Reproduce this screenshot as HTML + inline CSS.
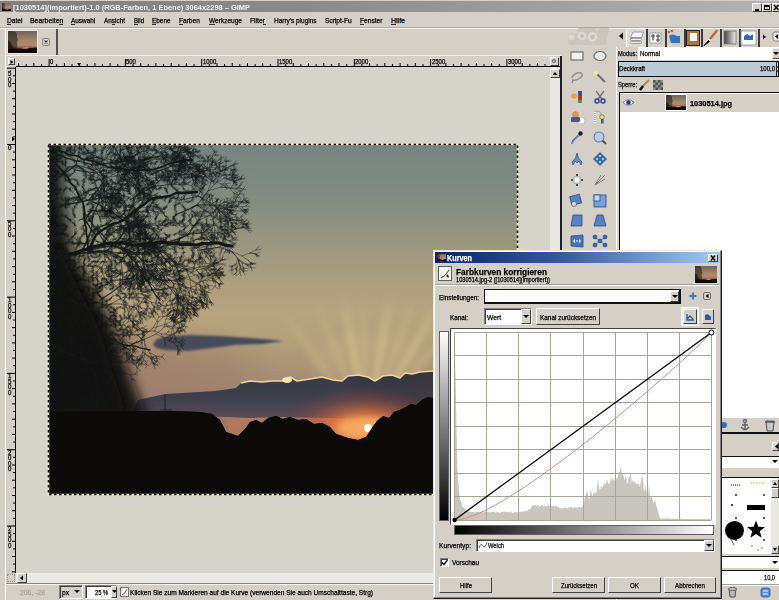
<!DOCTYPE html><html><head><meta charset="utf-8"><style>
html,body{margin:0;padding:0;width:779px;height:600px;overflow:hidden;background:#d4d0c8;}
body{position:relative;font-family:"Liberation Sans",sans-serif;}
div{position:absolute;}
.t{position:absolute;white-space:nowrap;line-height:normal;transform-origin:0 0;-webkit-text-stroke:0.25px currentColor;}
svg{position:absolute;overflow:hidden;}
</style></head><body>
<div style="left:0px;top:0px;width:779px;height:600px;background:#d4d0c8;"></div>
<svg width="0" height="0" style="position:absolute"><defs>
<linearGradient id="thsky" x1="0" y1="0" x2="0" y2="1"><stop offset="0" stop-color="#70645a"/><stop offset=".45" stop-color="#a4886a"/><stop offset=".65" stop-color="#b48a68"/><stop offset=".8" stop-color="#6a4838"/><stop offset="1" stop-color="#0c0806"/></linearGradient>
<radialGradient id="thsun" cx=".6" cy=".5" r=".5"><stop offset="0" stop-color="#ffd080"/><stop offset=".4" stop-color="#e89050"/><stop offset="1" stop-color="#a06040" stop-opacity="0"/></radialGradient>
<symbol id="th" viewBox="0 0 100 75" preserveAspectRatio="none">
<rect width="100" height="75" fill="url(#thsky)"/>
<ellipse cx="58" cy="60" rx="18" ry="8" fill="url(#thsun)"/>
<path d="M0 0 H22 Q34 8 30 20 Q38 30 30 40 Q36 50 28 62 H0Z" fill="#1c1812" opacity=".55"/><path d="M0 30 Q14 40 18 62 H0Z" fill="#140f0c" opacity=".7"/>
<path d="M0 62 Q20 58 40 60 Q60 62 80 58 L100 57 V75 H0Z" fill="#0c0906"/>
</symbol></defs></svg>
<div style="left:0px;top:1px;width:779px;height:11px;background:linear-gradient(90deg,#808080 0%,#8a8a8a 40%,#b4b4b4 100%);"></div>
<svg style="position:absolute;left:2px;top:3px" width="9" height="8"><use href="#th" width="9" height="8"/></svg>
<span class="t" style="left:12.5px;top:3px;font-size:8px;color:#f2f2f2;font-weight:bold;transform:scaleX(0.932);-webkit-text-stroke:0;">[1030514](importiert)-1.0 (RGB-Farben, 1 Ebene) 3064x2298 – GIMP</span>
<div style="left:752px;top:3px;width:10px;height:9px;background:#d4d0c8;border-top:1px solid #fff;border-left:1px solid #fff;border-right:1px solid #404040;border-bottom:1px solid #404040;box-sizing:border-box;"></div>
<div style="left:762px;top:3px;width:10px;height:9px;background:#d4d0c8;border-top:1px solid #fff;border-left:1px solid #fff;border-right:1px solid #404040;border-bottom:1px solid #404040;box-sizing:border-box;"></div>
<div style="left:772px;top:3px;width:10px;height:9px;background:#d4d0c8;border-top:1px solid #fff;border-left:1px solid #fff;border-right:1px solid #404040;border-bottom:1px solid #404040;box-sizing:border-box;"></div>
<div style="left:755px;top:9px;width:4px;height:2px;background:#000;"></div>
<div style="left:764px;top:5px;width:6px;height:5px;border:1px solid #000;border-top-width:2px;box-sizing:border-box;"></div>
<svg style="position:absolute;left:772px;top:3px" width="7" height="9"><path d="M2 2 L6.5 7 M6.5 2 L2 7" stroke="#000" stroke-width="1.4"/></svg>
<span class="t" style="left:6.5px;top:17px;font-size:7px;color:#000;transform:scaleX(0.949);">Datei</span>
<div style="left:6.5px;top:24px;width:4.794917381300983px;height:1px;background:#303030;"></div>
<span class="t" style="left:29.7px;top:17px;font-size:7px;color:#000;transform:scaleX(0.984);">Bearbeiten</span>
<div style="left:59.0px;top:24px;width:3.8288612961841304px;height:1px;background:#303030;"></div>
<span class="t" style="left:71px;top:17px;font-size:7px;color:#000;transform:scaleX(0.918);">Auswahl</span>
<div style="left:71.0px;top:24px;width:4.288050639452267px;height:1px;background:#303030;"></div>
<span class="t" style="left:104px;top:17px;font-size:7px;color:#000;transform:scaleX(0.915);">Ansicht</span>
<div style="left:112.0px;top:24px;width:3.2019058963668847px;height:1px;background:#303030;"></div>
<span class="t" style="left:133.6px;top:17px;font-size:7px;color:#000;transform:scaleX(0.857);">Bild</span>
<div style="left:133.5px;top:24px;width:4.0px;height:1px;background:#303030;"></div>
<span class="t" style="left:152px;top:17px;font-size:7px;color:#000;transform:scaleX(0.914);">Ebene</span>
<div style="left:152.0px;top:24px;width:4.267308341776427px;height:1px;background:#303030;"></div>
<span class="t" style="left:179px;top:17px;font-size:7px;color:#000;transform:scaleX(0.938);">Farben</span>
<div style="left:179.0px;top:24px;width:4.00998613037448px;height:1px;background:#303030;"></div>
<span class="t" style="left:208.6px;top:17px;font-size:7px;color:#000;transform:scaleX(0.935);">Werkzeuge</span>
<div style="left:208.5px;top:24px;width:6.1805057649452575px;height:1px;background:#303030;"></div>
<span class="t" style="left:250px;top:17px;font-size:7px;color:#000;transform:scaleX(0.964);">Filter</span>
<div style="left:263.0px;top:24px;width:2.5px;height:1px;background:#303030;"></div>
<span class="t" style="left:273.5px;top:17px;font-size:7px;color:#000;transform:scaleX(0.922);">Harry's plugins</span>
<span class="t" style="left:324.7px;top:17px;font-size:7px;color:#000;transform:scaleX(0.940);">Script-Fu</span>
<span class="t" style="left:359.8px;top:17px;font-size:7px;color:#000;transform:scaleX(0.948);">Fenster</span>
<div style="left:360.0px;top:24px;width:4.054083249315857px;height:1px;background:#303030;"></div>
<span class="t" style="left:391px;top:17px;font-size:7px;color:#000;">Hilfe</span>
<div style="left:391.0px;top:24px;width:5.053941908713693px;height:1px;background:#303030;"></div>
<div style="left:0px;top:27px;width:779px;height:1px;background:#aeaaa2;"></div>
<div style="left:0px;top:28px;width:779px;height:1px;background:#f4f3ee;"></div>
<div style="left:5px;top:28px;width:1px;height:572px;background:#fff;"></div>
<div style="left:6px;top:29px;width:50px;height:27px;background:#d4d0c8;"></div>
<div style="left:7px;top:30px;width:31px;height:24px;background:#ecebe6;"></div>
<svg style="position:absolute;left:8px;top:31px" width="29" height="22"><use href="#th" width="29" height="22"/></svg>
<div style="left:42px;top:38px;width:8px;height:8px;border:1px solid #808080;border-radius:2px;box-sizing:border-box;background:#dcd8d0;"></div>
<svg style="position:absolute;left:42px;top:38px" width="8" height="8"><path d="M2.5 2.5 L5.5 5.5 M5.5 2.5 L2.5 5.5" stroke="#303030" stroke-width="1.1"/></svg>
<div style="left:56px;top:29px;width:2px;height:27px;background:#505050;"></div>
<div style="left:6px;top:55px;width:555px;height:1px;background:#f0efea;"></div>
<div style="left:8px;top:58px;width:7px;height:7px;background:#d4d0c8;border-top:1px solid #fff;border-left:1px solid #fff;border-right:1px solid #404040;border-bottom:1px solid #404040;box-sizing:border-box;"></div>
<svg style="position:absolute;left:9px;top:59px" width="6" height="6"><path d="M1.5 1 L4.5 3 L1.5 5Z" fill="#000"/></svg>
<div style="left:16px;top:56px;width:545px;height:11px;background:#d4d0c8;"></div>
<div style="left:16px;top:66px;width:545px;height:1px;background:#000;"></div>
<svg style="position:absolute;left:0;top:56px" width="560" height="11"><g fill="#000"><rect x="18.1" y="7" width="1" height="4"/><rect x="25.7" y="8" width="1" height="3"/><rect x="33.3" y="7" width="1" height="4"/><rect x="41.0" y="8" width="1" height="3"/><rect x="48.6" y="3" width="1" height="8"/><rect x="56.2" y="8" width="1" height="3"/><rect x="63.9" y="7" width="1" height="4"/><rect x="71.5" y="8" width="1" height="3"/><rect x="79.1" y="7" width="1" height="4"/><rect x="86.8" y="8" width="1" height="3"/><rect x="94.4" y="7" width="1" height="4"/><rect x="102.0" y="8" width="1" height="3"/><rect x="109.6" y="7" width="1" height="4"/><rect x="117.3" y="8" width="1" height="3"/><rect x="124.9" y="3" width="1" height="8"/><rect x="132.5" y="8" width="1" height="3"/><rect x="140.2" y="7" width="1" height="4"/><rect x="147.8" y="8" width="1" height="3"/><rect x="155.4" y="7" width="1" height="4"/><rect x="163.0" y="8" width="1" height="3"/><rect x="170.7" y="7" width="1" height="4"/><rect x="178.3" y="8" width="1" height="3"/><rect x="185.9" y="7" width="1" height="4"/><rect x="193.6" y="8" width="1" height="3"/><rect x="201.2" y="3" width="1" height="8"/><rect x="208.8" y="8" width="1" height="3"/><rect x="216.5" y="7" width="1" height="4"/><rect x="224.1" y="8" width="1" height="3"/><rect x="231.7" y="7" width="1" height="4"/><rect x="239.3" y="8" width="1" height="3"/><rect x="247.0" y="7" width="1" height="4"/><rect x="254.6" y="8" width="1" height="3"/><rect x="262.2" y="7" width="1" height="4"/><rect x="269.9" y="8" width="1" height="3"/><rect x="277.5" y="3" width="1" height="8"/><rect x="285.1" y="8" width="1" height="3"/><rect x="292.8" y="7" width="1" height="4"/><rect x="300.4" y="8" width="1" height="3"/><rect x="308.0" y="7" width="1" height="4"/><rect x="315.6" y="8" width="1" height="3"/><rect x="323.3" y="7" width="1" height="4"/><rect x="330.9" y="8" width="1" height="3"/><rect x="338.5" y="7" width="1" height="4"/><rect x="346.2" y="8" width="1" height="3"/><rect x="353.8" y="3" width="1" height="8"/><rect x="361.4" y="8" width="1" height="3"/><rect x="369.1" y="7" width="1" height="4"/><rect x="376.7" y="8" width="1" height="3"/><rect x="384.3" y="7" width="1" height="4"/><rect x="391.9" y="8" width="1" height="3"/><rect x="399.6" y="7" width="1" height="4"/><rect x="407.2" y="8" width="1" height="3"/><rect x="414.8" y="7" width="1" height="4"/><rect x="422.5" y="8" width="1" height="3"/><rect x="430.1" y="3" width="1" height="8"/><rect x="437.7" y="8" width="1" height="3"/><rect x="445.4" y="7" width="1" height="4"/><rect x="453.0" y="8" width="1" height="3"/><rect x="460.6" y="7" width="1" height="4"/><rect x="468.2" y="8" width="1" height="3"/><rect x="475.9" y="7" width="1" height="4"/><rect x="483.5" y="8" width="1" height="3"/><rect x="491.1" y="7" width="1" height="4"/><rect x="498.8" y="8" width="1" height="3"/><rect x="506.4" y="3" width="1" height="8"/><rect x="514.0" y="8" width="1" height="3"/><rect x="521.7" y="7" width="1" height="4"/><rect x="529.3" y="8" width="1" height="3"/><rect x="536.9" y="7" width="1" height="4"/><rect x="544.5" y="8" width="1" height="3"/><path d="M77 7 L81 7 L79 10Z"/></g></svg>
<span class="t" style="left:50.1px;top:58px;font-size:6.5px;color:#000;transform:scaleX(0.913);">0</span>
<span class="t" style="left:126.4px;top:58px;font-size:6.5px;color:#000;transform:scaleX(0.913);">500</span>
<span class="t" style="left:202.7px;top:58px;font-size:6.5px;color:#000;transform:scaleX(0.913);">1000</span>
<span class="t" style="left:279.0px;top:58px;font-size:6.5px;color:#000;transform:scaleX(0.913);">1500</span>
<span class="t" style="left:355.3px;top:58px;font-size:6.5px;color:#000;transform:scaleX(0.913);">2000</span>
<span class="t" style="left:431.59999999999997px;top:58px;font-size:6.5px;color:#000;transform:scaleX(0.913);">2500</span>
<span class="t" style="left:507.9px;top:58px;font-size:6.5px;color:#000;transform:scaleX(0.913);">3000</span>
<div style="left:550px;top:57px;width:9px;height:9px;background:#d4d0c8;border-top:1px solid #fff;border-left:1px solid #fff;border-right:1px solid #404040;border-bottom:1px solid #404040;box-sizing:border-box;"></div>
<div style="left:552px;top:59px;width:4px;height:4px;border:1px solid #606060;border-radius:50%;box-sizing:border-box;"></div>
<div style="left:6px;top:67px;width:10px;height:506px;background:#d4d0c8;"></div>
<div style="left:15px;top:67px;width:1px;height:506px;background:#000;"></div>
<svg style="position:absolute;left:11px;top:136px" width="5" height="6"><path d="M1 0.5 L4 3 L1 5.5Z" fill="#000"/></svg>
<svg style="position:absolute;left:0;top:0" width="17" height="600"><g fill="#000"><rect x="7" y="67.7" width="9" height="1"/><rect x="13" y="75.3" width="2.5" height="1"/><rect x="12" y="83.0" width="3.5" height="1"/><rect x="13" y="90.6" width="2.5" height="1"/><rect x="12" y="98.2" width="3.5" height="1"/><rect x="13" y="105.8" width="2.5" height="1"/><rect x="12" y="113.5" width="3.5" height="1"/><rect x="13" y="121.1" width="2.5" height="1"/><rect x="12" y="128.7" width="3.5" height="1"/><rect x="13" y="136.4" width="2.5" height="1"/><rect x="7" y="144.0" width="9" height="1"/><rect x="13" y="151.6" width="2.5" height="1"/><rect x="12" y="159.3" width="3.5" height="1"/><rect x="13" y="166.9" width="2.5" height="1"/><rect x="12" y="174.5" width="3.5" height="1"/><rect x="13" y="182.2" width="2.5" height="1"/><rect x="12" y="189.8" width="3.5" height="1"/><rect x="13" y="197.4" width="2.5" height="1"/><rect x="12" y="205.0" width="3.5" height="1"/><rect x="13" y="212.7" width="2.5" height="1"/><rect x="7" y="220.3" width="9" height="1"/><rect x="13" y="227.9" width="2.5" height="1"/><rect x="12" y="235.6" width="3.5" height="1"/><rect x="13" y="243.2" width="2.5" height="1"/><rect x="12" y="250.8" width="3.5" height="1"/><rect x="13" y="258.4" width="2.5" height="1"/><rect x="12" y="266.1" width="3.5" height="1"/><rect x="13" y="273.7" width="2.5" height="1"/><rect x="12" y="281.3" width="3.5" height="1"/><rect x="13" y="289.0" width="2.5" height="1"/><rect x="7" y="296.6" width="9" height="1"/><rect x="13" y="304.2" width="2.5" height="1"/><rect x="12" y="311.9" width="3.5" height="1"/><rect x="13" y="319.5" width="2.5" height="1"/><rect x="12" y="327.1" width="3.5" height="1"/><rect x="13" y="334.8" width="2.5" height="1"/><rect x="12" y="342.4" width="3.5" height="1"/><rect x="13" y="350.0" width="2.5" height="1"/><rect x="12" y="357.6" width="3.5" height="1"/><rect x="13" y="365.3" width="2.5" height="1"/><rect x="7" y="372.9" width="9" height="1"/><rect x="13" y="380.5" width="2.5" height="1"/><rect x="12" y="388.2" width="3.5" height="1"/><rect x="13" y="395.8" width="2.5" height="1"/><rect x="12" y="403.4" width="3.5" height="1"/><rect x="13" y="411.0" width="2.5" height="1"/><rect x="12" y="418.7" width="3.5" height="1"/><rect x="13" y="426.3" width="2.5" height="1"/><rect x="12" y="433.9" width="3.5" height="1"/><rect x="13" y="441.6" width="2.5" height="1"/><rect x="7" y="449.2" width="9" height="1"/><rect x="13" y="456.8" width="2.5" height="1"/><rect x="12" y="464.5" width="3.5" height="1"/><rect x="13" y="472.1" width="2.5" height="1"/><rect x="12" y="479.7" width="3.5" height="1"/><rect x="13" y="487.3" width="2.5" height="1"/><rect x="12" y="495.0" width="3.5" height="1"/><rect x="13" y="502.6" width="2.5" height="1"/><rect x="12" y="510.2" width="3.5" height="1"/><rect x="13" y="517.9" width="2.5" height="1"/><rect x="7" y="525.5" width="9" height="1"/><rect x="13" y="533.1" width="2.5" height="1"/><rect x="12" y="540.8" width="3.5" height="1"/><rect x="13" y="548.4" width="2.5" height="1"/><rect x="12" y="556.0" width="3.5" height="1"/><rect x="13" y="563.6" width="2.5" height="1"/><rect x="12" y="571.3" width="3.5" height="1"/></g></svg>
<div style="left:9.5px;top:69.7px;width:1.5px;height:1.5px;background:#000;"></div>
<span class="t" style="left:8px;top:70.2px;font-size:6.5px;color:#000;transform:scaleX(0.941);opacity:.99;">5</span>
<span class="t" style="left:8px;top:75.7px;font-size:6.5px;color:#000;transform:scaleX(0.941);opacity:.99;">0</span>
<span class="t" style="left:8px;top:81.2px;font-size:6.5px;color:#000;transform:scaleX(0.941);opacity:.99;">0</span>
<span class="t" style="left:8px;top:143.5px;font-size:6.5px;color:#000;transform:scaleX(0.941);opacity:.99;">0</span>
<span class="t" style="left:8px;top:219.8px;font-size:6.5px;color:#000;transform:scaleX(0.941);opacity:.99;">5</span>
<span class="t" style="left:8px;top:225.3px;font-size:6.5px;color:#000;transform:scaleX(0.941);opacity:.99;">0</span>
<span class="t" style="left:8px;top:230.8px;font-size:6.5px;color:#000;transform:scaleX(0.941);opacity:.99;">0</span>
<span class="t" style="left:8px;top:296.1px;font-size:6.5px;color:#000;transform:scaleX(0.941);opacity:.99;">1</span>
<span class="t" style="left:8px;top:301.6px;font-size:6.5px;color:#000;transform:scaleX(0.941);opacity:.99;">0</span>
<span class="t" style="left:8px;top:307.1px;font-size:6.5px;color:#000;transform:scaleX(0.941);opacity:.99;">0</span>
<span class="t" style="left:8px;top:312.6px;font-size:6.5px;color:#000;transform:scaleX(0.941);opacity:.99;">0</span>
<span class="t" style="left:8px;top:372.4px;font-size:6.5px;color:#000;transform:scaleX(0.941);opacity:.99;">1</span>
<span class="t" style="left:8px;top:377.9px;font-size:6.5px;color:#000;transform:scaleX(0.941);opacity:.99;">5</span>
<span class="t" style="left:8px;top:383.4px;font-size:6.5px;color:#000;transform:scaleX(0.941);opacity:.99;">0</span>
<span class="t" style="left:8px;top:388.9px;font-size:6.5px;color:#000;transform:scaleX(0.941);opacity:.99;">0</span>
<span class="t" style="left:8px;top:448.7px;font-size:6.5px;color:#000;transform:scaleX(0.941);opacity:.99;">2</span>
<span class="t" style="left:8px;top:454.2px;font-size:6.5px;color:#000;transform:scaleX(0.941);opacity:.99;">0</span>
<span class="t" style="left:8px;top:459.7px;font-size:6.5px;color:#000;transform:scaleX(0.941);opacity:.99;">0</span>
<span class="t" style="left:8px;top:465.2px;font-size:6.5px;color:#000;transform:scaleX(0.941);opacity:.99;">0</span>
<span class="t" style="left:8px;top:525.0px;font-size:6.5px;color:#000;transform:scaleX(0.941);opacity:.99;">2</span>
<span class="t" style="left:8px;top:530.5px;font-size:6.5px;color:#000;transform:scaleX(0.941);opacity:.99;">5</span>
<span class="t" style="left:8px;top:536.0px;font-size:6.5px;color:#000;transform:scaleX(0.941);opacity:.99;">0</span>
<span class="t" style="left:8px;top:541.5px;font-size:6.5px;color:#000;transform:scaleX(0.941);opacity:.99;">0</span>
<div style="left:16px;top:67px;width:534px;height:506px;background:#d6d3ca;"></div>
<div style="left:550px;top:67px;width:10px;height:506px;background:#e9e8e2;"></div>
<div style="left:550px;top:69px;width:10px;height:9px;background:#d4d0c8;border-top:1px solid #fff;border-left:1px solid #fff;border-right:1px solid #404040;border-bottom:1px solid #404040;box-sizing:border-box;"></div>
<svg style="position:absolute;left:551px;top:70px" width="8" height="7"><path d="M1.5 5 L4 2 L6.5 5Z" fill="#000"/></svg>
<div style="left:560px;top:56px;width:2px;height:517px;background:#202020;"></div>
<div style="left:16px;top:573px;width:544px;height:10px;background:#e9e8e2;"></div>
<div style="left:17px;top:573px;width:10px;height:10px;background:#d4d0c8;border-top:1px solid #fff;border-left:1px solid #fff;border-right:1px solid #404040;border-bottom:1px solid #404040;box-sizing:border-box;"></div>
<svg style="position:absolute;left:18px;top:574px" width="8" height="8"><path d="M5 1.5 L2 4 L5 6.5Z" fill="#000"/></svg>
<div style="left:7px;top:574px;width:8px;height:8px;border:1px dotted #909090;box-sizing:border-box;"></div>
<div style="left:6px;top:583px;width:427px;height:17px;background:#d4d0c8;"></div>
<div style="left:6px;top:583px;width:427px;height:1px;background:#8a8882;"></div>
<div style="left:6px;top:584px;width:427px;height:1px;background:#f4f3ee;"></div>
<span class="t" style="left:20px;top:589px;font-size:7px;color:#a8a49c;transform:scaleX(0.973);">200, -28</span>
<div style="left:59px;top:585px;width:24px;height:14px;background:#d4d0c8;border-top:1px solid #808080;border-left:1px solid #808080;border-right:1px solid #fff;border-bottom:1px solid #fff;box-sizing:border-box;box-shadow:inset 1px 1px 0 #404040;"></div>
<span class="t" style="left:62px;top:588.5px;font-size:7px;color:#000;transform:scaleX(0.947);">px</span>
<svg style="position:absolute;left:74px;top:590px" width="7" height="4"><path d="M0 0 L6 0 L3 3Z" fill="#000"/></svg>
<div style="left:85px;top:585px;width:32px;height:14px;background:#fff;border-top:1px solid #808080;border-left:1px solid #808080;border-right:1px solid #fff;border-bottom:1px solid #fff;box-sizing:border-box;box-shadow:inset 1px 1px 0 #404040;"></div>
<span class="t" style="left:95px;top:588.5px;font-size:7px;color:#000;transform:scaleX(0.815);">25 %</span>
<div style="left:111px;top:586px;width:6px;height:12px;background:#d4d0c8;border-top:1px solid #fff;border-left:1px solid #fff;border-right:1px solid #404040;border-bottom:1px solid #404040;box-sizing:border-box;"></div>
<svg style="position:absolute;left:112px;top:590px" width="5" height="4"><path d="M0 0 L5 0 L2.5 3Z" fill="#000"/></svg>
<div style="left:120px;top:587px;width:9px;height:10px;border:1px solid #707070;background:#f4f4f0;box-sizing:border-box;"></div>
<svg style="position:absolute;left:120px;top:587px" width="9" height="10"><path d="M2 8 Q5 7 7 2" stroke="#404040" stroke-width=".8" fill="none"/></svg>
<span class="t" style="left:130px;top:589px;font-size:7px;color:#000;transform:scaleX(0.938);">Klicken Sie zum Markieren auf die Kurve (verwenden Sie auch Umschalttaste, Strg)</span>
<svg style="position:absolute;left:48px;top:144px" width="470" height="351" viewBox="0 0 470 351">
<defs>
<linearGradient id="sky" x1="0" y1="0" x2="0" y2="1">
<stop offset="0" stop-color="#768480"/>
<stop offset="0.1" stop-color="#7d8882"/>
<stop offset="0.2" stop-color="#8b8f81"/>
<stop offset="0.3" stop-color="#9d9880"/>
<stop offset="0.4" stop-color="#ad9f7e"/>
<stop offset="0.48" stop-color="#b5a47e"/>
<stop offset="0.56" stop-color="#b3a07b"/>
<stop offset="0.64" stop-color="#a89276"/>
<stop offset="0.72" stop-color="#9c8672"/>
<stop offset="0.80" stop-color="#8a7068"/>
<stop offset="1" stop-color="#6a5a58"/>
</linearGradient>
<radialGradient id="glow" cx="319" cy="284" r="95" gradientUnits="userSpaceOnUse">
<stop offset="0" stop-color="#fff4d0" stop-opacity="1"/>
<stop offset="0.07" stop-color="#f8b868" stop-opacity="1"/>
<stop offset="0.35" stop-color="#d88048" stop-opacity="0.85"/>
<stop offset="0.7" stop-color="#b06848" stop-opacity="0.4"/>
<stop offset="1" stop-color="#a06050" stop-opacity="0"/>
</radialGradient>
<linearGradient id="cl" x1="0" y1="0" x2="0" y2="1">
<stop offset="0" stop-color="#363844"/>
<stop offset="0.6" stop-color="#40404c"/>
<stop offset="1" stop-color="#5a4c54"/>
</linearGradient>
<linearGradient id="rayg" x1="0" y1="150" x2="0" y2="240" gradientUnits="userSpaceOnUse"><stop offset="0" stop-color="#dccb98" stop-opacity="0"/><stop offset="1" stop-color="#e4d4a0" stop-opacity="1"/></linearGradient>
<filter id="b3" x="-20%" y="-20%" width="140%" height="140%"><feGaussianBlur stdDeviation="3"/></filter>
<filter id="b6" x="-30%" y="-30%" width="160%" height="160%"><feGaussianBlur stdDeviation="6"/></filter>
<filter id="b10" x="-30%" y="-30%" width="160%" height="160%"><feGaussianBlur stdDeviation="10"/></filter>
<filter id="b1"><feGaussianBlur stdDeviation="0.8"/></filter>
</defs>
<rect width="470" height="351" fill="url(#sky)"/>
<defs><radialGradient id="pink"><stop offset="0" stop-color="#9a7466" stop-opacity=".55"/><stop offset=".6" stop-color="#9a7466" stop-opacity=".35"/><stop offset="1" stop-color="#9a7466" stop-opacity="0"/></radialGradient></defs><ellipse cx="102" cy="224" rx="130" ry="50" fill="url(#pink)"/>
<g fill="url(#rayg)" filter="url(#b3)"><path d="M318.2 284.6 L319.8 283.4 L242.1 173.0 L237.2 176.5Z" opacity="0.45"/><path d="M318.1 284.4 L319.9 283.6 L271.2 157.7 L265.6 160.0Z" opacity="0.5"/><path d="M318.0 284.2 L320.0 283.8 L300.0 150.3 L291.1 151.8Z" opacity="0.95"/><path d="M318.0 284.0 L320.0 284.0 L317.3 149.0 L311.3 149.2Z" opacity="0.6"/><path d="M318.0 283.8 L320.0 284.2 L346.9 151.8 L338.0 150.3Z" opacity="0.95"/><path d="M318.1 283.7 L319.9 284.3 L368.0 158.2 L362.4 156.1Z" opacity="0.65"/><path d="M318.1 283.5 L319.9 284.5 L390.4 169.3 L382.6 164.8Z" opacity="0.8"/><path d="M318.2 283.4 L319.8 284.6 L408.1 182.5 L403.5 178.7Z" opacity="0.45"/></g>
<g filter="url(#b6)"><ellipse cx="322" cy="216" rx="60" ry="25" fill="#c8b488" opacity=".35"/></g>
<g filter="url(#b1)"><polygon points="105.0,200.0 109.0,195.0 120.0,192.0 142.0,191.0 172.0,192.0 202.0,194.0 236.0,197.0 214.0,200.0 187.0,201.0 164.0,204.0 140.0,207.0 117.0,206.0 108.0,204.0" fill="#464c58"/></g>
<g filter="url(#b1)"><polygon points="104.0,253.0 104.0,253.0" fill="none"/></g>
<rect x="0" y="236" width="470" height="80" fill="url(#glow)"/>
<g filter="url(#b3)"><polygon points="177.0,272.0 385.0,272.0 385.0,298.0 177.0,298.0" fill="#c88058" opacity=".6"/></g>
<polygon points="193.0,239.0 202.0,237.0 214.0,238.0 224.0,237.0 235.0,237.0 242.0,233.0 249.0,237.0 262.0,235.0 274.0,233.0 285.0,236.0 294.0,237.0 300.0,232.0 310.0,231.0 320.0,233.0 327.0,237.0 335.0,232.0 344.0,231.0 352.0,234.0 357.0,229.0 364.0,230.0 372.0,228.0 385.0,227.0 412.0,226.0 470.0,228.0 470.0,276.0 422.0,274.0 372.0,274.0 332.0,276.0 282.0,274.0 232.0,273.0 202.0,274.0 152.0,272.0 112.0,270.0 85.0,269.0 90.0,256.0 117.0,250.0 167.0,247.0 188.0,244.0" fill="url(#cl)"/>
<defs><linearGradient id="clw" x1="0" y1="0" x2="1" y2="0"><stop offset="0" stop-color="#000" stop-opacity="0"/><stop offset=".55" stop-color="#000" stop-opacity="0"/><stop offset="1" stop-color="#8a5048" stop-opacity=".45"/></linearGradient></defs><polygon points="193.0,239.0 202.0,237.0 214.0,238.0 224.0,237.0 235.0,237.0 242.0,233.0 249.0,237.0 262.0,235.0 274.0,233.0 285.0,236.0 294.0,237.0 300.0,232.0 310.0,231.0 320.0,233.0 327.0,237.0 335.0,232.0 344.0,231.0 352.0,234.0 357.0,229.0 364.0,230.0 372.0,228.0 385.0,227.0 412.0,226.0 470.0,228.0 470.0,276.0 422.0,274.0 372.0,274.0 332.0,276.0 282.0,274.0 232.0,273.0 202.0,274.0 152.0,272.0 112.0,270.0 85.0,269.0 90.0,256.0 117.0,250.0 167.0,247.0 188.0,244.0" fill="url(#clw)"/>
<path d="M193.0 239.0 L202.0 237.0 L214.0 238.0 L224.0 237.0 L235.0 237.0 L242.0 233.0 L249.0 237.0 L262.0 235.0 L274.0 233.0 L285.0 236.0 L294.0 237.0 L300.0 232.0 L310.0 231.0 L320.0 233.0 L327.0 237.0 L335.0 232.0 L344.0 231.0 L352.0 234.0 L357.0 229.0 L364.0 230.0 L372.0 228.0 L385.0 227.0 L412.0 226.0 L470.0 228.0" fill="none" stroke="#f0d49a" stroke-width="1.5" stroke-linejoin="round"/>
<ellipse cx="239" cy="236" rx="5" ry="3" fill="#f8e4b0"/>
<defs><radialGradient id="sg"><stop offset="0" stop-color="#ffe0a0" stop-opacity="1"/><stop offset=".12" stop-color="#f8a050" stop-opacity="1"/><stop offset=".4" stop-color="#d87040" stop-opacity=".75"/><stop offset=".7" stop-color="#a05040" stop-opacity=".35"/><stop offset="1" stop-color="#804040" stop-opacity="0"/></radialGradient></defs><ellipse cx="317" cy="284" rx="85" ry="42" fill="url(#sg)"/>
<g filter="url(#b3)"><ellipse cx="319" cy="284" rx="30" ry="10" fill="#f4a860" opacity=".95"/></g>
<circle cx="320" cy="284" r="4" fill="#fffbe8"/>
<polygon points="0.0,268.0 72.0,267.0 122.0,267.0 152.0,268.0 164.0,270.0 172.0,276.0 178.0,288.0 190.0,292.0 198.0,284.0 202.0,278.0 208.0,276.0 214.0,279.0 220.0,274.0 228.0,272.0 235.0,275.0 242.0,273.0 250.0,276.0 258.0,275.0 266.0,280.0 274.0,279.0 282.0,283.0 288.0,290.0 300.0,294.0 310.0,296.0 318.0,293.0 324.0,284.0 329.0,277.0 335.0,272.0 341.0,274.0 346.0,268.0 352.0,266.0 358.0,263.0 363.0,260.0 368.0,261.0 374.0,256.0 380.0,253.0 385.0,254.0 470.0,252.0 470.0,351.0 0.0,351.0" fill="#0b0a08"/>
<rect x="0" y="301" width="470" height="60" fill="#0b0a08"/>
<path d="M117 251 V268 M112 266 H124" stroke="#202020" stroke-width="1"/>
<defs><filter id="tx" x="0" y="0" width="470" height="351" filterUnits="userSpaceOnUse" color-interpolation-filters="sRGB">
<feTurbulence type="turbulence" baseFrequency="0.11" numOctaves="3" seed="9" result="n"/>
<feColorMatrix in="n" type="matrix" values="0 0 0 0 0  0 0 0 0 0  0 0 0 0 0  -3 0 0 0 1.08" result="na"/>
<feFlood flood-color="#151a19" result="col"/>
<feComposite in="col" in2="na" operator="in"/>
</filter>
<mask id="envm" maskUnits="userSpaceOnUse" x="0" y="0" width="470" height="351">
<polygon points="-28.0,-24.0 128.0,-24.0 140.0,6.0 147.0,31.0 152.0,56.0 164.0,76.0 174.0,96.0 170.0,116.0 150.0,128.0 120.0,136.0 92.0,154.0 80.0,186.0 70.0,216.0 64.0,246.0 -28.0,276.0" fill="#fff" filter="url(#b10)"/>
</mask></defs>
<rect width="470" height="351" filter="url(#tx)" mask="url(#envm)"/>
<g filter="url(#b6)"><polygon points="-28.0,-14.0 12.0,-14.0 16.0,56.0 24.0,106.0 47.0,146.0 64.0,176.0 77.0,216.0 90.0,251.0 102.0,276.0 -28.0,276.0" fill="#0f0e0c" opacity=".93"/></g>
<g filter="url(#b3)"><polygon points="-28.0,96.0 12.0,106.0 32.0,146.0 52.0,186.0 64.0,226.0 74.0,256.0 77.0,276.0 -28.0,276.0" fill="#0e0d0b" opacity=".7"/></g>
<polygon points="0.0,268.0 72.0,267.0 122.0,267.0 152.0,268.0 164.0,270.0 172.0,276.0 178.0,288.0 190.0,292.0 198.0,284.0 202.0,278.0 208.0,276.0 214.0,279.0 220.0,274.0 228.0,272.0 235.0,275.0 242.0,273.0 250.0,276.0 258.0,275.0 266.0,280.0 274.0,279.0 282.0,283.0 288.0,290.0 300.0,294.0 310.0,296.0 318.0,293.0 324.0,284.0 329.0,277.0 335.0,272.0 341.0,274.0 346.0,268.0 352.0,266.0 358.0,263.0 363.0,260.0 368.0,261.0 374.0,256.0 380.0,253.0 385.0,254.0 470.0,252.0 470.0,351.0 0.0,351.0" fill="#0b0a08"/>
<path d="M0 115Q17 113 33 109" stroke-width="2.8" fill="none" stroke="#151a19" stroke-linecap="round" opacity=".85"/>
<path d="M33 109Q46 108 59 107M33 109Q39 98 43 87M40 107Q53 102 67 102M77 100Q93 102 109 104" stroke-width="2.0" fill="none" stroke="#151a19" stroke-linecap="round" opacity=".85"/>
<path d="M59 107Q68 110 77 109M59 107Q64 100 72 94M59 107Q67 111 75 114M43 87Q51 83 60 80M43 87Q44 79 45 71M83 110Q87 116 90 121M83 110Q88 111 94 110M83 110Q83 116 85 122M80 84Q87 82 93 79M80 84Q79 76 81 68M86 109Q91 113 95 118M86 109Q95 108 103 108M109 104Q115 114 124 122M109 104Q119 102 128 98M109 104Q118 110 126 118M141 90Q149 90 157 88M141 90Q145 82 151 76M28 17Q37 18 45 21M28 17Q39 15 50 13M77 17Q89 18 101 15M77 17Q86 12 95 7M82 56Q94 48 106 42M41 56Q52 61 63 67M41 56Q50 47 56 37M41 56Q52 54 64 52M46 166Q53 170 59 174M46 166Q54 162 63 160M46 166Q53 173 58 183M52 156Q64 149 75 140M102 31Q113 26 124 22M127 71Q138 67 149 61M72 206Q82 201 92 197M92 126Q104 131 115 137M12 206Q23 211 34 215M7 36Q18 29 28 21M62 -4Q68 5 73 15M152 106Q162 105 172 103M42 76Q50 86 56 98M92 16Q102 14 112 12M62 136Q73 137 84 134M27 26Q38 28 49 29" stroke-width="1.1" fill="none" stroke="#151a19" stroke-linecap="round" opacity=".85"/>
<path d="M77 109Q83 113 90 117M77 109Q82 108 88 108M72 94Q79 94 84 97M72 94Q75 89 78 84M75 114Q79 119 82 124M75 114Q81 111 86 106M60 80Q66 82 72 83M60 80Q64 75 70 72M45 71Q47 65 50 60M45 71Q45 66 45 61M124 122Q126 131 130 139M124 122Q132 123 139 126M128 98Q135 97 142 98M128 98Q133 94 138 90M126 118Q130 125 132 133M126 118Q132 121 138 125M106 42Q115 42 123 40M106 42Q113 36 118 28M75 140Q85 137 94 132M75 140Q75 129 73 118M124 22Q132 23 141 24M124 22Q130 14 133 5M149 61Q158 60 167 62M149 61Q155 54 160 47M149 61Q155 66 162 69M115 137Q122 143 127 151M115 137Q126 137 136 134M34 215Q39 223 46 228M34 215Q43 218 52 217M28 21Q37 25 45 32M28 21Q31 12 32 2M28 21Q37 23 46 26M56 98Q56 107 57 116M56 98Q65 101 74 106M132 56Q141 55 150 52M112 126Q118 133 125 139M82 176Q89 181 95 188" stroke-width="0.85" fill="none" stroke="#151a19" stroke-linecap="round" opacity=".85"/>
<path d="M90 117Q93 120 94 125M90 117Q94 117 99 117M88 108Q90 112 93 115M88 108Q92 106 95 103M84 97Q88 100 91 103M84 97Q89 98 93 101M84 97Q87 101 90 105M78 84Q82 81 87 80M78 84Q78 79 78 75M82 124Q84 128 86 132M82 124Q86 125 91 126M82 124Q85 128 86 132M86 106Q90 106 94 105M86 106Q86 101 84 95M72 83Q76 86 80 89M72 83Q76 82 80 80M72 83Q77 85 82 86M70 72Q75 73 79 74M70 72Q72 69 75 67M70 72Q74 73 78 74M50 60Q55 56 59 54M50 60Q51 56 53 52M50 60Q54 56 59 54M45 61Q49 59 51 56M45 61Q42 58 39 56M90 121Q91 125 93 129M90 121Q94 124 97 127M90 121Q90 126 89 131M94 110Q98 110 102 112M94 110Q97 108 100 106M85 122Q84 126 82 130M85 122Q88 126 89 130M85 122Q86 126 88 130M93 79Q98 80 102 81M93 79Q96 74 99 71M81 68Q84 63 87 59M81 68Q82 63 85 59M95 118Q97 123 97 127M95 118Q99 121 103 125M103 108Q108 113 113 116M103 108Q107 105 112 104M103 108Q108 111 113 114M130 139Q132 146 135 152M130 139Q136 142 143 145M130 139Q130 146 130 154M139 126Q144 130 150 132M139 126Q145 125 151 123M142 98Q146 102 150 106M142 98Q147 96 152 94M142 98Q146 101 151 104M138 90Q143 89 148 88M138 90Q141 87 144 84M132 133Q132 139 132 145M132 133Q134 139 138 143M132 133Q128 138 125 143M138 125Q140 130 142 135M138 125Q142 124 146 123M157 88Q163 88 169 89M157 88Q160 84 165 81M151 76Q157 74 162 71M151 76Q154 71 156 67M45 21Q50 26 54 30M45 21Q52 18 58 15M50 13Q58 16 66 20M50 13Q55 8 58 2M101 15Q108 16 116 15M101 15Q106 9 113 4M95 7Q101 7 108 6M95 7Q98 1 101 -5M95 7Q103 9 110 14M123 40Q129 41 136 40M123 40Q125 35 129 32M118 28Q125 26 131 27M118 28Q117 20 115 14M63 67Q68 73 72 78M63 67Q72 70 82 72M56 37Q63 31 71 27M56 37Q56 28 55 20M64 52Q70 56 75 61M64 52Q66 45 70 38M59 174Q63 178 67 181M59 174Q65 176 70 177M63 160Q71 159 78 161M63 160Q69 156 76 153M58 183Q54 190 52 198M58 183Q63 188 70 191M94 132Q101 134 109 136M94 132Q96 125 97 117M73 118Q76 110 80 103M73 118Q66 112 58 108M73 118Q76 111 77 104M92 197Q100 194 108 190M92 197Q97 189 105 184M46 228Q48 235 50 241M46 228Q52 229 58 228M52 217Q59 220 67 221M52 217Q57 213 60 208M45 32Q47 39 50 46M45 32Q52 35 57 39M32 2Q33 -5 34 -11M32 2Q34 -6 35 -14M32 2Q35 -4 37 -11M46 26Q51 31 56 36M46 26Q53 24 60 23M73 15Q72 24 69 32M73 15Q77 22 83 28M172 103Q178 106 184 108M172 103Q174 96 179 90M57 116Q54 122 53 127M57 116Q60 122 65 127M74 106Q80 113 86 117M74 106Q81 106 87 104M74 106Q78 112 82 118M112 12Q117 14 123 15M112 12Q117 7 124 2M150 52Q156 55 161 58M150 52Q153 47 156 42M150 52Q156 56 161 60M84 134Q89 139 93 145M84 134Q90 130 95 124M125 139Q128 145 130 151M125 139Q131 141 138 144M125 139Q125 145 128 151M49 29Q52 36 56 42M49 29Q56 26 63 23M95 188Q96 194 97 201M95 188Q101 187 107 187M95 188Q94 193 94 199" stroke-width="0.65" fill="none" stroke="#151a19" stroke-linecap="round" opacity=".85"/>
<path d="M94 125Q94 128 93 131M93 131Q92 133 90 134M90 134Q88 134 87 134M90 134Q89 136 88 137M93 131Q94 134 94 136M94 136Q94 137 93 139M94 136Q94 137 95 139M94 136Q94 137 93 138M94 125Q96 127 96 130M96 130Q96 132 95 134M95 134Q95 136 94 137M95 134Q96 136 96 137M96 130Q97 132 99 134M99 134Q100 135 101 136M99 134Q100 134 102 134M94 125Q94 128 93 130M93 130Q92 131 90 132M90 132Q89 132 88 132M90 132Q89 132 88 133M90 132Q88 131 87 131M93 130Q94 132 95 134M95 134Q95 135 95 137M95 134Q96 135 97 135M93 130Q92 132 92 134M92 134Q90 134 90 135M92 134Q92 135 92 137M99 117Q102 118 105 120M105 120Q106 122 107 123M107 123Q107 125 108 126M107 123Q109 125 110 126M107 123Q107 125 105 126M105 120Q108 121 110 121M110 121Q112 122 113 123M110 121Q112 120 113 119M99 117Q102 115 105 114M105 114Q108 113 110 113M110 113Q112 113 114 114M110 113Q111 111 111 110M105 114Q107 112 110 111M110 111Q111 110 113 109M110 111Q110 109 111 107M105 114Q108 114 110 114M110 114Q111 116 112 117M110 114Q112 114 113 113M110 114Q111 115 113 116M93 115Q95 118 98 120M98 120Q99 123 100 125M100 125Q99 127 99 128M100 125Q100 127 101 128M100 125Q99 127 98 128M98 120Q100 121 103 121M103 121Q104 123 105 124M103 121Q104 121 105 120M93 115Q97 116 99 118M99 118Q99 120 100 122M100 122Q100 124 100 126M100 122Q101 124 102 125M99 118Q101 118 104 117M104 117Q105 117 107 116M104 117Q104 116 106 114M104 117Q105 118 106 119M99 118Q101 120 103 121M103 121Q103 122 103 124M103 121Q105 121 107 121M103 121Q104 122 105 124M93 115Q94 118 95 121M95 121Q96 123 97 125M97 125Q97 127 97 128M97 125Q98 126 99 127M97 125Q97 126 98 128M95 121Q98 121 100 121M100 121Q101 122 103 122M100 121Q101 120 103 120M100 121Q101 122 102 123M95 121Q96 123 97 125M97 125Q97 126 97 128M97 125Q98 126 100 127M95 103Q98 102 100 100M100 100Q102 100 104 100M104 100Q105 101 106 101M104 100Q106 99 107 99M100 100Q101 98 103 97M103 97Q104 96 106 96M103 97Q102 95 102 94M100 100Q103 100 105 100M105 100Q107 100 109 100M105 100Q106 99 108 99M105 100Q107 100 109 100M95 103Q96 101 95 99M95 99Q96 97 95 96M95 96Q96 95 96 94M95 96Q95 95 94 94M95 96Q96 95 96 94M95 99Q94 97 93 96M93 96Q92 94 92 93M93 96Q92 96 90 95M95 99Q96 97 96 95M96 95Q97 93 97 92M96 95Q95 94 94 93M91 103Q90 106 89 109M89 109Q87 109 84 110M84 110Q83 110 81 110M84 110Q84 111 83 112M89 109Q89 111 88 114M88 114Q87 115 87 117M88 114Q89 115 90 117M88 114Q88 115 87 117M91 103Q94 103 97 101M97 101Q100 102 102 102M102 102Q104 104 104 106M102 102Q104 101 106 100M97 101Q99 99 101 97M101 97Q102 97 104 97M101 97Q102 96 103 95M91 103Q93 106 95 109M95 109Q95 111 94 114M94 114Q93 115 92 116M94 114Q94 115 95 117M95 109Q98 109 100 110M100 110Q102 111 104 111M100 110Q102 110 103 110M93 101Q95 103 97 105M97 105Q97 107 96 109M96 109Q95 110 94 111M96 109Q97 111 97 112M97 105Q99 107 101 108M101 108Q102 110 103 111M101 108Q102 109 103 110M97 105Q97 107 98 109M98 109Q97 110 96 111M98 109Q99 110 100 111M98 109Q98 110 98 112M93 101Q97 100 101 98M101 98Q104 99 106 100M106 100Q107 102 108 103M106 100Q108 101 110 101M106 100Q106 102 107 104M101 98Q104 97 106 96M106 96Q109 96 111 95M106 96Q107 94 108 92M101 98Q104 100 106 102M106 102Q108 103 110 105M106 102Q109 102 111 103M106 102Q107 104 107 106M90 105Q89 109 87 113M87 113Q85 115 84 118M84 118Q82 118 80 119M84 118Q84 120 85 121M87 113Q88 116 88 119M88 119Q87 121 86 123M88 119Q89 122 90 123M87 113Q86 115 84 117M84 117Q83 118 82 118M84 117Q85 119 86 121M84 117Q83 119 82 120M90 105Q92 107 94 110M94 110Q96 112 97 113M97 113Q98 115 98 117M97 113Q99 114 100 115M94 110Q96 111 97 112M97 112Q97 113 97 114M97 112Q99 112 100 113M94 110Q94 112 95 114M95 114Q94 115 94 117M95 114Q96 115 98 116M87 80Q90 81 93 83M93 83Q95 84 97 85M97 85Q98 87 99 89M97 85Q98 86 100 86M97 85Q98 87 98 88M93 83Q95 82 97 82M97 82Q99 83 100 84M97 82Q98 81 100 80M97 82Q99 83 100 83M93 83Q95 83 98 84M98 84Q100 84 102 84M98 84Q100 83 101 83M87 80Q89 78 92 76M92 76Q95 77 97 78M97 78Q98 79 99 81M97 78Q98 78 100 78M97 78Q97 80 98 82M92 76Q93 75 94 73M94 73Q95 72 97 72M94 73Q94 71 94 69M94 73Q95 72 96 70M92 76Q95 77 97 77M97 77Q98 78 99 78M97 77Q98 76 99 75M78 75Q80 73 83 72M83 72Q85 73 87 74M87 74Q88 75 88 77M87 74Q89 74 91 74M83 72Q85 70 86 68M86 68Q88 67 90 66M86 68Q86 66 87 64M86 68Q88 67 90 67M78 75Q76 73 74 72M74 72Q73 70 71 69M71 69Q72 68 72 67M71 69Q70 69 69 70M74 72Q72 71 70 70M70 70Q70 68 70 67M70 70Q69 70 68 69M86 132Q85 134 84 137M84 137Q82 139 80 140M80 140Q78 140 77 141M80 140Q80 142 79 143M84 137Q84 139 84 142M84 142Q83 143 82 144M84 142Q84 143 85 145M84 142Q83 143 82 145M84 137Q83 139 83 141M83 141Q82 142 81 144M83 141Q83 142 83 143M83 141Q82 142 81 143M86 132Q88 133 91 136M91 136Q91 138 92 140M92 140Q91 142 91 143M92 140Q93 141 95 141M92 140Q92 142 92 143M91 136Q93 136 94 138M94 138Q96 139 96 140M94 138Q96 137 97 137M94 138Q95 139 96 140M91 126Q93 128 96 129M96 129Q98 131 100 133M100 133Q100 135 100 137M100 133Q101 134 102 136M100 133Q101 135 102 136M96 129Q99 129 101 129M101 129Q102 131 103 133M101 129Q103 130 105 131M101 129Q102 131 103 133M96 129Q97 131 96 133M96 133Q95 134 94 135M96 133Q98 134 98 135M91 126Q93 123 95 120M95 120Q96 119 98 117M98 117Q99 117 100 117M98 117Q98 116 98 115M95 120Q95 118 95 116M95 116Q96 114 96 113M95 116Q95 114 96 112M95 120Q97 119 98 117M98 117Q99 116 100 115M98 117Q99 116 100 115M91 126Q93 128 95 130M95 130Q96 132 96 134M96 134Q95 136 95 138M96 134Q97 136 98 137M96 134Q95 136 94 137M95 130Q97 131 99 132M99 132Q99 133 100 133M99 132Q100 132 101 133M86 132Q84 135 82 137M82 137Q80 137 78 138M78 138Q76 137 75 137M78 138Q77 139 76 140M82 137Q82 139 82 141M82 141Q81 142 80 143M82 141Q82 142 83 144M82 137Q81 138 79 139M79 139Q78 139 77 140M79 139Q78 139 77 141M86 132Q87 136 88 139M88 139Q87 142 86 144M86 144Q84 146 84 148M86 144Q85 146 85 148M86 144Q84 145 82 146M88 139Q90 141 92 143M92 143Q93 145 93 147M92 143Q94 144 96 145M86 132Q85 136 83 139M83 139Q81 140 78 141M78 141Q76 140 73 139M78 141Q76 142 75 144M78 141Q76 140 73 139M83 139Q83 141 82 144M82 144Q80 145 79 146M82 144Q82 145 82 147M82 144Q80 145 79 146M94 105Q97 105 100 105M100 105Q101 106 103 107M103 107Q103 109 103 110M103 107Q104 107 105 107M100 105Q101 103 102 101M102 101Q103 100 104 99M102 101Q101 100 101 98M94 105Q97 104 100 102M100 102Q103 102 106 103M106 103Q107 104 108 105M106 103Q107 103 109 104M100 102Q101 100 102 97M102 97Q103 96 104 95M102 97Q102 96 103 94M100 102Q103 102 105 103M105 103Q106 104 107 105M105 103Q106 103 107 102M84 95Q82 92 81 88M81 88Q81 85 81 82M81 82Q82 80 83 79M81 82Q81 80 80 78M81 82Q83 80 85 79M81 88Q79 85 77 84M77 84Q75 82 74 81M77 84Q75 83 73 82M84 95Q81 93 78 90M78 90Q75 88 73 86M73 86Q72 84 71 82M73 86Q70 86 68 86M78 90Q75 89 73 88M73 88Q72 87 71 85M73 88Q71 89 69 89M73 88Q71 87 70 86M80 89Q81 91 82 94M82 94Q83 96 83 98M83 98Q82 99 81 99M83 98Q83 99 84 100M82 94Q84 95 86 95M86 95Q88 96 89 96M86 95Q88 94 89 94M86 95Q88 95 89 96M82 94Q83 96 83 97M83 97Q82 99 81 99M83 97Q83 99 83 100M80 89Q83 90 87 91M87 91Q88 93 91 95M91 95Q92 97 93 98M91 95Q93 95 95 96M91 95Q91 97 93 98M87 91Q89 90 92 89M92 89Q94 89 97 89M92 89Q94 88 95 87M80 89Q81 92 83 94M83 94Q82 97 83 99M83 99Q82 100 80 102M83 99Q84 101 85 102M83 94Q84 96 86 97M86 97Q87 99 88 100M86 97Q88 98 89 98M83 94Q82 97 83 99M83 99Q83 101 83 103M83 99Q84 101 84 103M80 80Q83 80 86 79M86 79Q88 80 90 81M90 81Q91 82 91 84M90 81Q91 81 93 81M86 79Q88 78 90 77M90 77Q92 77 93 77M90 77Q91 76 92 75M90 77Q91 77 93 77M80 80Q83 79 85 78M85 78Q87 78 89 79M89 79Q89 80 90 81M89 79Q90 79 91 79M85 78Q87 76 88 75M88 75Q90 75 91 76M88 75Q89 73 89 72M80 80Q84 80 87 81M87 81Q88 83 90 84M90 84Q91 86 91 88M90 84Q92 85 93 86M90 84Q91 86 92 88M87 81Q89 80 91 78M91 78Q93 77 94 76M91 78Q92 77 93 75M82 86Q86 88 89 90M89 90Q88 92 88 95M88 95Q87 96 86 97M88 95Q88 96 89 98M89 90Q91 90 93 91M93 91Q95 91 96 92M93 91Q95 89 96 88M93 91Q94 92 95 93M82 86Q85 85 88 83M88 83Q91 84 94 83M94 83Q95 83 97 83M94 83Q95 82 97 81M88 83Q90 82 92 81M92 81Q93 82 95 83M92 81Q92 79 93 78M92 81Q93 81 95 80M88 83Q91 83 93 84M93 84Q95 84 96 86M93 84Q94 82 96 81M79 74Q82 76 85 77M85 77Q85 79 87 81M87 81Q87 82 88 83M87 81Q88 81 89 80M85 77Q87 77 89 76M89 76Q90 77 91 77M89 76Q90 75 91 73M89 76Q90 76 92 77M85 77Q86 79 88 81M88 81Q88 82 89 84M88 81Q89 81 91 81M79 74Q83 73 87 72M87 72Q88 75 91 77M91 77Q91 78 93 80M91 77Q92 77 94 78M87 72Q89 70 91 68M91 68Q93 68 96 68M91 68Q91 66 90 64M75 67Q78 67 81 66M81 66Q83 68 84 70M84 70Q85 71 86 72M84 70Q86 70 87 71M81 66Q83 65 84 63M84 63Q85 62 87 61M84 63Q84 61 84 59M81 66Q83 67 85 67M85 67Q86 68 87 69M85 67Q86 67 88 67M75 67Q77 65 78 63M78 63Q80 62 81 61M81 61Q82 61 84 62M81 61Q82 60 84 60M78 63Q78 61 78 60M78 60Q78 59 78 58M78 60Q77 59 76 58M78 63Q80 62 81 61M81 61Q82 61 83 61M81 61Q81 60 81 59M75 67Q78 66 81 66M81 66Q83 67 85 68M85 68Q87 69 88 69M85 68Q86 68 88 68M81 66Q83 65 84 65M84 65Q86 65 87 66M84 65Q85 63 87 63M84 65Q86 65 87 65M78 74Q80 76 82 79M82 79Q82 81 83 83M83 83Q82 84 81 85M83 83Q83 84 84 86M82 79Q84 78 86 78M86 78Q88 78 89 77M86 78Q87 76 88 75M78 74Q80 73 83 72M83 72Q85 71 87 71M87 71Q88 72 88 74M87 71Q88 70 88 69M83 72Q84 70 86 69M86 69Q88 69 89 69M86 69Q87 69 88 68M78 74Q80 76 82 78M82 78Q83 80 84 81M84 81Q84 82 85 83M84 81Q85 82 86 82M84 81Q84 82 85 84M82 78Q84 78 86 78M86 78Q87 78 88 79M86 78Q87 77 88 77M59 54Q63 54 67 54M67 54Q70 55 73 56M73 56Q74 58 75 59M73 56Q75 57 77 57M67 54Q70 54 73 55M73 55Q74 57 75 58M73 55Q74 55 76 54M59 54Q60 50 61 46M61 46Q63 43 64 40M64 40Q65 39 67 38M64 40Q64 38 64 36M61 46Q59 43 58 41M58 41Q58 39 60 37M58 41Q56 40 54 39M61 46Q62 43 64 41M64 41Q65 41 67 40M64 41Q64 39 65 37M59 54Q63 54 67 54M67 54Q68 56 70 58M70 58Q71 59 72 60M70 58Q72 58 73 59M67 54Q70 54 73 53M73 53Q74 53 76 54M73 53Q74 51 76 50M67 54Q70 56 72 58M72 58Q73 60 73 62M72 58Q74 59 76 59M72 58Q74 60 76 62M53 52Q55 49 56 46M56 46Q57 44 58 42M58 42Q59 40 60 39M58 42Q56 41 55 40M56 46Q56 44 55 42M55 42Q54 41 54 39M55 42Q53 42 52 41M55 42Q54 41 53 40M53 52Q52 49 53 46M53 46Q54 44 55 43M55 43Q57 42 58 42M55 43Q56 42 57 40M53 46Q53 44 53 42M53 42Q53 41 54 39M53 42Q52 41 52 40M59 54Q63 55 67 55M67 55Q69 57 71 57M71 57Q72 59 73 60M71 57Q73 57 75 56M67 55Q69 54 70 52M70 52Q72 50 73 49M70 52Q71 50 72 48M67 55Q68 57 70 59M70 59Q70 61 69 63M70 59Q71 61 71 63M70 59Q71 61 72 63M59 54Q59 50 59 46M59 46Q60 44 61 41M61 41Q63 40 64 40M61 41Q62 39 62 37M59 46Q58 44 57 41M57 41Q56 39 56 37M57 41Q56 40 55 38M57 41Q57 40 57 38M59 54Q62 52 66 51M66 51Q68 52 71 53M71 53Q72 54 73 56M71 53Q73 53 75 53M66 51Q67 49 68 46M68 46Q69 45 71 44M68 46Q68 44 68 43M68 46Q70 46 72 46M66 51Q68 50 70 49M70 49Q71 50 73 50M70 49Q71 48 73 47M51 56Q54 54 57 53M57 53Q59 53 62 54M62 54Q63 55 64 57M62 54Q63 54 65 54M57 53Q59 51 60 50M60 50Q62 50 63 50M60 50Q61 49 62 47M60 50Q62 50 64 50M51 56Q52 53 52 49M52 49Q53 47 53 45M53 45Q54 44 56 42M53 45Q54 43 54 42M52 49Q51 47 50 45M50 45Q49 44 48 42M50 45Q48 44 47 43M39 56Q37 54 36 51M36 51Q36 49 36 48M36 48Q36 47 36 45M36 48Q35 47 34 46M36 51Q34 50 33 49M33 49Q32 48 31 47M33 49Q32 49 31 50M33 49Q33 47 32 46M39 56Q35 55 32 56M32 56Q30 56 28 56M28 56Q26 57 24 57M28 56Q27 57 25 58M32 56Q30 56 28 55M28 55Q27 55 26 54M28 55Q27 56 25 57M39 56Q36 54 34 53M34 53Q33 51 31 49M31 49Q31 48 30 47M31 49Q30 49 29 50M34 53Q31 52 29 53M29 53Q27 52 26 50M29 53Q27 53 25 53M93 129Q94 132 93 135M93 135Q92 136 91 138M91 138Q90 139 89 140M91 138Q90 139 89 141M93 135Q94 136 94 138M94 138Q94 139 94 141M94 138Q95 139 96 140M94 138Q94 139 94 141M93 129Q96 130 99 131M99 131Q101 132 103 133M103 133Q103 135 104 136M103 133Q104 133 106 132M99 131Q101 131 103 131M103 131Q105 132 106 133M103 131Q104 130 106 130M103 131Q104 132 106 133M99 131Q101 131 103 132M103 132Q104 132 106 132M103 132Q104 131 106 131M93 129Q94 132 95 134M95 134Q94 136 94 138M94 138Q93 139 93 141M94 138Q95 139 96 140M95 134Q96 136 98 137M98 137Q99 138 100 140M98 137Q100 137 101 136M97 127Q98 131 98 134M98 134Q97 136 96 138M96 138Q95 139 93 140M96 138Q95 140 95 141M98 134Q100 136 102 138M102 138Q103 139 103 141M102 138Q103 138 105 139M97 127Q100 129 103 130M103 130Q105 132 106 134M106 134Q107 135 107 137M106 134Q107 134 109 135M106 134Q106 136 105 137M103 130Q105 128 107 127M107 127Q109 127 111 127M107 127Q108 126 108 124M107 127Q110 127 112 127M89 131Q88 134 88 137M88 137Q87 138 85 140M85 140Q83 140 82 140M85 140Q85 142 84 143M88 137Q90 138 91 139M91 139Q92 141 92 142M91 139Q93 140 95 140M91 139Q93 140 93 141M89 131Q90 134 92 137M92 137Q91 139 91 141M91 141Q90 142 89 144M91 141Q92 142 93 143M92 137Q94 138 96 138M96 138Q97 139 97 140M96 138Q97 138 98 137M96 138Q96 139 97 140M102 112Q103 115 104 117M104 117Q104 119 104 121M104 121Q104 122 104 123M104 121Q105 122 105 123M104 117Q106 118 107 119M107 119Q107 121 107 122M107 119Q108 120 109 120M102 112Q106 112 109 112M109 112Q111 113 113 114M113 114Q114 115 114 117M113 114Q114 115 115 116M109 112Q111 111 113 109M113 109Q114 109 115 108M113 109Q113 108 112 107M109 112Q111 113 114 113M114 113Q115 114 116 115M114 113Q115 112 117 112M114 113Q115 114 117 115M100 106Q103 107 106 107M106 107Q107 109 109 110M109 110Q110 111 110 113M109 110Q110 111 112 111M109 110Q109 111 109 113M106 107Q108 107 109 108M109 108Q110 108 111 109M109 108Q111 107 112 106M100 106Q102 104 102 102M102 102Q104 101 105 101M105 101Q106 100 107 101M105 101Q106 100 106 99M105 101Q106 101 107 101M102 102Q102 101 102 99M102 99Q103 99 103 98M102 99Q102 99 102 98M100 106Q103 107 106 108M106 108Q108 109 109 110M109 110Q110 111 111 112M109 110Q111 110 113 109M106 108Q108 106 110 106M110 106Q111 106 112 107M110 106Q111 105 112 104M110 106Q111 106 112 106M82 130Q80 133 79 135M79 135Q78 137 77 138M77 138Q76 140 75 140M77 138Q76 139 75 140M77 138Q76 139 74 139M79 135Q79 137 80 139M80 139Q79 141 79 142M80 139Q81 140 81 141M82 130Q81 133 80 135M80 135Q78 137 77 138M77 138Q75 138 74 138M77 138Q76 139 75 140M77 138Q75 137 74 137M80 135Q81 138 81 139M81 139Q82 141 82 143M81 139Q83 140 84 141M89 130Q89 134 89 137M89 137Q88 140 86 142M86 142Q85 143 84 145M86 142Q86 144 85 145M89 137Q89 140 90 143M90 143Q88 145 86 146M90 143Q91 145 93 146M90 143Q88 145 87 146M89 130Q92 132 94 135M94 135Q95 137 95 140M95 140Q94 142 93 144M95 140Q96 142 98 144M94 135Q96 135 99 136M99 136Q100 137 101 139M99 136Q100 135 102 134M99 136Q100 137 101 138M88 130Q88 134 89 137M89 137Q89 140 90 142M90 142Q90 143 90 145M90 142Q92 142 94 143M89 137Q90 139 92 140M92 140Q93 142 93 144M92 140Q94 140 96 140M88 130Q91 132 93 133M93 133Q93 135 93 137M93 137Q92 138 91 139M93 137Q93 139 92 140M93 133Q95 134 97 135M97 135Q98 136 99 137M97 135Q98 135 99 136M93 133Q94 135 95 137M95 137Q96 138 96 140M95 137Q96 137 97 138M102 81Q104 83 106 84M106 84Q107 86 109 87M109 87Q109 88 110 89M109 87Q110 87 112 88M106 84Q108 85 110 85M110 85Q111 86 112 87M110 85Q111 84 112 83M110 85Q111 86 113 86M102 81Q105 80 107 79M107 79Q109 79 111 79M111 79Q112 79 113 80M111 79Q112 78 112 77M107 79Q109 78 111 77M111 77Q112 77 113 78M111 77Q112 76 113 75M111 77Q112 77 114 77M99 71Q102 69 105 67M105 67Q107 68 109 68M109 68Q111 69 112 69M109 68Q110 67 111 66M105 67Q105 65 105 63M105 63Q105 62 106 60M105 63Q104 62 102 62M105 67Q107 66 109 65M109 65Q110 66 111 66M109 65Q110 64 111 63M109 65Q110 65 111 65M99 71Q100 67 102 63M102 63Q103 61 105 59M105 59Q107 58 109 58M105 59Q105 57 106 55M102 63Q103 61 104 59M104 59Q105 58 107 58M104 59Q105 57 105 55M87 59Q90 57 94 56M94 56Q96 56 99 57M99 57Q101 59 102 60M99 57Q101 57 103 57M94 56Q95 54 96 52M96 52Q97 50 98 49M96 52Q96 50 96 48M94 56Q96 55 98 55M98 55Q99 55 101 55M98 55Q99 55 101 55M98 55Q99 56 101 56M87 59Q89 56 92 54M92 54Q95 53 97 52M97 52Q99 52 101 51M97 52Q98 51 99 49M97 52Q99 52 101 52M92 54Q93 51 93 49M93 49Q94 48 96 47M93 49Q92 47 91 45M93 49Q94 48 96 47M87 59Q90 55 92 51M92 51Q93 49 94 46M94 46Q97 46 99 46M94 46Q94 45 94 43M94 46Q96 46 98 45M92 51Q91 48 89 45M89 45Q91 43 92 41M89 45Q87 44 85 42M92 51Q94 49 95 46M95 46Q96 44 97 41M95 46Q95 44 95 41M95 46Q97 44 99 43M85 59Q87 55 89 52M89 52Q92 52 94 51M94 51Q96 52 98 52M94 51Q95 49 97 48M89 52Q89 49 88 47M88 47Q88 45 87 43M88 47Q87 45 86 43M85 59Q86 55 85 52M85 52Q87 51 90 50M90 50Q91 51 92 52M90 50Q90 48 91 47M85 52Q83 51 82 50M82 50Q81 48 81 47M82 50Q80 49 79 49M85 52Q87 50 88 48M88 48Q89 46 90 45M88 48Q87 46 87 44M88 48Q89 47 90 46M97 127Q98 131 97 134M97 134Q96 136 94 138M94 138Q93 140 91 141M94 138Q93 140 93 141M97 134Q99 137 101 139M101 139Q101 140 101 142M101 139Q102 140 104 141M97 127Q99 131 101 134M101 134Q101 136 102 139M102 139Q101 140 100 142M102 139Q103 140 104 141M102 139Q101 140 101 142M101 134Q103 134 106 134M106 134Q107 135 109 135M106 134Q107 133 109 132M106 134Q108 135 110 135M103 125Q104 128 107 131M107 131Q107 134 109 136M109 136Q110 138 112 140M109 136Q111 137 112 138M107 131Q110 132 113 134M113 134Q113 136 112 137M113 134Q114 133 116 132M113 134Q114 135 117 136M103 125Q106 126 108 128M108 128Q110 130 112 132M112 132Q112 134 112 135M112 132Q114 131 116 132M112 132Q112 134 112 135M108 128Q110 130 111 131M111 131Q113 132 114 133M111 131Q113 130 114 130M113 116Q115 120 116 124M116 124Q115 127 115 130M115 130Q114 131 112 132M115 130Q116 132 116 134M116 124Q118 126 119 129M119 129Q120 130 121 132M119 129Q120 130 122 132M116 124Q115 126 114 128M114 128Q112 129 110 129M114 128Q115 130 115 132M113 116Q117 117 121 118M121 118Q123 119 125 121M125 121Q126 122 127 124M125 121Q127 121 129 122M121 118Q124 117 127 117M127 117Q129 119 130 121M127 117Q128 115 130 113M113 116Q114 120 114 125M114 125Q113 128 112 131M112 131Q111 133 110 135M112 131Q113 133 114 136M114 125Q117 127 120 128M120 128Q121 130 122 132M120 128Q122 127 125 126M112 104Q116 103 119 103M119 103Q122 104 124 105M124 105Q125 106 127 107M124 105Q126 105 128 106M119 103Q122 102 123 100M123 100Q125 99 127 98M123 100Q123 98 123 96M112 104Q115 102 118 99M118 99Q121 99 123 100M123 100Q125 101 127 101M123 100Q125 99 127 98M118 99Q118 96 119 94M119 94Q121 92 122 90M119 94Q120 92 120 90M113 114Q115 117 117 121M117 121Q117 123 118 125M118 125Q117 127 117 128M118 125Q118 127 119 129M117 121Q119 122 121 124M121 124Q122 125 123 126M121 124Q122 125 123 126M121 124Q122 125 123 127M113 114Q117 115 121 115M121 115Q124 117 126 120M126 120Q127 122 129 124M126 120Q129 120 131 120M121 115Q124 115 127 114M127 114Q129 114 131 113M127 114Q128 112 129 110M121 115Q124 116 126 118M126 118Q128 119 129 121M126 118Q127 118 129 118M135 152Q135 156 136 160M136 160Q136 163 136 166M136 166Q134 168 132 170M136 166Q136 169 136 171M136 166Q134 168 133 170M136 160Q137 162 139 164M139 164Q139 166 141 168M139 164Q140 165 142 166M139 164Q138 166 138 168M136 160Q135 162 134 165M134 165Q134 166 133 168M134 165Q134 167 134 169M134 165Q132 166 130 167M135 152Q137 156 140 160M140 160Q140 164 140 168M140 168Q139 171 138 174M140 168Q141 170 142 172M140 160Q143 163 146 164M146 164Q147 167 148 169M146 164Q149 164 152 164M146 164Q147 167 148 169M135 152Q138 156 140 161M140 161Q139 165 139 169M139 169Q139 172 139 174M139 169Q141 171 143 174M140 161Q142 164 146 166M146 166Q146 168 147 170M146 166Q149 165 152 164M146 166Q146 169 147 172M143 145Q144 149 145 153M145 153Q144 156 143 159M143 159Q141 161 139 162M143 159Q145 161 147 163M145 153Q147 156 148 159M148 159Q148 161 148 163M148 159Q150 160 152 162M143 145Q147 146 151 146M151 146Q154 148 156 149M156 149Q157 151 159 153M156 149Q158 150 159 151M151 146Q154 145 157 143M157 143Q159 143 161 142M157 143Q158 141 159 140M130 154Q130 160 130 165M130 165Q127 168 125 171M125 171Q123 171 121 172M125 171Q126 173 127 175M125 171Q124 172 123 174M130 165Q133 168 135 170M135 170Q135 173 135 175M135 170Q137 172 139 173M135 170Q137 172 139 174M130 154Q133 158 135 162M135 162Q134 165 134 168M134 168Q132 169 130 171M134 168Q134 170 133 173M134 168Q133 170 132 172M135 162Q138 163 142 165M142 165Q144 167 146 169M142 165Q145 165 147 166M135 162Q136 165 135 169M135 169Q135 171 134 173M135 169Q137 170 138 172M150 132Q151 136 152 141M152 141Q152 144 154 148M154 148Q154 150 154 153M154 148Q155 150 156 152M152 141Q154 144 156 146M156 146Q156 149 157 151M156 146Q159 148 161 149M152 141Q153 144 153 147M153 147Q153 149 153 151M153 147Q155 148 155 150M150 132Q154 132 159 132M159 132Q162 134 165 135M165 135Q165 137 166 139M165 135Q167 134 168 133M159 132Q161 131 164 130M164 130Q167 129 169 127M164 130Q166 128 167 126M164 130Q166 130 168 130M150 132Q152 135 155 138M155 138Q156 141 157 143M157 143Q157 145 157 147M157 143Q159 144 161 144M155 138Q158 139 160 141M160 141Q160 143 160 144M160 141Q162 141 165 142M160 141Q161 143 161 145M151 123Q155 125 158 126M158 126Q159 128 161 130M161 130Q162 132 162 133M161 130Q162 131 163 132M158 126Q161 126 163 126M163 126Q165 126 167 126M163 126Q165 125 166 125M158 126Q159 129 160 131M160 131Q160 133 160 135M160 131Q162 132 164 132M151 123Q155 123 159 122M159 122Q162 122 165 122M165 122Q168 122 170 121M165 122Q167 120 168 119M159 122Q162 122 165 120M165 120Q167 119 170 118M165 120Q166 118 167 116M159 122Q162 124 164 125M164 125Q165 127 166 129M164 125Q166 125 168 125M150 106Q150 109 151 113M151 113Q151 115 151 118M151 118Q151 119 150 121M151 118Q152 119 153 120M151 113Q151 115 152 118M152 118Q151 119 151 121M152 118Q154 119 155 121M152 118Q152 120 152 122M150 106Q154 107 158 108M158 108Q160 110 162 112M162 112Q162 114 163 116M162 112Q163 113 165 113M162 112Q162 113 163 115M158 108Q160 107 162 105M162 105Q164 106 166 106M162 105Q163 104 163 102M152 94Q155 94 159 94M159 94Q161 96 163 98M163 98Q163 100 162 102M163 98Q164 99 166 98M163 98Q162 100 163 103M159 94Q161 92 163 91M163 91Q164 90 166 89M163 91Q163 89 164 88M163 91Q165 91 166 90M159 94Q161 96 163 98M163 98Q164 99 165 100M163 98Q165 98 166 99M152 94Q154 91 156 88M156 88Q158 86 160 85M160 85Q161 85 163 86M160 85Q162 84 163 83M156 88Q155 85 154 83M154 83Q155 81 155 80M154 83Q153 82 153 81M156 88Q158 86 161 86M161 86Q163 87 165 87M161 86Q163 85 165 84M151 104Q152 108 153 113M153 113Q151 115 149 118M149 118Q147 117 145 117M149 118Q149 120 150 121M149 118Q147 118 144 118M153 113Q155 115 157 117M157 117Q157 120 157 122M157 117Q158 119 159 120M153 113Q151 115 148 116M148 116Q147 117 145 119M148 116Q148 118 146 120M151 104Q154 103 159 102M159 102Q162 102 165 101M165 101Q167 103 168 104M165 101Q166 100 168 98M159 102Q161 101 163 100M163 100Q165 99 166 99M163 100Q164 98 165 97M148 88Q151 89 154 91M154 91Q155 93 156 94M156 94Q157 96 157 97M156 94Q158 95 159 97M156 94Q157 96 156 97M154 91Q156 91 158 92M158 92Q159 93 160 94M158 92Q160 91 161 90M148 88Q151 87 154 84M154 84Q157 84 159 82M159 82Q161 83 163 84M159 82Q160 81 162 80M154 84Q156 82 158 80M158 80Q160 81 162 80M158 80Q159 79 159 77M158 80Q160 81 162 81M154 84Q156 83 159 82M159 82Q160 82 162 83M159 82Q160 81 161 80M144 84Q146 82 148 80M148 80Q150 80 152 80M152 80Q153 80 155 81M152 80Q153 79 155 78M148 80Q148 78 149 76M149 76Q150 75 151 75M149 76Q148 75 148 74M144 84Q144 80 143 77M143 77Q144 74 144 71M144 71Q145 70 147 69M144 71Q143 70 143 68M143 77Q142 74 141 72M141 72Q142 70 143 69M141 72Q140 70 138 69M144 84Q146 82 148 80M148 80Q150 79 152 78M152 78Q153 79 154 79M152 78Q152 77 152 75M148 80Q149 78 150 77M150 77Q151 76 152 75M150 77Q151 75 151 74M132 145Q131 149 130 152M130 152Q127 154 125 156M125 156Q123 157 121 158M125 156Q124 158 123 160M130 152Q129 155 130 157M130 157Q129 159 128 160M130 157Q131 158 133 159M130 157Q130 159 129 161M130 152Q127 154 125 156M125 156Q123 156 121 157M125 156Q124 157 123 159M132 145Q135 148 136 151M136 151Q136 153 135 155M135 155Q134 156 132 157M135 155Q136 157 136 158M135 155Q134 157 134 158M136 151Q139 151 141 152M141 152Q142 153 144 154M141 152Q143 153 145 153M132 145Q131 149 130 153M130 153Q129 156 127 159M127 159Q125 160 123 161M127 159Q126 161 126 163M130 153Q130 156 131 160M131 160Q130 162 129 164M131 160Q133 161 135 162M138 143Q138 147 137 151M137 151Q136 153 135 155M135 155Q134 157 134 158M135 155Q135 157 135 159M137 151Q138 153 139 156M139 156Q140 157 141 159M139 156Q140 158 142 159M137 151Q135 153 132 154M132 154Q130 153 129 152M132 154Q131 155 129 157M132 154Q130 154 128 154M138 143Q141 147 142 151M142 151Q141 154 140 157M140 157Q140 160 140 163M140 157Q142 159 143 161M140 157Q138 159 136 161M142 151Q145 153 148 154M148 154Q149 156 151 158M148 154Q150 153 152 153M148 154Q150 156 152 158M125 143Q121 144 117 145M117 145Q114 145 112 146M112 146Q110 146 108 146M112 146Q111 148 110 150M112 146Q109 146 107 146M117 145Q115 147 114 149M114 149Q112 149 110 149M114 149Q113 150 114 152M125 143Q123 147 123 150M123 150Q120 151 118 153M118 153Q117 153 115 152M118 153Q118 154 117 156M123 150Q122 153 122 156M122 156Q120 157 119 159M122 156Q123 158 124 161M125 143Q120 143 116 145M116 145Q113 144 111 142M111 142Q111 140 111 137M111 142Q109 142 107 141M116 145Q115 147 115 150M115 150Q114 152 113 154M115 150Q116 152 116 154M115 150Q114 152 112 153M116 145Q112 145 109 146M109 146Q107 143 105 142M109 146Q106 146 103 146M109 146Q106 144 105 141M142 135Q142 139 143 143M143 143Q143 146 141 148M141 148Q139 149 137 150M141 148Q141 150 141 152M141 148Q140 150 139 151M143 143Q145 145 147 148M147 148Q147 150 147 151M147 148Q149 148 151 149M142 135Q145 137 148 140M148 140Q148 142 148 145M148 145Q148 147 147 150M148 145Q149 147 150 149M148 145Q147 147 145 148M148 140Q151 140 154 142M154 142Q155 144 157 145M154 142Q156 142 158 142M146 123Q148 125 150 128M150 128Q152 129 153 131M153 131Q154 132 154 133M153 131Q154 132 155 133M153 131Q153 132 152 133M150 128Q152 129 153 131M153 131Q154 133 154 134M153 131Q154 132 155 134M150 128Q152 130 154 131M154 131Q154 133 154 134M154 131Q156 131 157 132M154 131Q155 132 156 133M146 123Q147 120 148 117M148 117Q150 116 152 115M152 115Q154 115 155 116M152 115Q154 114 156 113M148 117Q147 116 145 114M145 114Q146 112 146 111M145 114Q144 112 143 111M148 117Q150 115 152 114M152 114Q153 112 154 111M152 114Q152 112 152 110M152 114Q154 113 155 114M169 89Q172 93 175 95M175 95Q176 98 177 102M177 102Q176 104 174 105M174 105Q172 105 171 105M174 105Q174 107 173 109M177 102Q178 104 178 106M178 106Q177 108 176 109M178 106Q180 107 181 108M178 106Q177 108 176 110M175 95Q178 96 181 97M181 97Q183 99 185 100M185 100Q186 101 186 103M185 100Q186 100 188 99M181 97Q183 96 185 95M185 95Q186 95 188 94M185 95Q185 94 185 93M185 95Q186 94 187 93M169 89Q174 88 177 85M177 85Q180 86 182 88M182 88Q183 90 184 92M184 92Q184 94 184 95M184 92Q185 93 186 95M182 88Q184 88 186 88M186 88Q187 90 188 91M186 88Q188 88 189 88M182 88Q182 90 181 92M181 92Q180 92 179 92M181 92Q181 93 181 94M181 92Q180 93 179 94M177 85Q178 82 179 79M179 79Q180 77 182 76M182 76Q183 75 184 74M182 76Q182 75 182 73M182 76Q183 77 185 77M179 79Q178 77 176 75M176 75Q175 74 174 72M176 75Q174 75 172 74M176 75Q175 74 173 73M179 79Q180 77 182 76M182 76Q184 76 185 76M182 76Q182 74 182 72M169 89Q173 92 177 95M177 95Q178 98 179 102M179 102Q180 104 182 106M182 106Q182 108 181 110M182 106Q183 107 185 108M182 106Q181 107 181 109M179 102Q181 102 183 104M183 104Q184 105 185 106M183 104Q184 103 186 103M179 102Q180 104 180 106M180 106Q179 108 178 109M180 106Q181 107 182 109M180 106Q180 108 179 109M177 95Q180 96 182 97M182 97Q184 98 186 99M186 99Q186 101 188 102M186 99Q187 100 188 100M182 97Q185 97 187 96M187 96Q188 96 190 96M187 96Q188 94 189 93M165 81Q169 82 173 83M173 83Q174 86 174 89M174 89Q174 91 173 93M173 93Q172 93 170 94M173 93Q173 94 173 95M174 89Q175 91 177 92M177 92Q177 94 178 95M177 92Q178 93 179 93M177 92Q177 94 177 95M173 83Q176 83 179 83M179 83Q181 84 183 86M183 86Q183 87 185 88M183 86Q184 85 186 85M183 86Q184 87 185 87M179 83Q181 82 183 82M183 82Q185 83 186 84M183 82Q184 81 185 80M173 83Q175 86 177 89M177 89Q177 91 176 93M176 93Q176 95 175 96M176 93Q176 95 176 97M177 89Q178 90 180 91M180 91Q181 92 182 93M180 91Q181 91 183 91M165 81Q166 77 166 73M166 73Q168 71 170 68M170 68Q171 67 172 65M172 65Q173 64 174 64M172 65Q172 64 172 62M172 65Q173 64 174 64M170 68Q170 66 170 64M170 64Q170 63 171 62M170 64Q170 63 170 62M170 64Q171 63 172 63M166 73Q166 71 165 69M165 69Q167 67 168 66M168 66Q169 65 170 64M168 66Q168 65 168 63M165 69Q164 67 164 65M164 65Q164 64 165 63M164 65Q163 64 162 63M165 69Q166 68 167 66M167 66Q168 65 169 64M167 66Q166 65 166 65M162 71Q165 72 168 74M168 74Q170 76 173 78M173 78Q173 80 173 82M173 82Q172 83 172 84M173 82Q174 83 174 84M173 82Q173 83 173 84M173 78Q175 77 177 77M177 77Q178 77 180 77M177 77Q178 75 178 73M177 77Q178 76 180 76M173 78Q174 79 176 80M176 80Q177 81 178 83M176 80Q177 80 179 80M168 74Q170 75 173 76M173 76Q175 76 176 77M176 77Q177 78 177 79M176 77Q178 76 179 76M173 76Q175 75 176 74M176 74Q178 74 179 74M176 74Q176 72 176 71M162 71Q165 68 168 65M168 65Q171 65 174 65M174 65Q176 66 178 66M178 66Q179 67 180 68M178 66Q179 66 180 66M174 65Q175 63 176 61M176 61Q178 61 179 60M176 61Q176 60 176 58M168 65Q168 63 168 60M168 60Q169 59 169 57M169 57Q170 56 171 55M169 57Q169 55 168 54M168 60Q168 59 169 57M169 57Q169 56 170 55M169 57Q168 55 167 54M169 57Q169 55 169 54M168 65Q170 64 172 61M172 61Q174 60 176 58M176 58Q178 58 179 58M176 58Q176 57 177 55M172 61Q172 59 173 57M173 57Q174 56 175 55M173 57Q171 55 170 54M156 67Q159 64 162 62M162 62Q164 60 165 59M165 59Q167 58 168 57M168 57Q169 56 170 55M168 57Q169 56 170 55M165 59Q165 57 164 55M164 55Q165 54 165 53M164 55Q164 54 163 53M165 59Q167 58 169 57M169 57Q170 58 170 59M169 57Q169 56 170 55M162 62Q162 59 162 56M162 56Q163 54 164 52M164 52Q165 52 166 51M164 52Q163 51 163 50M164 52Q165 52 166 51M162 56Q162 54 161 53M161 53Q162 51 161 50M161 53Q161 51 161 50M161 53Q162 51 163 50M156 67Q156 63 156 60M156 60Q158 57 159 55M159 55Q160 54 161 53M161 53Q162 52 163 51M161 53Q162 51 162 50M159 55Q159 53 159 51M159 51Q160 50 160 49M159 51Q159 50 158 49M156 60Q155 58 155 55M155 55Q155 54 156 52M156 52Q156 51 157 50M156 52Q155 51 155 50M155 55Q154 54 153 53M153 53Q154 52 154 51M153 53Q152 53 151 52M54 30Q55 35 55 39M55 39Q54 42 53 45M53 45Q52 46 51 48M51 48Q51 50 51 51M51 51Q51 52 51 53M51 51Q51 52 51 53M51 51Q50 52 49 52M51 48Q51 50 52 51M52 51Q51 52 51 52M52 51Q52 52 53 53M51 48Q50 49 49 50M49 50Q48 50 47 50M49 50Q48 52 48 53M53 45Q54 47 54 49M54 49Q52 50 51 52M51 52Q50 52 49 52M51 52Q51 53 50 54M54 49Q54 50 55 52M55 52Q55 53 55 53M55 52Q56 52 57 52M55 39Q55 42 56 46M56 46Q56 49 57 51M57 51Q56 52 55 53M55 53Q53 54 52 54M55 53Q54 54 54 55M57 51Q58 52 60 53M60 53Q61 53 61 54M60 53Q61 52 63 52M56 46Q56 48 56 50M56 50Q55 51 54 51M54 51Q53 52 52 52M54 51Q53 52 52 52M56 50Q57 52 57 53M57 53Q57 54 57 55M57 53Q57 54 58 55M57 53Q56 54 56 55M56 50Q56 51 55 53M55 53Q55 54 54 54M55 53Q55 54 55 55M54 30Q59 29 63 29M63 29Q66 31 69 32M69 32Q70 34 71 35M71 35Q71 37 71 38M71 38Q71 39 70 40M71 38Q72 39 73 40M71 38Q71 40 71 41M71 35Q72 36 73 37M73 37Q73 38 73 39M73 37Q74 37 75 37M69 32Q71 32 73 32M73 32Q75 32 76 33M76 33Q77 33 78 34M76 33Q77 32 78 32M73 32Q75 31 76 30M76 30Q78 30 79 29M76 30Q77 29 77 28M76 30Q78 31 79 32M63 29Q66 28 69 26M69 26Q72 26 74 26M74 26Q75 28 76 30M76 30Q76 31 77 32M76 30Q78 30 79 31M74 26Q75 26 77 26M77 26Q78 26 79 27M77 26Q77 25 78 24M77 26Q78 26 79 27M74 26Q76 27 77 27M77 27Q78 28 79 29M77 27Q79 27 80 26M69 26Q70 23 69 20M69 20Q69 19 70 17M70 17Q71 16 71 15M70 17Q70 15 71 14M69 20Q68 20 66 19M66 19Q65 18 64 17M66 19Q65 19 64 19M66 19Q65 18 64 17M69 26Q71 25 73 24M73 24Q75 25 76 26M76 26Q76 27 77 28M76 26Q77 26 78 27M73 24Q74 24 76 23M76 23Q77 23 78 23M76 23Q76 22 76 21M54 30Q56 35 56 40M56 40Q56 44 56 48M56 48Q54 50 53 53M53 53Q51 54 49 55M49 55Q47 55 45 56M49 55Q47 56 46 56M53 53Q54 55 54 57M54 57Q54 58 53 60M54 57Q54 58 55 59M54 57Q54 59 53 60M56 48Q58 49 59 51M59 51Q60 52 60 54M60 54Q60 55 60 56M60 54Q62 54 63 54M59 51Q60 52 62 53M62 53Q63 53 64 54M62 53Q63 53 64 52M56 40Q59 42 62 45M62 45Q63 47 64 50M64 50Q63 52 62 54M62 54Q61 55 60 56M62 54Q62 55 62 56M64 50Q65 51 66 53M66 53Q66 54 66 55M66 53Q67 53 69 53M62 45Q64 45 66 46M66 46Q68 47 69 48M69 48Q70 49 70 51M69 48Q70 49 71 50M66 46Q68 46 70 46M70 46Q71 46 72 46M70 46Q70 45 71 44M70 46Q71 46 72 46M56 40Q56 44 56 47M56 47Q54 49 52 51M52 51Q50 51 49 52M49 52Q47 52 46 52M49 52Q48 53 47 53M52 51Q52 52 52 54M52 54Q51 55 51 56M52 54Q53 55 54 56M56 47Q57 50 58 52M58 52Q58 54 58 56M58 56Q57 57 56 58M58 56Q58 57 58 58M58 52Q60 53 62 54M62 54Q62 55 63 56M62 54Q63 54 65 54M62 54Q63 55 64 55M58 15Q63 16 67 17M67 17Q70 18 73 19M73 19Q75 20 76 21M76 21Q77 22 79 23M79 23Q79 24 80 24M79 23Q80 23 81 23M76 21Q78 21 79 21M79 21Q80 21 81 21M79 21Q80 20 80 20M73 19Q75 18 77 17M77 17Q79 17 80 18M80 18Q81 18 82 19M80 18Q82 18 82 17M77 17Q77 15 77 14M77 14Q78 13 78 12M77 14Q76 13 75 13M67 17Q71 16 74 16M74 16Q76 17 78 18M78 18Q79 19 80 20M80 20Q80 21 80 23M80 20Q81 21 82 21M78 18Q80 17 81 17M81 17Q82 17 83 17M81 17Q81 16 82 15M74 16Q75 15 76 13M76 13Q78 13 80 13M80 13Q81 13 82 13M80 13Q81 12 82 12M80 13Q81 13 81 14M76 13Q77 12 78 10M78 10Q80 10 81 10M78 10Q79 9 79 8M76 13Q78 13 79 13M79 13Q80 13 81 14M79 13Q80 12 81 12M58 15Q61 10 63 5M63 5Q66 2 69 0M69 0Q72 -1 75 -2M75 -2Q77 -3 80 -3M80 -3Q82 -2 84 -2M80 -3Q81 -4 83 -5M75 -2Q77 -3 79 -4M79 -4Q80 -5 82 -6M79 -4Q79 -6 79 -7M79 -4Q80 -5 82 -5M75 -2Q77 -2 79 -2M79 -2Q80 -2 82 -2M79 -2Q80 -4 81 -5M69 0Q70 -2 71 -5M71 -5Q73 -6 74 -7M74 -7Q75 -8 76 -7M74 -7Q74 -9 74 -10M71 -5Q71 -7 71 -9M71 -9Q70 -10 70 -12M71 -9Q70 -10 69 -10M63 5Q60 2 58 -0M58 -0Q56 -2 55 -4M55 -4Q55 -6 54 -8M54 -8Q54 -9 55 -10M54 -8Q52 -8 51 -9M55 -4Q53 -5 52 -6M52 -6Q51 -6 50 -7M52 -6Q51 -6 50 -7M58 -0Q55 -1 53 -2M53 -2Q51 -3 50 -5M50 -5Q51 -7 51 -8M50 -5Q49 -6 49 -7M53 -2Q51 -1 49 -1M49 -1Q48 -1 47 -2M49 -1Q48 -0 47 1M49 -1Q48 -2 47 -2M66 20Q70 24 74 27M74 27Q77 30 79 33M79 33Q80 35 82 37M82 37Q82 38 83 40M83 40Q83 40 84 41M83 40Q84 41 85 41M83 40Q83 41 83 42M82 37Q83 38 84 39M84 39Q85 40 86 41M84 39Q85 39 86 39M79 33Q82 34 84 34M84 34Q86 35 87 35M87 35Q89 35 90 35M87 35Q88 34 90 33M87 35Q89 35 90 36M84 34Q86 34 87 34M87 34Q88 34 89 35M87 34Q88 33 88 32M87 34Q89 34 90 33M74 27Q78 28 81 28M81 28Q84 29 86 31M86 31Q86 33 86 35M86 35Q87 36 87 37M86 35Q87 36 88 37M86 31Q88 32 90 32M90 32Q91 33 92 34M90 32Q91 32 92 31M81 28Q83 27 85 26M85 26Q87 26 88 27M88 27Q89 27 90 28M88 27Q89 27 90 26M85 26Q86 24 86 23M86 23Q87 22 88 21M86 23Q86 21 86 20M85 26Q87 25 88 24M88 24Q89 24 91 23M88 24Q88 23 88 22M88 24Q90 24 91 24M74 27Q76 31 77 34M77 34Q76 37 75 39M75 39Q74 41 73 43M73 43Q71 43 70 43M73 43Q72 44 71 45M75 39Q75 41 74 42M74 42Q73 43 72 44M74 42Q74 44 75 45M77 34Q78 36 80 38M80 38Q80 40 80 42M80 42Q80 44 79 46M80 42Q80 44 80 45M80 38Q82 38 84 37M84 37Q85 37 86 38M84 37Q84 36 85 35M84 37Q85 38 86 38M66 20Q71 21 77 20M77 20Q81 22 84 24M84 24Q84 27 85 31M85 31Q84 33 84 36M84 36Q84 37 83 38M84 36Q86 37 88 37M85 31Q86 33 87 34M87 34Q87 36 87 37M87 34Q88 35 89 36M85 31Q84 33 84 36M84 36Q83 38 82 40M84 36Q86 37 87 39M84 24Q86 25 89 26M89 26Q91 27 92 28M92 28Q92 29 92 30M92 28Q93 29 94 29M89 26Q90 25 92 23M92 23Q93 23 94 23M92 23Q92 22 93 21M92 23Q93 23 94 23M89 26Q90 27 91 29M91 29Q91 30 91 31M91 29Q92 29 93 30M84 24Q85 26 86 29M86 29Q87 31 88 32M88 32Q88 34 88 35M88 32Q89 33 90 34M86 29Q88 29 89 29M89 29Q90 30 91 30M89 29Q91 29 92 30M77 20Q82 19 86 19M86 19Q89 20 92 20M92 20Q93 21 95 22M95 22Q95 23 96 24M95 22Q96 22 97 22M95 22Q95 23 97 24M92 20Q94 20 95 19M95 19Q97 19 98 19M95 19Q96 18 97 18M92 20Q94 21 95 22M95 22Q96 23 96 24M95 22Q97 22 98 22M95 22Q96 23 97 24M86 19Q90 18 93 18M93 18Q95 19 97 21M97 21Q98 22 99 23M97 21Q99 21 100 21M93 18Q95 17 97 15M97 15Q98 15 100 14M97 15Q97 14 98 13M58 2Q63 0 67 -3M67 -3Q70 -4 72 -6M72 -6Q75 -7 78 -6M78 -6Q79 -5 81 -5M81 -5Q82 -4 83 -3M81 -5Q82 -4 83 -3M78 -6Q80 -8 81 -9M81 -9Q82 -9 84 -10M81 -9Q82 -10 82 -12M72 -6Q72 -9 71 -11M71 -11Q72 -13 72 -14M72 -14Q73 -14 74 -15M72 -14Q72 -15 71 -16M72 -14Q73 -15 73 -16M71 -11Q70 -12 69 -13M69 -13Q69 -15 69 -16M69 -13Q68 -14 67 -14M72 -6Q75 -6 78 -5M78 -5Q79 -4 80 -2M80 -2Q80 -1 80 1M80 -2Q81 -1 82 0M78 -5Q79 -5 81 -6M81 -6Q82 -6 84 -5M81 -6Q82 -7 84 -7M81 -6Q83 -7 84 -7M78 -5Q79 -4 81 -2M81 -2Q81 -1 81 0M81 -2Q82 -1 82 -0M81 -2Q81 -1 81 0M67 -3Q68 -5 70 -8M70 -8Q72 -8 74 -10M74 -10Q75 -10 76 -11M76 -11Q77 -11 78 -11M76 -11Q76 -11 76 -12M74 -10Q74 -11 73 -12M73 -12Q73 -13 73 -15M73 -12Q72 -13 71 -13M70 -8Q70 -10 70 -12M70 -12Q71 -13 71 -14M71 -14Q72 -15 72 -16M71 -14Q71 -15 71 -16M71 -14Q71 -15 72 -16M70 -12Q70 -13 69 -14M69 -14Q69 -15 70 -16M69 -14Q69 -15 68 -16M67 -3Q70 -3 74 -2M74 -2Q76 -0 78 1M78 1Q80 3 80 5M80 5Q81 6 80 8M80 5Q81 5 83 6M78 1Q80 2 82 1M82 1Q84 2 85 3M82 1Q83 0 85 -0M78 1Q79 3 79 4M79 4Q79 6 79 7M79 4Q80 5 81 6M74 -2Q77 -3 80 -4M80 -4Q82 -3 83 -2M83 -2Q84 -1 85 1M83 -2Q85 -2 86 -2M80 -4Q82 -5 83 -7M83 -7Q84 -6 85 -6M83 -7Q83 -8 83 -9M83 -7Q84 -7 85 -8M80 -4Q82 -4 85 -4M85 -4Q86 -3 87 -2M85 -4Q85 -6 86 -7M58 2Q56 -3 54 -8M54 -8Q54 -12 54 -16M54 -16Q55 -18 57 -20M57 -20Q59 -21 61 -21M61 -21Q62 -20 63 -19M61 -21Q62 -22 64 -22M57 -20Q58 -22 59 -25M59 -25Q60 -26 61 -27M59 -25Q58 -26 57 -27M57 -20Q59 -21 61 -21M61 -21Q62 -21 63 -20M61 -21Q62 -22 63 -23M54 -16Q53 -18 51 -20M51 -20Q51 -21 51 -23M51 -23Q51 -24 51 -25M51 -23Q51 -23 51 -24M51 -23Q52 -23 52 -24M51 -20Q49 -20 48 -20M48 -20Q47 -21 46 -22M48 -20Q46 -20 45 -19M48 -20Q47 -21 46 -22M51 -20Q51 -21 50 -22M50 -22Q50 -23 51 -24M50 -22Q49 -23 48 -23M50 -22Q50 -23 50 -25M54 -16Q55 -18 57 -21M57 -21Q59 -21 61 -22M61 -22Q62 -22 64 -22M61 -22Q62 -23 63 -24M57 -21Q58 -23 58 -25M58 -25Q58 -26 59 -27M58 -25Q57 -27 57 -28M57 -21Q58 -22 60 -24M60 -24Q61 -25 63 -25M60 -24Q60 -26 60 -28M54 -8Q52 -11 49 -14M49 -14Q49 -17 48 -20M48 -20Q50 -21 51 -22M51 -22Q53 -23 54 -24M51 -22Q52 -23 54 -24M48 -20Q48 -22 47 -23M47 -23Q47 -24 47 -26M47 -23Q45 -23 44 -23M49 -14Q47 -16 45 -17M45 -17Q43 -19 43 -21M43 -21Q43 -23 44 -24M43 -21Q41 -21 39 -22M43 -21Q42 -22 42 -24M45 -17Q43 -17 41 -17M41 -17Q41 -18 40 -19M41 -17Q40 -17 39 -17M45 -17Q44 -19 43 -21M43 -21Q44 -22 44 -23M43 -21Q43 -21 42 -22M43 -21Q44 -22 44 -23M116 15Q121 17 125 20M125 20Q125 24 125 28M125 28Q124 30 122 33M122 33Q120 33 118 33M118 33Q116 33 114 33M118 33Q116 34 115 35M122 33Q121 35 120 37M120 37Q118 38 117 39M120 37Q120 38 119 40M125 28Q126 31 128 33M128 33Q128 36 127 38M127 38Q127 39 126 40M127 38Q128 39 128 41M127 38Q127 39 126 40M128 33Q129 35 131 36M131 36Q131 38 131 39M131 36Q132 36 133 35M125 28Q124 30 122 33M122 33Q120 33 118 34M118 34Q116 34 115 34M118 34Q116 35 114 36M118 34Q116 34 115 34M122 33Q121 35 120 37M120 37Q119 38 119 39M120 37Q121 39 123 40M125 20Q128 22 130 25M130 25Q131 28 131 31M131 31Q130 32 129 34M129 34Q128 34 128 35M129 34Q129 35 128 35M129 34Q128 34 127 34M131 31Q132 32 133 33M133 33Q134 34 134 36M133 33Q134 33 135 34M131 31Q130 33 129 35M129 35Q127 35 125 36M129 35Q129 36 129 37M129 35Q127 35 126 36M130 25Q133 26 135 25M135 25Q137 26 139 26M139 26Q140 27 141 27M139 26Q140 25 140 25M135 25Q137 24 138 22M138 22Q139 22 140 21M138 22Q138 21 138 20M138 22Q139 22 140 21M116 15Q120 12 124 10M124 10Q128 10 132 9M132 9Q135 9 137 8M137 8Q139 8 141 8M141 8Q142 8 143 9M141 8Q142 8 144 7M141 8Q142 8 143 8M137 8Q138 7 139 6M139 6Q140 6 141 5M139 6Q140 5 141 4M139 6Q140 6 141 7M137 8Q139 8 141 9M141 9Q142 9 143 10M141 9Q142 8 143 8M132 9Q134 7 136 5M136 5Q137 4 139 4M139 4Q140 4 142 4M139 4Q139 2 140 1M139 4Q140 4 141 4M136 5Q136 3 137 1M137 1Q138 0 139 -1M137 1Q137 0 137 -1M124 10Q127 9 130 7M130 7Q132 6 135 6M135 6Q136 7 138 7M138 7Q139 7 140 8M138 7Q139 6 139 6M138 7Q139 7 140 8M135 6Q136 6 137 5M137 5Q138 5 139 5M137 5Q138 4 138 3M130 7Q133 6 134 4M134 4Q136 3 138 3M138 3Q139 3 140 2M138 3Q139 2 140 2M138 3Q139 3 140 3M134 4Q135 2 136 0M136 0Q136 -1 137 -2M136 0Q136 -1 136 -3M113 4Q118 5 124 6M124 6Q127 8 130 10M130 10Q131 12 132 14M132 14Q131 16 131 17M131 17Q130 17 129 18M131 17Q131 18 131 19M132 14Q133 15 134 17M134 17Q135 18 135 19M134 17Q135 17 136 18M134 17Q134 18 133 19M132 14Q132 16 131 17M131 17Q131 19 130 19M131 17Q131 19 131 20M130 10Q133 9 134 7M134 7Q136 6 137 6M137 6Q138 6 140 6M137 6Q138 5 138 4M134 7Q135 5 135 4M135 4Q136 2 136 1M135 4Q134 2 133 2M134 7Q136 6 138 6M138 6Q139 6 140 6M138 6Q138 5 139 5M138 6Q139 6 140 6M130 10Q132 12 134 14M134 14Q135 15 136 17M136 17Q136 18 135 19M136 17Q137 18 138 19M134 14Q135 15 136 17M136 17Q135 18 135 19M136 17Q137 17 137 18M136 17Q136 18 136 19M134 14Q134 16 133 17M133 17Q133 19 133 20M133 17Q134 19 134 20M124 6Q128 5 131 3M131 3Q134 2 137 0M137 0Q139 -1 142 -2M142 -2Q143 -1 145 -1M142 -2Q143 -2 145 -2M137 0Q138 -2 139 -4M139 -4Q141 -5 143 -5M139 -4Q139 -6 139 -7M131 3Q132 -0 132 -3M132 -3Q134 -5 135 -7M135 -7Q137 -7 139 -7M135 -7Q136 -8 136 -10M132 -3Q132 -5 131 -7M131 -7Q132 -8 132 -10M131 -7Q130 -8 129 -9M124 6Q127 9 131 11M131 11Q131 14 132 17M132 17Q132 19 132 21M132 21Q132 23 132 25M132 21Q132 23 132 24M132 21Q132 23 131 24M132 17Q133 19 134 21M134 21Q134 23 133 25M134 21Q136 22 137 23M134 21Q134 23 134 24M131 11Q134 12 136 12M136 12Q138 13 138 15M138 15Q138 17 137 18M138 15Q139 16 141 17M136 12Q138 11 139 10M139 10Q141 10 142 10M139 10Q140 9 141 8M139 10Q140 9 142 9M131 11Q133 13 134 16M134 16Q135 18 135 21M135 21Q135 23 135 24M135 21Q136 22 136 24M134 16Q137 17 139 18M139 18Q139 19 139 21M139 18Q140 17 142 17M113 4Q117 -1 120 -5M120 -5Q124 -6 128 -7M128 -7Q130 -5 132 -4M132 -4Q133 -2 134 -1M134 -1Q135 -0 135 1M134 -1Q135 -1 136 -1M134 -1Q135 -1 136 0M132 -4Q134 -3 136 -3M136 -3Q137 -2 138 -1M136 -3Q137 -4 139 -4M132 -4Q133 -3 134 -1M134 -1Q135 -0 135 1M134 -1Q135 -0 136 1M134 -1Q134 -0 134 1M128 -7Q130 -8 132 -9M132 -9Q134 -8 136 -7M136 -7Q136 -6 136 -5M136 -7Q137 -7 138 -7M132 -9Q132 -10 133 -12M133 -12Q133 -13 133 -14M133 -12Q132 -13 132 -14M120 -5Q121 -9 122 -12M122 -12Q124 -14 126 -16M126 -16Q128 -17 130 -16M130 -16Q131 -15 132 -14M130 -16Q131 -17 133 -17M130 -16Q131 -16 132 -15M126 -16Q127 -18 128 -19M128 -19Q129 -19 130 -19M128 -19Q129 -20 129 -21M128 -19Q129 -19 130 -20M126 -16Q128 -16 130 -16M130 -16Q132 -15 133 -15M130 -16Q131 -16 133 -16M122 -12Q122 -14 122 -17M122 -17Q124 -18 124 -20M124 -20Q125 -21 125 -22M124 -20Q124 -21 124 -22M122 -17Q122 -18 121 -20M121 -20Q122 -21 122 -22M121 -20Q120 -21 119 -22M122 -17Q123 -18 124 -19M124 -19Q125 -19 126 -20M124 -19Q125 -20 125 -21M120 -5Q123 -8 126 -9M126 -9Q128 -9 131 -9M131 -9Q132 -8 133 -7M133 -7Q133 -6 133 -5M133 -7Q134 -7 135 -6M131 -9Q131 -10 132 -12M132 -12Q133 -12 133 -13M132 -12Q131 -13 131 -14M132 -12Q133 -13 133 -14M126 -9Q128 -10 130 -11M130 -11Q132 -11 134 -11M134 -11Q135 -10 136 -9M134 -11Q134 -12 135 -12M134 -11Q134 -10 135 -9M130 -11Q131 -12 131 -13M131 -13Q132 -14 133 -14M131 -13Q131 -14 131 -15M131 -13Q132 -14 133 -14M108 6Q111 8 115 10M115 10Q117 12 118 14M118 14Q118 16 118 18M118 18Q116 18 116 19M116 19Q115 19 114 19M116 19Q115 19 114 20M118 18Q118 19 118 20M118 20Q117 21 116 21M118 20Q118 21 118 22M118 14Q120 14 122 13M122 13Q123 14 125 14M125 14Q125 15 125 16M125 14Q126 14 127 14M122 13Q123 13 124 12M124 12Q125 11 125 10M124 12Q124 11 124 10M122 13Q123 14 124 15M124 15Q125 15 125 16M124 15Q125 15 126 16M115 10Q118 10 121 11M121 11Q122 13 124 14M124 14Q124 15 124 16M124 16Q123 17 123 18M124 16Q125 17 126 17M124 14Q125 14 127 14M127 14Q127 16 128 16M127 14Q128 14 129 14M121 11Q123 11 125 10M125 10Q126 11 128 12M128 12Q128 13 129 13M128 12Q129 11 130 11M125 10Q126 9 127 8M127 8Q128 8 129 7M127 8Q128 7 128 6M125 10Q126 11 128 12M128 12Q128 13 129 14M128 12Q129 13 129 14M121 11Q123 11 124 12M124 12Q125 13 126 14M126 14Q126 15 127 15M126 14Q127 14 128 14M124 12Q126 11 127 10M127 10Q128 10 128 10M127 10Q127 9 127 8M108 6Q111 4 114 1M114 1Q116 -1 118 -3M118 -3Q119 -4 122 -5M122 -5Q123 -4 125 -3M125 -3Q125 -2 126 -1M125 -3Q126 -3 127 -3M125 -3Q126 -2 126 -1M122 -5Q123 -6 124 -7M124 -7Q125 -7 126 -8M124 -7Q124 -8 125 -10M118 -3Q118 -5 118 -7M118 -7Q120 -7 121 -8M121 -8Q122 -7 122 -7M121 -8Q122 -8 122 -8M118 -7Q118 -8 117 -9M117 -9Q117 -10 117 -11M117 -9Q116 -10 116 -10M117 -9Q117 -10 118 -11M114 1Q114 -1 115 -4M115 -4Q116 -5 117 -6M117 -6Q118 -7 119 -7M119 -7Q120 -7 121 -7M119 -7Q120 -8 120 -9M117 -6Q117 -7 117 -9M117 -9Q117 -10 117 -10M117 -9Q116 -9 116 -10M115 -4Q115 -5 116 -7M116 -7Q117 -8 117 -9M117 -9Q118 -8 119 -8M117 -9Q117 -9 118 -10M116 -7Q116 -8 116 -9M116 -9Q115 -10 115 -11M116 -9Q116 -10 116 -11M116 -7Q117 -8 118 -8M118 -8Q119 -8 120 -8M118 -8Q118 -9 119 -10M118 -8Q119 -8 120 -8M114 1Q116 1 119 1M119 1Q120 2 122 3M122 3Q122 4 123 5M123 5Q124 5 124 6M123 5Q124 5 125 5M123 5Q123 5 124 6M122 3Q123 4 124 5M124 5Q124 6 125 7M124 5Q125 4 126 4M124 5Q124 6 124 7M119 1Q120 -0 121 -1M121 -1Q122 -0 124 0M124 0Q124 1 124 2M124 0Q124 0 125 0M121 -1Q122 -2 122 -3M122 -3Q122 -4 123 -5M122 -3Q122 -4 122 -5M108 6Q111 9 115 12M115 12Q114 15 113 18M113 18Q112 21 110 23M110 23Q109 24 107 26M107 26Q106 27 105 27M107 26Q107 27 105 29M110 23Q111 25 110 27M110 27Q109 28 108 30M110 27Q111 29 111 30M110 27Q109 28 109 30M113 18Q114 21 114 23M114 23Q114 25 114 27M114 27Q114 29 114 30M114 27Q115 28 116 29M114 27Q114 28 113 30M114 23Q116 24 118 25M118 25Q118 26 119 27M118 25Q119 25 120 25M114 23Q114 25 112 26M112 26Q111 27 110 27M112 26Q112 28 111 29M115 12Q118 13 120 13M120 13Q123 14 125 15M125 15Q126 16 127 16M127 16Q128 17 129 18M127 16Q128 17 130 16M127 16Q128 17 129 18M125 15Q127 14 129 14M129 14Q130 14 132 14M129 14Q130 13 130 12M120 13Q123 12 125 12M125 12Q127 12 128 12M128 12Q129 12 130 13M128 12Q129 12 131 12M125 12Q126 10 127 8M127 8Q128 8 130 7M127 8Q127 7 127 5M125 12Q127 12 128 12M128 12Q130 12 131 13M128 12Q129 11 131 11M120 13Q122 14 123 16M123 16Q123 17 124 18M124 18Q124 19 124 20M124 18Q124 19 124 20M123 16Q124 16 126 17M126 17Q126 18 126 18M126 17Q127 17 127 17M123 16Q124 17 124 19M124 19Q124 20 124 21M124 19Q125 19 126 20M124 19Q124 20 124 21M101 -5Q104 -8 107 -11M107 -11Q110 -12 113 -15M113 -15Q115 -16 116 -19M116 -19Q118 -19 120 -19M120 -19Q121 -18 122 -18M120 -19Q121 -20 122 -20M116 -19Q116 -20 116 -22M116 -22Q117 -23 117 -24M116 -22Q115 -22 114 -23M113 -15Q115 -16 116 -18M116 -18Q117 -19 119 -20M119 -20Q120 -20 122 -20M119 -20Q120 -21 120 -22M116 -18Q116 -20 116 -21M116 -21Q117 -22 117 -22M116 -21Q116 -22 116 -23M116 -21Q117 -22 117 -23M107 -11Q109 -14 111 -16M111 -16Q113 -17 115 -18M115 -18Q117 -18 118 -19M118 -19Q119 -19 120 -19M118 -19Q119 -20 119 -21M115 -18Q116 -19 117 -20M117 -20Q118 -20 119 -19M117 -20Q117 -21 118 -22M111 -16Q112 -19 112 -21M112 -21Q114 -22 115 -24M115 -24Q116 -24 117 -24M115 -24Q115 -25 115 -26M115 -24Q116 -24 117 -25M112 -21Q112 -23 112 -25M112 -25Q112 -26 113 -27M112 -25Q112 -26 111 -27M112 -25Q113 -26 113 -27M112 -21Q113 -23 115 -24M115 -24Q115 -24 116 -25M115 -24Q115 -25 115 -26M111 -16Q114 -16 116 -17M116 -17Q117 -16 118 -16M118 -16Q119 -16 120 -15M118 -16Q119 -17 120 -17M118 -16Q119 -16 120 -15M116 -17Q117 -18 119 -19M119 -19Q120 -18 121 -17M119 -19Q120 -19 121 -20M101 -5Q101 -10 101 -14M101 -14Q102 -16 104 -19M104 -19Q105 -20 107 -21M107 -21Q108 -21 109 -21M107 -21Q107 -22 108 -23M108 -23Q109 -23 110 -24M108 -23Q108 -24 107 -25M104 -19Q105 -21 106 -22M106 -22Q107 -23 108 -24M108 -24Q109 -24 110 -24M108 -24Q109 -25 109 -26M106 -22Q106 -24 106 -25M106 -25Q106 -26 107 -27M106 -25Q105 -25 104 -25M101 -14Q98 -16 95 -17M95 -17Q93 -18 92 -20M92 -20Q91 -21 91 -23M91 -23Q92 -24 93 -25M91 -23Q90 -24 89 -25M92 -20Q90 -20 89 -21M89 -21Q88 -22 88 -22M89 -21Q88 -21 87 -21M89 -21Q88 -21 87 -21M95 -17Q92 -17 89 -17M89 -17Q87 -17 85 -18M85 -18Q85 -19 84 -20M85 -18Q84 -17 82 -17M89 -17Q88 -16 86 -15M86 -15Q85 -16 84 -16M86 -15Q85 -14 85 -14M95 -17Q93 -18 90 -19M90 -19Q89 -20 88 -22M88 -22Q87 -23 86 -25M88 -22Q86 -22 85 -23M88 -22Q87 -23 88 -25M90 -19Q88 -19 86 -20M86 -20Q86 -21 85 -22M86 -20Q85 -20 84 -20M90 -19Q89 -21 88 -22M88 -22Q88 -24 88 -26M88 -22Q87 -23 86 -25M110 14Q113 18 117 22M117 22Q116 26 115 31M115 31Q113 33 110 35M110 35Q108 36 106 37M106 37Q104 37 103 38M106 37Q104 37 103 38M106 37Q104 36 103 36M110 35Q109 37 106 39M106 39Q105 40 103 40M106 39Q106 41 106 42M115 31Q117 33 119 36M119 36Q120 38 120 41M120 41Q119 42 119 44M120 41Q120 42 120 44M119 36Q121 37 123 38M123 38Q124 39 125 40M123 38Q124 37 126 37M117 22Q120 25 122 28M122 28Q122 31 120 34M120 34Q119 35 117 36M117 36Q116 37 115 37M117 36Q117 38 116 39M117 36Q116 37 115 38M120 34Q121 36 122 38M122 38Q122 39 121 40M122 38Q123 39 124 41M122 38Q121 39 121 40M122 28Q125 29 128 30M128 30Q129 31 131 32M131 32Q133 33 133 34M131 32Q133 31 134 31M128 30Q130 30 132 30M132 30Q134 30 136 31M132 30Q133 29 135 28M132 30Q133 31 135 31M110 14Q115 15 120 16M120 16Q123 19 126 21M126 21Q127 24 129 27M129 27Q128 29 128 32M128 32Q127 33 126 35M128 32Q128 34 127 35M129 27Q130 29 131 31M131 31Q131 33 131 35M131 31Q133 32 134 33M126 21Q129 22 131 24M131 24Q132 26 134 28M134 28Q134 29 135 30M134 28Q135 28 136 29M134 28Q133 29 133 30M131 24Q133 24 134 23M134 23Q136 23 137 24M134 23Q135 22 136 21M120 16Q123 13 125 11M125 11Q127 10 129 8M129 8Q131 9 132 9M132 9Q133 10 134 11M132 9Q133 9 134 8M129 8Q130 7 130 5M130 5Q131 4 132 3M130 5Q130 3 130 2M125 11Q125 8 124 6M124 6Q125 4 126 3M126 3Q127 2 128 2M126 3Q126 2 126 0M126 3Q127 2 127 1M124 6Q123 5 123 3M123 3Q124 2 124 1M123 3Q122 3 121 2M120 16Q123 18 126 20M126 20Q127 22 128 24M128 24Q127 26 127 28M127 28Q127 29 127 31M127 28Q128 29 128 31M128 24Q129 25 130 27M130 27Q130 28 130 29M130 27Q131 27 132 27M126 20Q128 20 130 21M130 21Q131 22 132 23M132 23Q131 24 131 25M132 23Q133 24 134 24M130 21Q131 20 132 20M132 20Q133 20 134 20M132 20Q133 19 134 19M130 21Q131 21 132 22M132 22Q133 22 134 23M132 22Q133 21 134 21M132 22Q133 23 133 23M110 14Q113 18 117 20M117 20Q120 24 122 27M122 27Q123 29 123 32M123 32Q122 34 121 35M121 35Q119 36 118 37M121 35Q120 36 120 38M123 32Q124 33 126 34M126 34Q127 35 128 36M126 34Q127 33 128 32M126 34Q128 35 129 35M122 27Q125 27 128 27M128 27Q130 29 131 30M131 30Q130 32 130 33M131 30Q132 31 133 32M128 27Q130 26 131 25M131 25Q133 25 134 24M131 25Q131 24 132 22M128 27Q129 28 130 30M130 30Q130 31 130 32M130 30Q132 31 133 31M122 27Q122 30 123 33M123 33Q124 35 125 38M125 38Q124 39 122 41M125 38Q125 39 127 41M123 33Q125 34 127 35M127 35Q128 36 128 37M127 35Q128 35 130 35M127 35Q128 36 129 36M117 20Q121 22 126 22M126 22Q128 23 131 25M131 25Q131 27 132 29M132 29Q131 31 130 32M132 29Q133 30 134 31M132 29Q132 31 132 32M131 25Q133 26 136 27M136 27Q136 29 136 31M136 27Q137 27 139 26M126 22Q128 21 131 20M131 20Q133 20 135 21M135 21Q136 22 137 24M135 21Q136 20 137 20M131 20Q132 18 132 17M132 17Q133 15 134 14M132 17Q133 16 133 14M136 40Q140 40 144 42M144 42Q145 44 147 46M147 46Q147 48 147 49M147 49Q147 51 146 51M146 51Q146 52 146 53M146 51Q145 52 145 52M147 49Q148 51 148 52M148 52Q149 53 148 54M148 52Q149 52 150 52M148 52Q149 53 149 54M147 46Q149 46 151 46M151 46Q152 47 153 48M153 48Q154 50 154 51M153 48Q154 49 155 49M153 48Q154 49 155 50M151 46Q152 45 154 45M154 45Q155 45 155 45M154 45Q154 44 155 43M144 42Q146 42 149 42M149 42Q150 44 152 44M152 44Q152 46 152 47M152 47Q151 48 151 49M152 47Q153 48 154 49M152 44Q153 44 154 44M154 44Q155 44 156 45M154 44Q155 43 156 43M154 44Q155 44 156 44M152 44Q153 46 154 47M154 47Q154 47 155 48M154 47Q154 47 155 47M149 42Q151 42 153 42M153 42Q154 43 155 43M155 43Q155 43 156 44M155 43Q156 43 156 42M153 42Q153 41 154 40M154 40Q155 39 156 39M154 40Q154 39 153 38M154 40Q154 39 155 38M136 40Q138 37 142 34M142 34Q145 32 149 32M149 32Q151 33 154 34M154 34Q155 35 157 36M157 36Q157 38 157 39M157 36Q158 37 159 37M157 36Q157 38 157 39M154 34Q155 33 157 32M157 32Q158 33 159 33M157 32Q158 32 160 31M157 32Q159 33 160 33M154 34Q155 36 155 38M155 38Q155 39 154 41M155 38Q156 39 157 40M149 32Q150 30 152 29M152 29Q153 27 154 26M154 26Q155 26 156 25M154 26Q155 25 155 23M154 26Q156 26 157 27M152 29Q151 27 151 25M151 25Q151 23 151 22M151 25Q151 24 150 23M152 29Q153 28 155 28M155 28Q155 28 156 29M155 28Q155 27 156 27M155 28Q155 28 156 28M142 34Q144 31 145 28M145 28Q146 26 148 24M148 24Q149 23 151 23M151 23Q151 23 152 23M151 23Q151 22 151 21M151 23Q151 23 152 23M148 24Q148 23 149 22M149 22Q149 21 150 20M149 22Q148 21 148 20M149 22Q150 21 150 20M145 28Q143 25 142 23M142 23Q142 21 143 19M143 19Q144 18 146 17M143 19Q143 17 144 16M142 23Q140 22 138 21M138 21Q137 20 137 19M138 21Q137 21 136 22M142 34Q145 33 149 32M149 32Q151 32 153 32M153 32Q154 32 155 33M155 33Q156 34 156 35M155 33Q156 33 157 32M155 33Q155 34 155 35M153 32Q154 31 155 30M155 30Q156 30 157 31M155 30Q156 29 156 28M155 30Q156 30 157 31M153 32Q154 32 155 33M155 33Q156 33 156 34M155 33Q156 32 157 32M149 32Q150 31 152 29M152 29Q154 29 155 30M155 30Q156 31 157 31M155 30Q156 29 157 28M155 30Q157 30 158 31M152 29Q153 28 154 27M154 27Q155 26 156 25M154 27Q154 26 154 24M129 32Q133 31 137 30M137 30Q140 31 143 30M143 30Q145 31 147 32M147 32Q148 33 149 33M149 33Q149 34 149 35M149 33Q150 34 151 34M147 32Q148 31 150 31M150 31Q151 31 152 31M150 31Q151 31 151 30M147 32Q147 33 148 34M148 34Q148 35 148 36M148 34Q149 35 149 36M143 30Q145 29 147 28M147 28Q148 27 150 27M150 27Q151 27 152 27M150 27Q150 26 150 25M147 28Q147 26 148 25M148 25Q149 25 150 25M148 25Q148 24 148 23M147 28Q148 27 149 27M149 27Q150 27 151 27M149 27Q150 26 151 26M143 30Q145 31 147 32M147 32Q148 33 149 34M149 34Q149 34 149 35M149 34Q150 34 151 34M147 32Q149 31 150 32M150 32Q151 32 152 32M150 32Q151 31 152 31M147 32Q147 33 148 34M148 34Q148 35 148 36M148 34Q148 35 148 36M148 34Q148 35 148 36M137 30Q140 28 142 26M142 26Q144 25 147 24M147 24Q148 25 150 26M150 26Q151 27 152 28M150 26Q151 26 153 25M147 24Q148 24 150 24M150 24Q151 24 152 24M150 24Q151 23 152 23M142 26Q142 23 141 21M141 21Q142 19 143 18M143 18Q144 17 144 16M143 18Q143 16 143 16M143 18Q143 17 145 16M141 21Q139 20 137 19M137 19Q136 18 135 17M137 19Q136 20 135 21M137 19Q137 18 136 17M142 26Q144 24 145 23M145 23Q146 22 148 22M148 22Q149 22 150 23M148 22Q149 22 150 21M145 23Q145 21 146 20M146 20Q147 19 148 18M146 20Q146 19 146 18M137 30Q141 30 144 32M144 32Q146 33 148 35M148 35Q147 37 147 40M147 40Q145 40 144 41M147 40Q146 41 146 42M148 35Q149 35 151 36M151 36Q152 36 153 37M151 36Q152 35 153 34M144 32Q146 31 148 30M148 30Q150 30 152 29M152 29Q153 29 154 29M152 29Q152 28 153 27M152 29Q153 29 154 29M148 30Q149 28 151 27M151 27Q152 27 153 28M151 27Q151 26 152 26M151 27Q152 27 153 27M144 32Q144 34 145 36M145 36Q146 38 147 39M147 39Q147 40 147 42M147 39Q148 40 149 41M145 36Q147 37 148 38M148 38Q149 39 150 40M148 38Q150 38 151 38M145 36Q146 38 147 39M147 39Q147 40 147 41M147 39Q148 40 149 40M129 32Q130 28 131 25M131 25Q132 22 132 20M132 20Q134 18 135 17M135 17Q136 16 137 16M137 16Q138 16 139 15M137 16Q137 15 138 14M137 16Q138 16 139 15M135 17Q135 16 135 14M135 14Q136 14 137 14M135 14Q135 13 135 13M132 20Q132 18 130 16M130 16Q130 14 130 13M130 13Q131 12 132 11M130 13Q130 12 129 11M130 16Q129 16 127 15M127 15Q127 15 126 14M127 15Q126 15 125 15M131 25Q131 22 132 20M132 20Q133 19 135 18M135 18Q136 18 137 18M137 18Q138 18 139 19M137 18Q138 18 139 17M135 18Q135 17 136 16M136 16Q136 16 137 16M136 16Q136 15 135 14M132 20Q131 18 130 16M130 16Q130 15 130 13M130 13Q130 13 130 12M130 13Q130 13 129 12M130 13Q131 12 132 12M130 16Q130 15 129 14M129 14Q130 13 130 12M129 14Q129 13 128 12M132 20Q133 18 134 17M134 17Q135 17 136 17M136 17Q137 18 137 18M136 17Q137 17 138 17M134 17Q134 16 134 15M134 15Q135 15 136 14M134 15Q134 14 134 13M134 15Q135 14 136 14M131 25Q133 23 133 20M133 20Q134 19 135 18M135 18Q136 18 137 17M137 17Q138 17 139 18M137 17Q137 16 138 16M135 18Q135 17 135 16M135 16Q135 15 136 14M135 16Q134 16 133 15M135 18Q137 18 138 18M138 18Q138 18 139 18M133 20Q133 19 133 17M133 17Q133 16 134 15M134 15Q135 14 136 13M134 15Q134 14 134 13M134 15Q135 14 135 13M133 17Q132 16 131 15M131 15Q130 14 130 14M131 15Q130 15 129 14M133 20Q134 19 135 18M135 18Q136 17 138 17M138 17Q139 17 140 16M138 17Q138 16 139 16M135 18Q135 16 135 15M135 15Q135 14 135 13M135 15Q134 14 134 13M135 18Q136 17 136 15M136 15Q137 15 138 15M136 15Q136 15 136 14M131 27Q135 29 139 30M139 30Q141 32 144 33M144 33Q145 35 146 36M146 36Q146 38 145 39M145 39Q145 40 144 41M145 39Q146 40 147 41M146 36Q147 37 148 38M148 38Q148 39 149 40M148 38Q149 39 149 40M144 33Q146 33 148 33M148 33Q149 34 150 36M150 36Q150 37 150 38M150 36Q151 37 151 37M148 33Q150 33 151 33M151 33Q151 34 152 34M151 33Q152 32 153 32M139 30Q142 30 144 30M144 30Q146 30 148 30M148 30Q149 31 150 32M150 32Q150 33 151 33M150 32Q151 32 151 33M148 30Q149 30 150 29M150 29Q151 29 152 29M150 29Q151 29 151 28M148 30Q149 31 150 31M144 30Q146 29 148 28M148 28Q150 28 152 29M152 29Q152 30 152 32M152 29Q153 29 154 29M148 28Q149 26 149 25M149 25Q149 24 149 23M149 25Q148 24 148 23M144 30Q146 31 147 32M147 32Q148 33 148 35M148 35Q148 36 148 37M148 35Q148 36 148 37M147 32Q149 33 150 33M150 33Q151 34 151 34M150 33Q151 32 152 32M131 27Q136 24 139 21M139 21Q143 21 147 20M147 20Q150 20 153 21M153 21Q155 21 156 21M156 21Q158 22 159 24M156 21Q157 20 158 19M156 21Q157 23 158 24M153 21Q154 19 156 18M156 18Q157 18 158 17M156 18Q157 17 158 17M147 20Q149 18 151 17M151 17Q153 17 155 17M155 17Q156 17 157 17M155 17Q156 16 158 16M155 17Q156 17 157 17M151 17Q153 16 154 14M154 14Q155 14 157 14M154 14Q153 13 152 11M154 14Q155 13 155 12M139 21Q140 17 142 13M142 13Q144 12 147 11M147 11Q148 12 150 13M150 13Q150 14 150 15M150 13Q151 12 153 12M147 11Q148 9 150 8M150 8Q151 8 153 7M150 8Q151 6 152 6M147 11Q148 12 150 12M150 12Q151 13 152 15M150 12Q152 12 153 11M142 13Q142 11 143 9M143 9Q144 7 145 6M145 6Q146 5 148 5M145 6Q146 4 146 3M145 6Q146 5 147 5M143 9Q142 7 141 6M141 6Q141 5 141 4M141 6Q141 5 140 4M141 6Q141 5 141 4M142 13Q143 12 145 10M145 10Q147 9 148 8M148 8Q149 7 150 7M148 8Q148 7 148 5M148 8Q149 8 151 8M145 10Q145 8 145 7M145 7Q146 6 146 5M145 7Q145 6 145 5M145 10Q147 9 148 7M148 7Q149 7 151 8M148 7Q148 6 148 5M148 7Q149 7 151 7M115 14Q114 9 114 4M114 4Q116 1 118 -2M118 -2Q121 -3 123 -5M123 -5Q125 -5 127 -5M127 -5Q128 -5 129 -5M127 -5Q128 -6 129 -6M127 -5Q128 -5 130 -5M123 -5Q123 -7 123 -9M123 -9Q123 -10 124 -11M123 -9Q122 -9 121 -10M123 -5Q125 -5 126 -4M126 -4Q127 -3 128 -2M126 -4Q128 -5 129 -6M118 -2Q118 -5 117 -7M117 -7Q118 -9 117 -11M117 -11Q117 -12 117 -14M117 -11Q117 -12 116 -13M117 -11Q118 -12 118 -13M117 -7Q116 -8 115 -10M115 -10Q114 -11 113 -12M115 -10Q113 -10 112 -11M117 -7Q117 -9 116 -11M116 -11Q117 -12 117 -13M116 -11Q115 -11 114 -12M114 4Q111 1 108 -2M108 -2Q106 -5 106 -8M106 -8Q105 -11 105 -13M105 -13Q105 -15 106 -17M105 -13Q103 -14 102 -15M106 -8Q104 -9 103 -11M103 -11Q103 -13 103 -14M103 -11Q101 -11 100 -12M108 -2Q105 -1 102 1M102 1Q100 2 98 2M98 2Q96 3 95 3M98 2Q97 3 96 4M98 2Q96 2 95 1M102 1Q101 3 100 5M100 5Q98 6 97 7M100 5Q99 6 98 8M115 14Q112 11 109 7M109 7Q107 4 106 0M106 0Q107 -2 108 -5M108 -5Q110 -6 111 -7M111 -7Q112 -8 113 -8M111 -7Q111 -8 112 -10M108 -5Q108 -7 109 -8M109 -8Q110 -9 111 -10M109 -8Q108 -10 108 -11M106 0Q104 -1 102 -3M102 -3Q101 -4 100 -6M100 -6Q100 -7 100 -8M100 -6Q99 -6 98 -7M102 -3Q100 -2 99 -2M99 -2Q97 -2 96 -2M99 -2Q98 -0 97 1M102 -3Q101 -4 99 -6M99 -6Q99 -7 98 -8M99 -6Q98 -6 96 -6M99 -6Q100 -7 99 -9M109 7Q105 6 102 5M102 5Q100 3 99 1M99 1Q99 -1 98 -3M98 -3Q98 -4 99 -5M98 -3Q97 -3 96 -4M98 -3Q98 -4 99 -5M99 1Q97 1 95 0M95 0Q95 -1 94 -2M95 0Q94 1 92 1M95 0Q94 -1 93 -1M102 5Q99 5 97 6M97 6Q96 5 94 5M94 5Q94 4 93 3M94 5Q94 6 93 6M97 6Q97 7 96 9M96 9Q95 9 94 10M96 9Q97 10 98 11M72 78Q74 83 76 87M76 87Q76 91 76 95M76 95Q74 97 73 100M73 100Q71 101 69 101M69 101Q67 101 66 100M69 101Q68 103 67 104M69 101Q67 101 65 101M73 100Q73 102 74 105M74 105Q73 106 72 108M74 105Q75 106 75 108M76 95Q78 97 79 99M79 99Q78 101 78 103M78 103Q77 104 77 106M78 103Q79 104 79 106M78 103Q77 104 76 105M79 99Q81 100 83 101M83 101Q83 103 84 104M83 101Q84 102 85 103M79 99Q80 101 80 102M80 102Q79 103 78 104M80 102Q81 103 82 104M76 87Q80 88 84 88M84 88Q85 90 87 91M87 91Q88 93 88 94M88 94Q88 95 87 97M88 94Q89 95 90 97M87 91Q89 92 90 93M90 93Q91 94 91 95M90 93Q91 93 93 93M90 93Q90 94 90 95M87 91Q88 92 90 93M90 93Q90 94 89 96M90 93Q91 93 92 93M84 88Q86 88 88 87M88 87Q90 86 91 87M91 87Q92 87 93 88M91 87Q92 86 93 86M88 87Q89 85 90 84M90 84Q91 83 92 83M90 84Q90 82 91 81M88 87Q90 87 91 87M91 87Q92 88 93 89M91 87Q93 87 94 87M91 87Q92 88 93 89M84 88Q86 89 89 89M89 89Q90 90 92 90M92 90Q92 91 93 92M92 90Q93 90 94 90M89 89Q90 87 92 86M92 86Q93 86 94 86M92 86Q92 86 93 85M92 86Q93 86 94 86M89 89Q90 90 90 92M90 92Q90 93 89 94M90 92Q91 93 91 94M72 78Q75 82 78 86M78 86Q78 89 77 92M77 92Q76 94 75 95M75 95Q74 96 72 97M72 97Q71 96 70 96M72 97Q71 97 70 98M75 95Q74 97 73 98M73 98Q72 99 71 99M73 98Q73 99 73 101M73 98Q72 99 71 100M77 92Q77 94 77 95M77 95Q76 96 74 96M74 96Q74 96 73 95M74 96Q74 97 74 98M77 95Q78 97 78 98M78 98Q78 99 77 100M78 98Q79 99 80 99M78 98Q78 99 78 100M78 86Q81 86 85 85M85 85Q86 86 88 86M88 86Q90 86 91 86M91 86Q91 86 92 86M91 86Q91 86 92 87M88 86Q90 85 91 84M91 84Q92 84 93 84M91 84Q92 84 93 83M91 84Q92 85 93 85M85 85Q86 84 88 83M88 83Q89 82 90 82M90 82Q91 82 92 82M90 82Q91 82 92 81M90 82Q91 83 91 83M88 83Q88 81 89 80M89 80Q90 79 91 79M89 80Q89 78 89 77M85 85Q86 87 88 88M88 88Q89 89 90 91M90 91Q89 92 89 92M90 91Q90 91 91 91M88 88Q90 88 91 88M91 88Q93 88 94 88M91 88Q92 87 92 86M88 88Q89 89 91 90M91 90Q91 90 92 91M91 90Q92 90 93 89M78 86Q79 89 79 92M79 92Q79 94 78 96M78 96Q78 97 77 98M77 98Q76 99 75 99M77 98Q77 99 77 100M77 98Q76 99 76 100M78 96Q78 98 78 99M78 99Q76 100 75 101M78 99Q78 101 78 102M78 99Q77 100 75 100M78 96Q77 97 76 98M76 98Q75 98 74 99M76 98Q75 99 75 100M76 98Q75 98 74 98M79 92Q80 94 81 95M81 95Q81 97 81 98M81 98Q80 99 79 100M81 98Q81 100 81 101M81 95Q81 97 82 98M82 98Q82 99 82 99M82 98Q83 98 84 98M82 72Q87 77 92 83M92 83Q94 88 98 92M98 92Q98 96 98 100M98 100Q96 102 96 104M96 104Q94 105 93 107M96 104Q96 105 97 107M96 104Q95 105 94 107M98 100Q99 103 100 105M100 105Q100 108 100 110M100 105Q101 107 102 109M100 105Q100 108 100 110M98 92Q101 95 104 97M104 97Q106 99 107 102M107 102Q107 105 107 107M107 102Q108 104 109 105M104 97Q107 98 111 98M111 98Q112 100 113 101M111 98Q113 97 115 96M111 98Q111 100 112 102M92 83Q98 84 104 85M104 85Q107 89 110 92M110 92Q111 96 112 99M112 99Q112 102 113 105M112 99Q114 100 117 100M112 99Q111 101 110 103M110 92Q112 94 114 96M114 96Q115 97 115 99M114 96Q116 97 117 97M104 85Q108 84 111 81M111 81Q114 81 117 81M117 81Q119 82 120 83M117 81Q118 80 120 79M117 81Q118 82 119 83M111 81Q113 80 115 78M115 78Q117 77 118 77M115 78Q116 77 118 76M92 83Q92 89 92 94M92 94Q91 99 90 103M90 103Q88 105 86 106M86 106Q84 106 83 105M86 106Q86 108 85 110M86 106Q84 105 82 104M90 103Q90 106 91 109M91 109Q90 111 89 113M91 109Q91 111 92 113M91 109Q89 110 88 112M92 94Q94 98 95 102M95 102Q96 105 97 107M97 107Q96 108 95 110M97 107Q97 109 97 110M95 102Q97 104 98 107M98 107Q98 109 99 111M98 107Q100 108 101 110M82 72Q87 67 92 63M92 63Q96 64 100 63M100 63Q102 64 105 65M105 65Q106 67 106 69M106 69Q106 70 106 71M106 69Q108 70 109 71M105 65Q107 64 109 63M109 63Q110 63 112 64M109 63Q109 61 111 60M109 63Q110 63 112 63M105 65Q106 66 107 68M107 68Q108 69 108 71M107 68Q109 68 111 68M100 63Q102 61 104 59M104 59Q106 60 108 60M108 60Q109 61 110 61M108 60Q109 61 110 61M104 59Q105 58 106 56M106 56Q108 56 109 55M106 56Q107 55 107 54M106 56Q108 56 109 57M104 59Q106 60 108 61M108 61Q109 62 109 64M108 61Q110 61 111 60M108 61Q109 62 110 63M92 63Q93 59 96 55M96 55Q98 53 101 51M101 51Q103 51 106 51M106 51Q107 52 108 53M106 51Q108 50 110 49M101 51Q102 49 104 47M104 47Q105 46 107 44M104 47Q104 45 105 43M104 47Q105 45 106 44M96 55Q96 52 96 49M96 49Q96 47 96 45M96 45Q98 44 99 43M96 45Q96 44 96 43M96 45Q97 44 97 43M96 49Q94 49 92 48M92 48Q91 46 91 45M92 48Q91 47 89 46M96 55Q99 54 102 53M102 53Q104 52 107 51M107 51Q109 52 110 52M107 51Q108 50 110 49M107 51Q108 52 110 53M102 53Q103 51 103 49M103 49Q105 48 106 47M103 49Q103 48 102 47M71 27Q78 28 84 29M84 29Q87 32 91 35M91 35Q93 36 96 37M96 37Q98 38 99 39M99 39Q101 40 102 41M99 39Q101 39 102 40M96 37Q97 37 99 36M99 36Q100 36 101 36M99 36Q99 35 100 34M91 35Q94 34 96 32M96 32Q98 30 100 29M100 29Q102 28 104 28M100 29Q102 28 103 27M96 32Q97 30 98 28M98 28Q100 27 102 27M98 28Q99 26 99 24M84 29Q89 27 92 24M92 24Q94 22 96 20M96 20Q98 19 100 18M100 18Q101 17 103 16M100 18Q101 17 102 16M96 20Q96 18 96 16M96 16Q97 15 98 13M96 16Q95 15 94 14M96 16Q97 14 97 13M92 24Q93 20 95 17M95 17Q97 16 99 15M99 15Q101 16 103 17M99 15Q101 15 102 14M95 17Q96 15 96 12M96 12Q98 11 99 10M96 12Q96 10 97 9M71 27Q76 22 83 18M83 18Q87 20 92 21M92 21Q94 22 96 24M96 24Q98 25 99 26M99 26Q100 28 100 29M99 26Q101 26 102 26M96 24Q98 25 100 26M100 26Q101 27 101 29M100 26Q102 26 103 26M100 26Q101 27 102 29M92 21Q95 20 98 21M98 21Q100 23 101 24M101 24Q102 26 103 28M101 24Q103 25 105 26M101 24Q102 26 104 27M98 21Q101 20 103 19M103 19Q105 20 106 21M103 19Q104 17 105 16M103 19Q105 19 107 19M98 21Q100 22 101 24M101 24Q101 25 101 27M101 24Q103 24 104 25M83 18Q86 14 89 9M89 9Q92 7 95 4M95 4Q97 4 99 4M99 4Q101 5 103 6M99 4Q101 4 102 3M99 4Q101 4 103 4M95 4Q95 1 94 -1M94 -1Q95 -3 96 -4M94 -1Q93 -3 91 -4M89 9Q86 5 84 1M84 1Q85 -2 87 -4M87 -4Q89 -5 91 -5M87 -4Q86 -6 86 -8M84 1Q82 -1 79 -4M79 -4Q78 -6 78 -8M79 -4Q77 -4 75 -5M71 27Q78 26 84 24M84 24Q88 24 93 24M93 24Q95 26 97 28M97 28Q97 30 98 32M98 32Q99 34 99 35M98 32Q99 33 100 35M97 28Q99 29 101 30M101 30Q102 31 102 33M101 30Q103 30 104 30M97 28Q97 30 98 32M98 32Q99 34 99 35M98 32Q99 33 100 34M98 32Q99 33 99 35M93 24Q95 22 96 20M96 20Q98 19 100 19M100 19Q101 20 103 20M100 19Q101 18 103 17M96 20Q97 18 97 16M97 16Q98 15 100 14M97 16Q97 15 96 14M84 24Q86 19 86 14M86 14Q88 11 90 8M90 8Q91 6 92 4M92 4Q93 3 94 2M92 4Q91 2 91 0M92 4Q93 3 95 2M90 8Q90 6 89 4M89 4Q89 2 89 1M89 4Q88 3 87 2M89 4Q89 2 89 1M86 14Q84 11 83 8M83 8Q84 6 84 3M84 3Q85 2 87 1M84 3Q83 2 82 1M83 8Q81 6 79 5M79 5Q79 3 79 1M79 5Q77 3 76 2M84 24Q89 25 93 26M93 26Q95 30 95 33M95 33Q95 35 94 37M94 37Q93 39 92 40M94 37Q94 39 94 41M95 33Q96 35 98 37M98 37Q99 39 99 40M98 37Q100 38 102 38M93 26Q97 26 100 25M100 25Q103 26 105 27M105 27Q106 29 108 30M105 27Q107 28 109 27M100 25Q102 23 103 21M103 21Q104 19 105 18M103 21Q103 18 103 16M55 20Q57 14 59 7M59 7Q61 4 65 0M65 0Q68 -1 71 -2M71 -2Q73 -3 75 -5M75 -5Q77 -5 78 -6M75 -5Q76 -6 76 -8M71 -2Q73 -3 75 -4M75 -4Q76 -3 78 -3M75 -4Q76 -5 77 -6M65 0Q66 -3 66 -6M66 -6Q68 -8 69 -10M69 -10Q70 -11 71 -12M69 -10Q69 -12 69 -13M69 -10Q71 -10 73 -10M66 -6Q65 -8 64 -10M64 -10Q65 -11 65 -13M64 -10Q63 -10 62 -11M64 -10Q65 -11 66 -13M66 -6Q67 -7 68 -9M68 -9Q70 -10 71 -10M68 -9Q68 -10 68 -11M68 -9Q70 -10 71 -11M65 0Q68 -1 70 -3M70 -3Q72 -4 74 -5M74 -5Q76 -5 77 -5M74 -5Q75 -6 75 -8M70 -3Q71 -6 72 -8M72 -8Q73 -9 75 -9M72 -8Q72 -9 72 -11M59 7Q56 4 53 -0M53 -0Q54 -3 54 -6M54 -6Q56 -8 58 -10M58 -10Q60 -9 62 -9M58 -10Q58 -11 59 -12M54 -6Q53 -8 52 -9M52 -9Q51 -10 51 -12M52 -9Q51 -10 50 -11M52 -9Q51 -10 52 -12M53 -0Q51 -3 48 -5M48 -5Q47 -7 46 -10M46 -10Q46 -12 46 -15M46 -10Q44 -11 42 -12M46 -10Q47 -12 47 -14M48 -5Q45 -5 43 -5M43 -5Q41 -5 39 -6M43 -5Q41 -5 39 -5M48 -5Q46 -6 44 -8M44 -8Q44 -9 43 -11M44 -8Q42 -7 41 -7M44 -8Q44 -9 43 -11M53 -0Q52 -3 52 -6M52 -6Q54 -8 55 -9M55 -9Q56 -10 58 -11M55 -9Q55 -11 56 -12M52 -6Q51 -7 49 -8M49 -8Q48 -9 48 -11M49 -8Q48 -8 46 -8M52 -6Q54 -8 55 -10M55 -10Q56 -11 58 -12M55 -10Q55 -12 55 -13M59 7Q62 4 65 0M65 0Q67 -1 70 -3M70 -3Q71 -3 73 -2M73 -2Q74 -1 75 0M73 -2Q75 -2 76 -3M70 -3Q70 -6 69 -8M69 -8Q70 -9 71 -11M69 -8Q68 -9 67 -10M65 0Q63 -3 61 -6M61 -6Q59 -8 58 -10M58 -10Q58 -12 59 -14M58 -10Q56 -12 54 -13M58 -10Q58 -13 58 -15M61 -6Q59 -7 56 -7M56 -7Q56 -8 55 -10M56 -7Q55 -6 53 -6M61 -6Q60 -8 59 -10M59 -10Q59 -11 60 -12M59 -10Q57 -10 56 -11M55 20Q52 16 48 12M48 12Q47 9 47 5M47 5Q49 3 50 0M50 0Q52 -0 54 -1M54 -1Q55 -1 56 -2M54 -1Q54 -2 55 -4M50 0Q49 -2 49 -3M49 -3Q50 -4 51 -5M49 -3Q49 -5 48 -6M47 5Q45 3 43 0M43 0Q44 -2 44 -4M44 -4Q45 -5 46 -7M44 -4Q44 -5 45 -7M44 -4Q46 -5 47 -6M43 0Q42 -1 42 -3M42 -3Q42 -4 41 -5M42 -3Q41 -4 40 -4M48 12Q44 11 41 9M41 9Q40 7 38 5M38 5Q38 3 37 2M37 2Q37 0 36 -1M37 2Q36 1 35 -0M37 2Q37 0 37 -1M38 5Q37 4 36 3M36 3Q35 1 34 0M36 3Q34 3 33 3M41 9Q38 10 36 10M36 10Q34 10 32 9M32 9Q31 8 30 7M32 9Q31 9 29 9M36 10Q34 11 32 12M32 12Q31 12 30 13M32 12Q31 13 30 13M32 12Q31 12 30 12M36 10Q34 10 32 10M32 10Q31 9 30 8M32 10Q31 10 30 11M75 61Q76 66 77 71M77 71Q78 74 78 78M78 78Q77 80 76 82M76 82Q74 84 73 85M73 85Q71 85 70 84M73 85Q73 87 73 88M76 82Q76 84 76 86M76 86Q76 88 75 89M76 86Q76 88 77 89M78 78Q80 80 81 82M81 82Q81 83 81 85M81 85Q81 86 81 87M81 85Q82 86 83 87M81 85Q82 86 81 87M81 82Q82 83 84 84M84 84Q84 85 85 86M84 84Q85 84 86 84M84 84Q84 85 85 85M77 71Q79 74 81 77M81 77Q80 80 80 82M80 82Q79 84 77 85M77 85Q76 84 75 84M77 85Q76 86 76 87M80 82Q81 84 81 86M81 86Q81 87 80 88M81 86Q82 87 82 89M81 77Q82 79 85 80M85 80Q85 82 85 84M85 84Q84 85 82 85M85 84Q85 86 85 87M85 80Q86 80 88 80M88 80Q89 81 90 81M88 80Q89 80 90 79M88 80Q88 81 89 82M81 77Q82 80 83 82M83 82Q82 84 81 86M81 86Q80 85 79 85M81 86Q82 87 82 88M83 82Q85 83 86 84M86 84Q87 85 88 85M86 84Q88 84 89 83M83 82Q83 84 83 86M83 86Q82 87 81 88M83 86Q84 87 85 88M77 71Q78 74 79 77M79 77Q78 79 78 81M78 81Q76 82 75 82M75 82Q74 82 73 82M75 82Q74 83 74 85M78 81Q78 83 78 84M78 84Q78 86 78 87M78 84Q79 85 80 87M78 84Q78 85 78 87M79 77Q80 79 81 81M81 81Q81 83 81 85M81 85Q81 86 80 87M81 85Q81 86 81 87M81 81Q83 82 85 83M85 83Q86 84 87 84M85 83Q86 83 87 84M85 83Q85 84 85 85M79 77Q78 79 78 81M78 81Q77 82 76 83M76 83Q75 83 74 84M76 83Q76 84 76 85M76 83Q75 83 75 84M78 81Q78 82 78 83M78 83Q77 84 76 85M78 83Q78 84 79 85M75 61Q80 62 85 63M85 63Q89 65 92 68M92 68Q94 69 96 71M96 71Q96 74 95 76M95 76Q93 76 92 76M95 76Q94 77 93 78M96 71Q98 72 99 73M99 73Q100 73 102 74M99 73Q101 72 102 72M92 68Q95 68 98 68M98 68Q100 69 102 71M102 71Q102 73 103 75M102 71Q103 72 105 73M98 68Q100 67 102 66M102 66Q104 67 105 66M102 66Q104 66 105 65M102 66Q104 66 105 67M85 63Q89 60 91 57M91 57Q93 55 95 53M95 53Q97 53 98 52M98 52Q99 53 100 54M98 52Q99 52 100 51M95 53Q96 52 96 50M96 50Q97 49 98 48M96 50Q95 49 95 48M91 57Q91 54 91 52M91 52Q93 50 93 49M93 49Q94 47 95 46M93 49Q94 47 94 46M91 52Q91 50 92 49M92 49Q93 48 94 47M92 49Q92 48 91 47M91 57Q93 55 96 54M96 54Q98 54 100 55M100 55Q101 56 102 57M100 55Q101 54 102 54M100 55Q101 55 102 56M96 54Q97 53 99 52M99 52Q100 51 101 51M99 52Q100 50 101 49M85 63Q87 66 90 68M90 68Q90 70 90 73M90 73Q89 74 88 75M88 75Q87 75 86 76M88 75Q87 76 86 77M90 73Q90 74 90 76M90 76Q89 77 88 78M90 76Q90 77 90 78M90 73Q89 74 89 76M89 76Q88 78 87 79M89 76Q90 78 90 79M89 76Q88 77 87 78M90 68Q92 67 95 67M95 67Q97 67 98 67M98 67Q99 67 100 67M98 67Q99 66 100 65M98 67Q99 67 100 68M95 67Q97 66 98 65M98 65Q99 64 100 63M98 65Q98 63 99 62M95 67Q97 67 98 67M98 67Q99 68 100 69M98 67Q99 66 100 66M90 68Q91 69 92 71M92 71Q91 73 91 74M91 74Q90 75 89 75M91 74Q91 75 92 76M92 71Q92 73 93 74M93 74Q93 75 93 76M93 74Q94 75 95 76M70 38Q74 37 78 36M78 36Q81 38 85 39M85 39Q87 40 88 42M88 42Q89 43 90 45M90 45Q90 46 90 47M90 45Q91 45 92 46M90 45Q90 46 90 48M88 42Q90 43 91 44M91 44Q92 44 93 46M91 44Q93 44 94 44M85 39Q87 39 89 38M89 38Q90 39 91 40M91 40Q91 41 92 42M91 40Q92 41 93 41M91 40Q91 41 91 42M89 38Q90 37 90 36M90 36Q91 36 92 36M90 36Q90 35 89 34M90 36Q91 36 92 36M78 36Q82 35 86 34M86 34Q88 36 90 38M90 38Q91 39 92 41M92 41Q92 42 92 43M92 41Q93 41 93 42M90 38Q92 37 94 37M94 37Q95 37 97 37M94 37Q95 36 96 35M94 37Q95 38 96 39M86 34Q88 32 90 30M90 30Q91 29 93 29M93 29Q94 30 96 30M93 29Q94 28 95 26M90 30Q91 28 91 26M91 26Q92 24 92 23M91 26Q91 24 90 23M91 26Q92 26 94 25M86 34Q88 36 89 39M89 39Q88 41 88 43M88 43Q88 44 88 45M88 43Q89 44 90 45M89 39Q90 40 91 42M91 42Q91 43 91 44M91 42Q92 43 94 43M89 39Q88 41 88 43M88 43Q87 44 86 45M88 43Q88 44 88 45M88 43Q87 44 86 45M78 36Q82 37 84 39M84 39Q86 41 88 42M88 42Q88 43 89 44M89 44Q90 45 91 45M89 44Q91 44 92 44M89 44Q90 44 91 45M88 42Q89 42 91 41M91 41Q92 42 93 43M91 41Q92 40 93 39M91 41Q92 42 93 42M88 42Q88 44 89 45M89 45Q90 46 91 48M89 45Q91 46 92 47M84 39Q86 40 88 41M88 41Q89 42 90 44M90 44Q90 45 90 46M90 44Q91 44 92 44M88 41Q89 42 91 42M91 42Q92 43 93 44M91 42Q92 42 93 41M91 42Q92 43 93 43M70 38Q69 33 70 28M70 28Q73 25 74 21M74 21Q75 18 76 16M76 16Q78 15 80 13M80 13Q81 13 82 13M80 13Q81 12 82 12M76 16Q77 13 76 11M76 11Q76 9 76 8M76 11Q75 10 74 9M76 11Q77 10 77 8M74 21Q73 19 74 16M74 16Q74 14 75 13M75 13Q76 13 77 12M75 13Q76 12 76 10M74 16Q73 15 72 13M72 13Q72 11 72 10M72 13Q71 12 71 11M74 16Q75 15 77 14M77 14Q78 15 79 15M77 14Q77 13 78 12M70 28Q69 24 68 21M68 21Q68 18 69 16M69 16Q70 14 72 13M72 13Q73 13 74 12M72 13Q71 12 71 11M69 16Q70 14 71 13M71 13Q72 12 73 11M71 13Q72 12 72 11M68 21Q66 18 63 16M63 16Q63 15 62 13M62 13Q63 12 63 11M62 13Q62 12 60 12M63 16Q61 15 59 14M59 14Q59 12 59 11M59 14Q58 14 57 14M63 16Q63 14 64 12M64 12Q65 11 67 10M64 12Q62 11 61 9M64 12Q65 11 66 9M68 21Q69 18 70 16M70 16Q73 15 74 14M74 14Q76 14 78 14M74 14Q75 13 76 11M70 16Q70 14 70 12M70 12Q71 11 72 10M70 12Q69 11 68 11M70 28Q73 25 77 22M77 22Q79 21 82 19M82 19Q83 18 85 17M85 17Q86 17 88 17M85 17Q86 16 87 15M85 17Q86 17 88 17M82 19Q82 17 83 14M83 14Q84 14 85 13M83 14Q83 13 82 12M83 14Q84 13 85 13M82 19Q83 18 85 17M85 17Q87 18 88 18M85 17Q87 17 88 16M77 22Q78 20 79 17M79 17Q80 16 81 14M81 14Q82 13 83 12M81 14Q81 13 81 12M79 17Q79 15 78 13M78 13Q78 12 79 11M78 13Q77 13 75 12M78 13Q78 12 79 11M79 17Q81 16 82 15M82 15Q84 15 85 14M82 15Q83 14 84 12M70 38Q74 35 77 30M77 30Q79 27 81 23M81 23Q83 21 85 20M85 20Q87 19 89 19M89 19Q90 20 91 20M89 19Q90 18 92 17M85 20Q86 18 87 17M87 17Q87 16 88 15M87 17Q87 16 87 14M81 23Q81 21 80 18M80 18Q81 16 80 14M80 14Q81 13 82 12M80 14Q79 14 78 13M80 18Q79 17 78 15M78 15Q78 14 78 13M78 15Q77 15 76 15M78 15Q78 14 78 13M80 18Q81 16 81 15M81 15Q81 13 82 12M81 15Q81 13 80 12M81 15Q82 14 83 13M77 30Q77 26 76 23M76 23Q78 21 80 19M80 19Q81 19 82 18M82 18Q83 19 84 19M82 18Q83 18 84 17M82 18Q83 19 84 19M80 19Q79 17 79 16M79 16Q79 14 80 13M79 16Q78 15 77 14M76 23Q75 20 73 18M73 18Q73 17 72 15M72 15Q73 13 73 11M72 15Q71 14 70 13M72 15Q73 13 74 12M73 18Q72 18 70 17M70 17Q68 16 68 15M70 17Q69 17 67 17M70 17Q68 16 68 15M73 18Q73 17 72 15M72 15Q73 14 73 13M72 15Q72 15 71 14M77 30Q80 27 83 23M83 23Q87 23 90 22M90 22Q93 23 96 24M96 24Q98 26 100 27M96 24Q98 25 99 26M90 22Q93 21 95 20M95 20Q97 20 100 21M95 20Q97 19 98 18M95 20Q97 19 98 19M83 23Q84 20 83 17M83 17Q84 14 85 12M85 12Q86 10 88 10M85 12Q85 10 84 8M83 17Q82 15 81 13M81 13Q82 12 83 10M81 13Q80 12 79 11M83 23Q87 23 90 23M90 23Q92 24 94 26M94 26Q95 27 96 28M94 26Q96 26 98 27M90 23Q91 20 92 18M92 18Q93 16 95 15M92 18Q92 16 92 15M92 18Q94 17 95 16M90 23Q92 23 94 23M94 23Q96 23 98 24M94 23Q96 23 97 23M67 181Q70 183 72 185M72 185Q73 187 75 189M75 189Q75 190 76 191M76 191Q76 192 76 193M76 191Q78 191 79 192M75 189Q76 189 78 189M78 189Q79 189 80 189M78 189Q78 189 79 188M78 189Q78 190 79 191M75 189Q75 190 76 192M76 192Q75 193 75 193M76 192Q76 192 76 193M76 192Q75 192 74 193M72 185Q75 186 77 185M77 185Q78 186 80 187M80 187Q80 189 80 190M80 187Q81 187 82 187M77 185Q78 184 79 183M79 183Q81 183 82 183M79 183Q80 182 80 181M67 181Q71 181 76 181M76 181Q78 183 79 186M79 186Q79 188 79 191M79 191Q78 192 78 193M79 191Q80 192 81 193M79 186Q81 188 83 190M83 190Q82 191 82 192M83 190Q84 190 86 190M83 190Q84 191 85 192M76 181Q78 180 80 178M80 178Q83 177 85 177M85 177Q85 179 86 181M85 177Q86 177 87 177M80 178Q81 176 81 174M81 174Q82 172 82 171M81 174Q81 172 80 171M81 174Q82 173 83 171M76 181Q78 182 80 183M80 183Q82 185 83 186M83 186Q83 187 83 189M83 186Q84 186 85 186M83 186Q82 187 82 189M80 183Q83 183 85 183M85 183Q86 184 87 184M85 183Q85 182 87 181M85 183Q86 184 88 185M70 177Q73 181 75 185M75 185Q75 188 75 191M75 191Q74 193 74 195M74 195Q72 195 71 196M74 195Q74 196 75 197M74 195Q73 196 73 197M75 191Q75 193 76 195M76 195Q75 197 74 198M76 195Q78 196 79 197M75 185Q77 186 79 188M79 188Q80 190 81 192M81 192Q81 193 82 195M81 192Q82 192 83 193M79 188Q81 188 82 188M82 188Q84 188 85 189M82 188Q83 188 85 187M70 177Q74 176 78 174M78 174Q82 175 84 177M84 177Q85 178 86 180M86 180Q86 182 86 183M86 180Q87 181 88 182M86 180Q86 182 86 183M84 177Q87 176 89 177M89 177Q90 177 92 178M89 177Q90 176 91 175M89 177Q90 177 91 178M84 177Q85 179 85 182M85 182Q84 184 84 186M85 182Q86 183 87 184M85 182Q85 183 84 185M78 174Q80 171 81 168M81 168Q83 166 84 164M84 164Q85 163 87 162M84 164Q85 162 86 161M81 168Q80 165 78 163M78 163Q78 162 79 160M78 163Q77 162 75 161M78 163Q77 162 77 160M78 174Q82 175 85 175M85 175Q87 177 89 178M89 178Q90 180 90 182M89 178Q91 178 92 179M89 178Q90 179 91 180M85 175Q87 174 88 172M88 172Q89 171 91 170M88 172Q88 171 88 169M78 161Q80 166 81 172M81 172Q79 176 76 178M76 178Q74 178 71 178M71 178Q69 177 68 175M71 178Q69 179 68 179M76 178Q75 181 73 184M73 184Q72 186 71 188M73 184Q75 186 76 188M73 184Q71 185 69 187M81 172Q83 176 85 180M85 180Q83 182 82 185M82 185Q81 187 80 189M82 185Q83 188 84 190M85 180Q87 182 89 185M89 185Q88 187 87 189M89 185Q91 186 94 187M89 185Q90 187 90 188M78 161Q83 162 88 164M88 164Q89 166 91 169M91 169Q92 171 92 173M92 173Q92 174 92 176M92 173Q93 174 94 175M91 169Q93 169 95 169M95 169Q97 170 99 170M95 169Q97 169 98 169M95 169Q96 171 97 171M88 164Q90 161 93 159M93 159Q96 159 98 158M98 158Q100 159 101 160M98 158Q99 157 99 155M98 158Q100 158 101 159M93 159Q94 157 96 154M96 154Q98 154 100 154M96 154Q97 153 98 151M88 164Q89 167 92 170M92 170Q93 173 94 175M94 175Q93 177 92 178M94 175Q94 178 95 179M92 170Q94 171 96 173M96 173Q97 174 99 175M96 173Q98 173 99 173M96 173Q97 174 98 176M92 170Q92 173 92 176M92 176Q92 178 93 180M92 176Q94 178 95 180M76 153Q81 154 86 153M86 153Q89 155 91 157M91 157Q91 160 91 162M91 162Q90 164 90 166M91 162Q92 164 94 165M91 157Q94 158 96 158M96 158Q98 158 99 159M96 158Q98 157 99 156M86 153Q90 150 93 147M93 147Q96 147 99 147M99 147Q101 148 103 148M99 147Q101 146 103 146M93 147Q93 144 93 141M93 141Q95 139 97 138M93 141Q93 138 93 136M93 147Q96 148 100 149M100 149Q101 150 103 152M100 149Q102 147 104 146M86 153Q91 153 95 154M95 154Q96 156 97 158M97 158Q98 160 99 162M97 158Q99 159 101 159M95 154Q97 153 100 153M100 153Q101 154 103 156M100 153Q101 152 102 151M100 153Q102 154 104 154M76 153Q80 151 85 149M85 149Q89 149 93 150M93 150Q95 151 97 151M97 151Q99 152 100 153M97 151Q99 151 101 152M93 150Q96 149 98 147M98 147Q100 147 102 148M98 147Q98 145 98 143M93 150Q95 152 97 152M97 152Q99 153 101 154M97 152Q99 152 101 152M85 149Q87 147 90 145M90 145Q92 145 94 145M94 145Q96 145 98 145M94 145Q96 144 98 143M90 145Q91 143 91 140M91 140Q91 138 91 137M91 140Q90 138 90 137M91 140Q92 138 93 136M90 145Q92 144 93 143M93 143Q94 142 95 141M93 143Q93 141 94 140M93 143Q95 142 96 141M52 198Q47 201 41 202M41 202Q36 202 31 201M31 201Q28 198 24 197M24 197Q23 194 23 192M24 197Q22 198 20 199M31 201Q28 203 25 205M25 205Q24 204 22 203M25 205Q24 207 23 208M31 201Q29 198 26 195M26 195Q24 193 23 191M26 195Q23 195 20 194M41 202Q37 204 33 207M33 207Q30 208 27 209M27 209Q25 209 22 209M27 209Q24 211 22 212M27 209Q24 209 22 209M33 207Q33 211 33 215M33 215Q32 216 31 218M33 215Q35 216 36 218M52 198Q54 202 57 207M57 207Q58 210 60 213M60 213Q59 216 58 218M58 218Q57 220 56 222M58 218Q59 220 60 222M58 218Q57 220 56 220M60 213Q61 215 62 217M62 217Q62 219 62 221M62 217Q64 219 66 219M62 217Q61 219 60 220M57 207Q60 210 62 213M62 213Q62 215 62 218M62 218Q61 219 60 220M62 218Q62 219 62 221M62 213Q65 213 67 212M67 212Q68 213 70 214M67 212Q68 211 69 209M52 198Q48 201 44 205M44 205Q40 205 36 206M36 206Q34 205 31 205M31 205Q30 204 28 203M31 205Q29 206 27 206M36 206Q34 207 31 208M31 208Q29 207 27 206M31 208Q30 209 28 211M31 208Q29 208 27 208M44 205Q43 208 42 211M42 211Q39 213 37 214M37 214Q35 215 34 214M37 214Q36 217 35 219M37 214Q35 215 34 215M42 211Q44 213 45 216M45 216Q45 217 46 219M45 216Q47 215 49 215M70 191Q72 196 75 201M75 201Q76 204 76 208M76 208Q75 211 74 213M74 213Q72 213 70 213M74 213Q74 215 74 218M76 208Q79 210 81 212M81 212Q81 214 81 216M81 212Q83 212 86 212M75 201Q77 203 80 205M80 205Q80 208 81 210M81 210Q81 211 81 213M81 210Q82 211 83 212M80 205Q82 205 85 204M85 204Q86 205 87 207M85 204Q86 203 87 202M75 201Q76 204 78 207M78 207Q79 209 80 212M80 212Q80 213 81 215M80 212Q82 212 84 213M78 207Q80 209 82 211M82 211Q84 213 85 215M82 211Q84 212 86 212M78 207Q78 210 79 213M79 213Q79 215 79 217M79 213Q80 215 82 216M79 213Q79 215 79 217M70 191Q76 191 81 191M81 191Q86 190 90 191M90 191Q92 193 93 195M93 195Q93 197 93 199M93 195Q95 197 97 197M90 191Q93 190 96 188M96 188Q97 188 99 187M96 188Q98 187 99 186M96 188Q98 188 100 188M81 191Q85 188 89 186M89 186Q91 185 94 184M94 184Q97 185 99 186M94 184Q96 184 98 182M94 184Q96 185 98 186M89 186Q89 183 89 180M89 180Q91 179 93 179M89 180Q88 178 87 177M89 186Q92 186 95 187M95 187Q96 189 97 190M95 187Q97 186 99 185M95 187Q96 189 97 191M81 191Q85 191 89 191M89 191Q91 193 93 194M93 194Q94 195 95 196M93 194Q94 194 96 193M89 191Q92 191 94 190M94 190Q96 191 97 192M94 190Q96 189 98 188M94 190Q96 191 97 192M70 191Q74 194 77 198M77 198Q79 201 82 203M82 203Q82 206 82 208M82 208Q81 210 80 211M82 208Q83 210 84 211M82 203Q84 205 86 207M86 207Q87 208 88 210M86 207Q88 207 90 208M77 198Q81 198 84 200M84 200Q85 202 86 204M86 204Q85 206 84 207M86 204Q87 205 89 206M86 204Q85 206 84 208M84 200Q86 199 88 198M88 198Q89 199 91 199M88 198Q89 197 90 196M109 136Q114 140 120 142M120 142Q124 145 128 149M128 149Q128 152 130 154M130 154Q130 156 131 158M131 158Q130 159 129 160M131 158Q132 159 133 160M130 154Q131 155 133 156M133 156Q133 157 133 158M133 156Q134 156 136 155M128 149Q130 151 132 154M132 154Q132 156 133 158M133 158Q133 160 132 161M133 158Q134 160 135 161M132 154Q134 154 136 154M136 154Q138 155 139 155M136 154Q137 153 139 152M132 154Q131 156 130 158M130 158Q129 159 127 160M130 158Q130 160 130 162M120 142Q124 143 128 145M128 145Q130 147 132 149M132 149Q133 150 133 152M133 152Q133 153 132 154M133 152Q134 153 134 154M133 152Q133 153 133 155M132 149Q134 147 136 146M136 146Q138 147 139 148M136 146Q137 145 138 144M128 145Q130 144 133 144M133 144Q135 145 136 147M136 147Q136 148 136 149M136 147Q137 147 139 147M133 144Q134 142 135 140M135 140Q136 139 137 139M135 140Q135 139 136 138M128 145Q129 148 129 151M129 151Q129 152 129 154M129 154Q128 155 128 156M129 154Q129 155 130 156M129 154Q128 155 128 156M129 151Q130 152 132 154M132 154Q132 155 133 157M132 154Q133 154 134 155M129 151Q128 153 127 154M127 154Q125 155 124 155M127 154Q127 156 126 157M109 136Q114 134 118 131M118 131Q121 131 124 130M124 130Q127 131 129 132M129 132Q131 132 132 133M132 133Q133 134 134 135M132 133Q133 132 134 132M132 133Q133 134 134 134M129 132Q131 131 132 129M132 129Q134 130 135 131M132 129Q133 128 135 128M129 132Q130 133 131 135M131 135Q132 136 132 137M131 135Q132 135 133 135M131 135Q132 136 132 137M124 130Q126 129 129 129M129 129Q130 130 131 131M131 131Q131 132 132 133M131 131Q132 131 133 131M129 129Q130 128 132 127M132 127Q133 127 134 127M132 127Q132 127 133 126M132 127Q133 128 134 128M118 131Q120 127 122 124M122 124Q124 123 126 121M126 121Q127 121 129 121M129 121Q130 122 131 123M129 121Q130 120 130 119M126 121Q127 120 127 118M127 118Q128 118 129 117M127 118Q127 118 128 117M122 124Q122 122 122 119M122 119Q123 118 124 116M124 116Q125 116 126 116M124 116Q124 115 123 114M124 116Q125 116 125 115M122 119Q122 117 122 115M122 115Q123 114 124 112M122 115Q121 113 120 112M122 115Q122 114 122 112M118 131Q121 132 124 133M124 133Q126 133 128 135M128 135Q129 136 130 136M130 136Q131 137 131 138M130 136Q131 137 133 137M128 135Q129 135 131 135M131 135Q132 136 132 137M131 135Q132 134 133 134M124 133Q126 132 128 130M128 130Q130 130 131 129M131 129Q132 128 133 128M131 129Q131 127 132 126M128 130Q129 128 130 127M130 127Q131 126 132 126M130 127Q130 125 130 124M109 136Q115 136 120 136M120 136Q124 137 127 137M127 137Q129 138 131 140M131 140Q132 142 132 143M132 143Q132 145 133 146M132 143Q133 144 133 146M131 140Q133 141 134 141M134 141Q136 142 136 144M134 141Q136 141 137 141M134 141Q136 142 137 143M127 137Q129 136 131 135M131 135Q132 135 134 135M134 135Q135 135 136 135M134 135Q135 134 135 134M131 135Q132 134 133 132M133 132Q134 132 134 132M133 132Q133 132 132 131M131 135Q132 135 134 135M134 135Q134 136 135 137M134 135Q135 135 136 135M127 137Q130 137 132 137M132 137Q133 138 134 139M134 139Q135 140 135 141M134 139Q135 139 136 140M132 137Q134 137 135 137M135 137Q136 138 137 138M135 137Q136 136 137 135M120 136Q123 134 126 132M126 132Q128 131 131 130M131 130Q132 131 134 132M134 132Q135 133 135 135M134 132Q135 132 136 132M134 132Q135 133 136 134M131 130Q131 129 132 127M132 127Q134 128 135 128M132 127Q133 126 133 125M131 130Q132 131 134 132M134 132Q134 133 134 135M134 132Q135 132 136 132M126 132Q128 129 129 127M129 127Q131 127 133 127M133 127Q135 127 136 127M133 127Q135 127 136 126M129 127Q129 126 129 124M129 124Q129 123 130 122M129 124Q128 123 127 122M97 117Q100 113 104 108M104 108Q108 106 111 104M111 104Q114 104 117 104M117 104Q119 104 121 105M121 105Q122 106 123 106M121 105Q122 105 124 104M117 104Q118 102 120 101M120 101Q122 101 123 102M120 101Q120 99 121 97M120 101Q122 100 123 99M111 104Q112 101 113 99M113 99Q115 98 117 97M117 97Q118 97 119 96M117 97Q117 96 118 95M113 99Q113 97 113 96M113 96Q113 94 113 93M113 96Q112 94 112 93M104 108Q106 104 107 100M107 100Q108 97 110 95M110 95Q112 94 115 94M115 94Q117 94 119 94M115 94Q117 93 118 93M110 95Q111 93 111 91M111 91Q112 90 114 90M111 91Q111 89 111 88M107 100Q105 98 102 97M102 97Q100 95 98 94M98 94Q98 92 97 90M98 94Q97 94 95 95M102 97Q100 96 98 94M98 94Q98 92 97 91M98 94Q97 93 96 92M97 117Q95 113 92 109M92 109Q90 105 89 101M89 101Q91 99 92 96M92 96Q94 95 95 93M95 93Q96 92 97 90M95 93Q95 91 95 89M95 93Q96 91 98 90M92 96Q92 94 92 91M92 91Q93 90 94 89M92 91Q92 90 91 88M89 101Q87 99 85 98M85 98Q85 96 85 94M85 94Q86 93 86 92M85 94Q84 92 84 91M85 94Q86 92 86 91M85 98Q83 97 82 96M82 96Q81 95 80 94M82 96Q80 96 79 96M92 109Q89 107 86 106M86 106Q85 104 84 103M84 103Q84 101 84 100M84 100Q84 99 85 98M84 100Q84 99 83 99M84 103Q83 102 82 102M86 106Q84 106 82 105M82 105Q80 104 79 103M79 103Q80 102 80 101M79 103Q78 103 77 102M82 105Q80 106 79 107M79 107Q77 107 76 107M79 107Q78 108 77 110M82 105Q80 105 79 104M79 104Q78 103 78 102M79 104Q78 104 77 104M80 103Q84 98 90 95M90 95Q94 95 97 93M97 93Q100 94 102 94M102 94Q104 94 106 94M106 94Q107 95 108 95M106 94Q107 94 108 93M102 94Q103 92 105 90M105 90Q106 90 108 89M105 90Q104 89 104 88M105 90Q106 90 107 88M97 93Q99 91 101 89M101 89Q103 88 105 87M105 87Q107 87 109 87M105 87Q105 86 106 84M101 89Q100 86 101 84M101 84Q102 83 103 82M101 84Q100 83 100 82M101 84Q102 83 104 83M97 93Q100 95 102 96M102 96Q104 98 105 99M105 99Q106 100 107 101M105 99Q106 100 107 100M105 99Q105 101 106 102M102 96Q105 95 107 95M107 95Q108 95 110 94M107 95Q107 93 108 92M102 96Q103 98 104 100M104 100Q103 101 103 102M104 100Q104 101 105 102M90 95Q92 92 93 87M93 87Q95 85 98 83M98 83Q100 83 103 82M103 82Q104 84 106 85M103 82Q104 82 106 81M98 83Q100 82 101 80M101 80Q103 79 104 78M101 80Q101 79 102 78M93 87Q90 85 88 82M88 82Q88 80 88 78M88 78Q89 76 90 75M88 78Q88 76 89 75M88 82Q85 82 83 82M83 82Q82 81 80 81M83 82Q81 82 79 82M80 103Q78 97 78 91M78 91Q82 89 85 86M85 86Q88 85 90 83M90 83Q92 82 94 82M94 82Q95 82 96 83M94 82Q94 80 95 79M94 82Q95 82 96 83M90 83Q91 81 91 79M91 79Q92 78 92 76M91 79Q90 78 90 77M90 83Q92 83 95 82M95 82Q96 82 98 83M95 82Q96 81 98 79M85 86Q86 83 89 80M89 80Q91 80 93 78M93 78Q94 78 96 77M93 78Q93 77 94 75M89 80Q89 77 88 75M88 75Q89 73 91 71M88 75Q86 74 85 73M78 91Q75 88 72 84M72 84Q73 81 73 77M73 77Q75 75 78 74M78 74Q79 74 81 74M78 74Q78 72 78 70M78 74Q80 74 82 75M73 77Q73 74 74 72M74 72Q75 70 76 69M74 72Q73 70 72 68M73 77Q75 75 77 73M77 73Q78 74 80 75M77 73Q78 72 78 70M72 84Q70 82 67 79M67 79Q67 76 66 73M66 73Q67 71 68 70M66 73Q65 72 64 70M67 79Q65 78 63 77M63 77Q62 76 61 74M63 77Q61 77 60 76M80 103Q86 101 91 97M91 97Q95 95 99 94M99 94Q102 96 104 98M104 98Q105 101 105 103M105 103Q104 104 103 105M105 103Q106 104 106 106M105 103Q104 104 102 105M104 98Q106 100 108 101M108 101Q109 101 110 102M108 101Q110 101 111 101M104 98Q105 101 104 103M104 103Q102 104 101 104M104 103Q105 105 105 106M104 103Q103 104 102 105M99 94Q101 92 104 90M104 90Q106 91 108 90M108 90Q110 91 111 92M108 90Q109 89 111 88M104 90Q105 89 106 88M106 88Q107 88 108 88M106 88Q106 87 106 85M91 97Q92 91 94 87M94 87Q96 84 99 83M99 83Q100 82 102 80M102 80Q104 80 105 80M102 80Q102 79 102 77M102 80Q103 80 105 80M99 83Q100 80 101 78M101 78Q102 77 103 76M101 78Q101 76 101 74M94 87Q93 83 92 79M92 79Q93 76 94 73M94 73Q96 72 99 72M94 73Q93 71 92 70M92 79Q92 77 92 74M92 74Q93 73 94 72M92 74Q90 73 89 72M92 74Q92 73 93 71M92 79Q94 77 95 75M95 75Q96 73 97 71M95 75Q95 73 95 71M58 108Q57 103 57 97M57 97Q59 94 61 91M61 91Q63 90 65 88M65 88Q67 88 69 88M69 88Q70 89 71 89M69 88Q70 88 71 87M65 88Q65 87 65 85M65 85Q65 84 66 83M65 85Q64 84 64 83M61 91Q62 88 62 86M62 86Q62 84 62 82M62 82Q63 81 65 81M62 82Q61 80 61 79M62 86Q61 83 60 81M60 81Q60 80 59 78M60 81Q59 80 57 79M62 86Q62 84 63 82M63 82Q65 82 66 82M63 82Q64 81 64 80M63 82Q65 82 66 81M61 91Q63 89 66 88M66 88Q68 89 70 89M70 89Q70 91 70 92M70 89Q71 89 72 89M70 89Q71 90 71 92M66 88Q67 87 69 85M69 85Q70 85 72 86M69 85Q69 84 70 83M57 97Q55 94 55 91M55 91Q54 88 53 86M53 86Q52 85 51 84M51 84Q51 82 50 81M51 84Q50 83 49 83M51 84Q51 82 50 81M53 86Q51 86 49 85M49 85Q49 85 48 84M49 85Q48 85 47 85M55 91Q53 89 50 88M50 88Q49 86 49 85M49 85Q49 83 48 82M49 85Q48 83 48 82M50 88Q49 88 47 88M47 88Q46 87 45 87M47 88Q46 88 44 88M47 88Q46 88 45 87M58 108Q51 106 44 107M44 107Q40 105 36 106M36 106Q33 104 31 101M31 101Q31 99 31 96M31 96Q32 95 32 93M31 96Q30 95 30 93M31 101Q28 100 26 99M26 99Q25 97 24 95M26 99Q25 98 23 97M31 101Q30 99 29 96M29 96Q28 94 27 93M29 96Q27 95 26 94M29 96Q30 94 30 93M36 106Q34 107 32 109M32 109Q30 110 28 111M28 111Q27 111 26 111M28 111Q28 112 27 113M28 111Q27 112 26 112M32 109Q31 111 31 114M31 114Q30 115 29 116M31 114Q31 115 31 117M31 114Q30 115 30 117M32 109Q30 110 28 111M28 111Q26 110 24 109M28 111Q27 112 26 114M28 111Q26 111 25 110M44 107Q40 110 35 112M35 112Q30 111 26 110M26 110Q22 109 19 107M19 107Q19 105 19 103M19 107Q17 107 14 107M26 110Q23 109 20 108M20 108Q19 106 18 104M20 108Q18 108 16 107M20 108Q19 105 18 103M35 112Q33 115 31 118M31 118Q29 119 27 119M27 119Q26 118 25 117M27 119Q26 120 25 121M27 119Q25 119 24 118M31 118Q32 121 31 124M31 124Q30 125 28 126M31 124Q31 125 32 127M31 118Q29 120 27 122M27 122Q24 122 22 121M27 122Q25 123 25 125M77 104Q80 100 82 96M82 96Q85 93 88 92M88 92Q91 90 93 89M93 89Q95 89 97 89M97 89Q97 90 98 92M97 89Q98 88 98 87M97 89Q97 90 98 91M93 89Q94 87 96 86M96 86Q96 85 97 85M96 86Q96 85 96 83M93 89Q95 89 97 89M97 89Q98 90 100 90M97 89Q98 88 99 87M88 92Q91 90 93 89M93 89Q95 89 97 90M97 90Q98 91 99 92M97 90Q98 91 100 90M93 89Q93 86 93 84M93 84Q94 83 95 82M93 84Q93 82 92 81M82 96Q82 92 81 88M81 88Q81 85 81 83M81 83Q81 81 82 79M82 79Q82 78 84 78M82 79Q81 78 82 77M82 79Q82 79 83 78M81 83Q80 81 79 80M79 80Q79 79 79 78M79 80Q77 80 76 79M79 80Q78 79 78 77M81 83Q81 82 81 80M81 80Q82 79 83 78M81 80Q82 79 81 78M81 88Q79 87 77 85M77 85Q76 84 75 83M75 83Q74 82 73 82M75 83Q74 83 73 82M77 85Q76 85 74 84M74 84Q73 83 73 82M74 84Q73 84 72 84M81 88Q82 85 83 83M83 83Q85 83 86 82M86 82Q87 81 88 80M86 82Q87 81 87 79M86 82Q87 82 88 81M83 83Q84 82 85 81M85 81Q86 80 86 79M85 81Q85 80 86 79M77 104Q73 101 69 98M69 98Q68 95 66 93M66 93Q66 91 66 89M66 89Q66 87 67 86M67 86Q67 85 67 84M67 86Q66 85 66 84M66 89Q65 87 65 86M65 86Q66 85 66 84M65 86Q64 85 64 84M65 86Q65 85 65 83M66 93Q64 91 61 90M61 90Q61 89 60 87M60 87Q61 86 60 84M60 87Q60 86 59 85M60 87Q61 86 61 84M61 90Q60 90 58 91M58 91Q57 90 57 90M58 91Q57 92 56 92M58 91Q57 90 56 90M61 90Q61 89 61 87M61 87Q61 85 60 84M61 87Q60 86 59 85M66 93Q65 91 63 89M63 89Q62 88 62 86M62 86Q62 85 61 84M62 86Q61 86 60 85M62 86Q62 85 63 84M63 89Q62 88 60 88M60 88Q60 87 59 85M60 88Q59 88 58 88M60 88Q60 87 59 86M69 98Q66 98 63 99M63 99Q61 99 59 99M59 99Q58 98 57 98M57 98Q57 97 56 96M57 98Q56 98 55 98M57 98Q57 97 56 96M59 99Q58 100 57 101M57 101Q56 101 55 101M57 101Q56 102 55 102M59 99Q58 99 56 99M56 99Q55 99 54 99M56 99Q55 100 54 100M63 99Q61 99 59 99M59 99Q58 99 57 98M57 98Q57 97 57 96M57 98Q56 98 55 98M57 98Q57 97 57 96M59 99Q57 100 56 101M56 101Q55 101 54 101M56 101Q55 102 54 103M56 101Q55 101 54 101M63 99Q62 98 60 97M60 97Q59 96 59 94M59 94Q59 94 59 93M59 94Q59 93 59 92M60 97Q58 97 57 97M57 97Q56 96 55 95M57 97Q56 98 55 98M57 97Q56 96 55 96M60 97Q59 96 58 95M58 95Q57 94 56 94M58 95Q57 95 56 95M58 95Q58 94 58 93M77 104Q81 100 86 97M86 97Q89 99 94 100M94 100Q96 102 99 104M99 104Q100 106 101 109M101 109Q100 110 100 112M101 109Q102 110 104 111M101 109Q101 110 101 112M99 104Q101 103 104 103M104 103Q105 103 107 103M104 103Q104 101 105 100M104 103Q105 103 107 103M94 100Q97 100 100 99M100 99Q103 99 105 99M105 99Q107 99 109 99M105 99Q106 98 108 98M100 99Q102 97 104 95M104 95Q105 96 107 96M104 95Q104 94 105 92M104 95Q105 96 107 96M94 100Q96 101 98 103M98 103Q99 105 99 107M99 107Q99 109 99 111M99 107Q100 109 101 109M98 103Q100 104 102 105M102 105Q102 107 103 108M102 105Q103 105 104 104M98 103Q98 106 97 108M97 108Q97 109 96 110M97 108Q98 110 98 111M97 108Q97 110 96 111M86 97Q88 94 90 90M90 90Q92 88 93 85M93 85Q95 84 97 83M97 83Q98 83 100 84M97 83Q97 82 98 81M93 85Q94 83 96 81M96 81Q98 81 99 81M96 81Q96 80 98 78M96 81Q97 81 99 81M90 90Q90 87 90 84M90 84Q92 82 94 81M94 81Q95 81 97 81M94 81Q94 79 94 78M94 81Q95 81 97 80M90 84Q90 82 89 80M89 80Q89 79 89 78M89 80Q89 79 88 78M90 84Q90 82 90 80M90 80Q90 78 90 76M90 80Q89 78 89 77M90 80Q90 78 89 77M141 24Q146 24 152 25M152 25Q155 28 157 31M157 31Q156 34 155 36M155 36Q154 37 152 38M152 38Q151 37 150 36M152 38Q151 39 151 40M155 36Q156 38 157 40M157 40Q157 41 156 42M157 40Q158 40 159 41M157 40Q157 41 156 42M157 31Q159 33 161 35M161 35Q163 37 165 38M165 38Q165 40 166 41M165 38Q166 39 168 40M161 35Q163 36 165 37M165 37Q166 37 166 38M165 37Q166 36 167 36M152 25Q156 25 160 24M160 24Q162 26 165 28M165 28Q167 30 168 32M168 32Q168 34 168 36M168 32Q170 33 172 33M168 32Q167 34 166 36M165 28Q168 29 170 29M170 29Q172 30 173 31M170 29Q172 30 174 30M170 29Q172 30 174 31M160 24Q162 23 163 21M163 21Q165 22 167 21M167 21Q169 22 170 23M167 21Q168 20 169 19M167 21Q168 22 169 22M163 21Q164 20 165 18M165 18Q165 17 165 15M165 18Q164 17 164 16M141 24Q146 22 152 22M152 22Q156 24 159 25M159 25Q162 26 163 28M163 28Q163 30 163 32M163 32Q163 33 162 33M163 32Q164 32 164 33M163 32Q162 33 162 34M163 28Q165 29 167 30M167 30Q168 31 169 31M167 30Q168 30 169 30M159 25Q162 25 165 26M165 26Q167 27 168 28M168 28Q170 29 170 30M168 28Q170 28 171 28M168 28Q169 29 169 31M165 26Q167 25 169 24M169 24Q170 25 171 26M169 24Q170 23 171 22M159 25Q161 27 162 30M162 30Q161 31 161 32M161 32Q160 33 159 34M161 32Q161 34 161 34M162 30Q164 30 166 31M166 31Q167 32 168 33M166 31Q168 31 169 31M152 22Q156 19 160 17M160 17Q163 17 167 18M167 18Q168 20 169 22M169 22Q168 24 167 26M169 22Q170 23 171 24M169 22Q168 24 167 26M167 18Q169 17 171 16M171 16Q172 15 174 15M171 16Q171 14 173 13M167 18Q169 19 171 20M171 20Q172 22 172 23M171 20Q173 19 175 19M160 17Q162 15 164 13M164 13Q165 11 167 11M167 11Q169 11 171 11M167 11Q168 9 169 8M167 11Q169 11 170 12M164 13Q164 11 166 9M166 9Q167 8 169 7M166 9Q167 8 167 6M141 24Q146 26 152 26M152 26Q155 27 157 29M157 29Q159 31 161 32M161 32Q162 34 163 35M163 35Q164 36 164 37M163 35Q164 35 165 36M161 32Q162 31 164 30M164 30Q165 30 166 29M164 30Q164 29 165 28M157 29Q160 29 162 30M162 30Q163 30 164 32M164 32Q164 33 165 34M164 32Q165 32 166 33M162 30Q163 30 165 29M165 29Q166 30 166 30M165 29Q165 29 166 28M157 29Q158 31 158 33M158 33Q157 34 155 35M155 35Q154 34 153 33M155 35Q155 36 154 37M158 33Q158 35 159 36M159 36Q159 37 158 38M159 36Q160 37 160 38M152 26Q155 25 159 24M159 24Q161 24 163 23M163 23Q165 23 167 24M167 24Q167 25 168 26M167 24Q168 24 169 23M163 23Q164 22 164 20M164 20Q165 19 166 18M164 20Q164 19 164 17M159 24Q159 21 160 18M160 18Q160 16 160 14M160 14Q161 12 162 11M160 14Q159 12 158 11M160 14Q162 13 163 12M160 18Q158 16 156 15M156 15Q156 13 155 12M156 15Q154 14 153 14M160 18Q160 16 160 13M160 13Q161 12 162 11M160 13Q159 12 158 11M133 5Q139 1 146 -1M146 -1Q152 -1 157 -1M157 -1Q160 1 163 3M163 3Q164 4 165 6M165 6Q166 8 167 9M165 6Q166 7 168 8M163 3Q165 2 167 0M167 0Q169 0 170 0M167 0Q168 -0 170 -1M157 -1Q160 -3 164 -4M164 -4Q166 -3 169 -2M169 -2Q170 -1 171 -1M169 -2Q170 -2 172 -2M169 -2Q170 -0 171 1M164 -4Q166 -6 167 -9M167 -9Q168 -11 170 -12M167 -9Q167 -11 167 -13M167 -9Q168 -10 170 -12M164 -4Q166 -4 169 -5M169 -5Q170 -4 172 -4M169 -5Q170 -6 171 -7M169 -5Q170 -4 171 -4M146 -1Q149 -5 150 -9M150 -9Q153 -11 156 -14M156 -14Q158 -14 160 -14M160 -14Q161 -13 163 -12M160 -14Q161 -15 162 -16M156 -14Q155 -16 154 -19M154 -19Q153 -20 153 -22M154 -19Q153 -20 152 -22M150 -9Q151 -12 152 -15M152 -15Q153 -16 155 -18M155 -18Q156 -17 157 -17M155 -18Q156 -19 157 -20M155 -18Q156 -18 157 -19M152 -15Q152 -17 152 -19M152 -19Q153 -20 153 -21M152 -19Q151 -20 151 -21M133 5Q131 -2 131 -9M131 -9Q131 -14 133 -19M133 -19Q137 -20 140 -21M140 -21Q143 -22 146 -23M146 -23Q148 -24 150 -24M146 -23Q147 -25 148 -27M140 -21Q142 -23 145 -24M145 -24Q147 -25 148 -26M145 -24Q145 -26 145 -28M133 -19Q135 -22 135 -25M135 -25Q137 -26 139 -28M139 -28Q141 -28 142 -29M139 -28Q140 -29 141 -31M135 -25Q135 -27 134 -30M134 -30Q134 -31 135 -33M134 -30Q133 -31 131 -31M133 -19Q137 -20 141 -21M141 -21Q144 -20 146 -19M146 -19Q147 -17 148 -15M146 -19Q148 -18 150 -17M146 -19Q147 -17 148 -15M141 -21Q143 -23 145 -24M145 -24Q146 -24 147 -23M145 -24Q145 -26 146 -27M145 -24Q146 -25 148 -26M131 -9Q130 -13 128 -18M128 -18Q128 -21 127 -23M127 -23Q127 -25 128 -27M128 -27Q128 -28 128 -29M128 -27Q127 -28 127 -29M127 -23Q126 -24 124 -25M124 -25Q123 -26 123 -27M124 -25Q123 -25 122 -25M127 -23Q127 -26 127 -28M127 -28Q128 -29 129 -30M127 -28Q126 -29 125 -30M128 -18Q126 -19 123 -21M123 -21Q123 -23 122 -25M122 -25Q123 -27 124 -28M122 -25Q121 -26 120 -27M123 -21Q121 -21 119 -21M119 -21Q118 -22 117 -22M119 -21Q118 -21 117 -21M123 -21Q123 -22 122 -24M122 -24Q121 -25 122 -27M122 -24Q121 -25 120 -26M167 62Q172 66 175 70M175 70Q177 73 178 76M178 76Q178 79 177 81M177 81Q175 82 174 83M174 83Q172 84 171 84M174 83Q173 84 172 85M174 83Q172 83 171 84M177 81Q176 83 176 85M176 85Q175 85 174 86M176 85Q176 86 175 87M177 81Q175 82 174 83M174 83Q173 84 172 85M174 83Q174 85 174 86M178 76Q181 78 183 79M183 79Q183 81 184 82M184 82Q185 84 184 85M184 82Q185 83 186 84M184 82Q185 83 186 85M183 79Q185 79 187 79M187 79Q188 80 189 80M187 79Q188 79 190 79M187 79Q188 80 189 81M175 70Q179 72 182 75M182 75Q183 77 184 80M184 80Q185 81 185 83M185 83Q185 84 184 86M185 83Q186 84 187 84M184 80Q185 81 186 82M186 82Q187 83 188 84M186 82Q187 83 188 84M184 80Q184 82 183 83M183 83Q183 85 182 86M183 83Q184 85 184 86M182 75Q185 76 189 76M189 76Q191 76 193 77M193 77Q194 78 195 79M193 77Q194 78 195 78M193 77Q194 78 195 80M189 76Q191 74 193 73M193 73Q194 72 196 72M193 73Q194 71 195 70M167 62Q173 61 179 61M179 61Q184 62 188 62M188 62Q190 63 193 65M193 65Q194 66 195 67M195 67Q196 68 197 69M195 67Q197 67 198 67M193 65Q195 65 197 66M197 66Q199 67 200 68M197 66Q199 66 200 67M188 62Q191 60 193 58M193 58Q195 57 198 57M198 57Q199 58 200 59M198 57Q199 57 201 56M198 57Q199 58 200 58M193 58Q195 57 197 56M197 56Q198 57 200 57M197 56Q198 55 199 54M188 62Q191 62 194 63M194 63Q195 65 197 66M197 66Q198 68 200 69M197 66Q199 66 201 66M197 66Q198 68 198 70M194 63Q196 63 198 62M198 62Q200 62 202 63M198 62Q199 61 200 60M179 61Q183 59 187 58M187 58Q190 58 193 58M193 58Q196 58 198 58M198 58Q200 59 202 59M198 58Q200 58 201 57M193 58Q195 56 196 55M196 55Q198 54 199 54M196 55Q196 53 196 51M193 58Q195 59 198 59M198 59Q199 59 201 59M198 59Q199 58 201 58M187 58Q188 55 189 53M189 53Q191 51 192 50M192 50Q194 50 196 50M192 50Q192 48 192 47M189 53Q189 51 189 49M189 49Q190 48 191 47M189 49Q188 48 187 47M167 62Q172 67 177 71M177 71Q179 75 180 79M180 79Q179 82 179 86M179 86Q178 87 176 89M176 89Q175 90 174 91M176 89Q176 90 176 92M176 89Q175 90 174 90M179 86Q179 88 181 91M181 91Q180 92 180 94M181 91Q182 92 184 93M180 79Q181 82 181 85M181 85Q181 86 180 88M180 88Q179 89 178 90M180 88Q181 90 182 91M180 88Q180 90 179 91M181 85Q183 86 185 88M185 88Q186 89 187 91M185 88Q186 89 187 89M177 71Q182 70 187 67M187 67Q190 67 193 67M193 67Q194 67 196 68M196 68Q197 69 197 70M196 68Q198 68 199 68M196 68Q197 69 198 70M193 67Q195 66 197 66M197 66Q198 66 200 65M197 66Q198 65 200 65M187 67Q188 65 190 62M190 62Q192 60 193 59M193 59Q195 59 197 59M193 59Q194 58 195 56M190 62Q191 60 191 58M191 58Q192 57 193 55M191 58Q190 57 189 56M160 47Q166 45 173 43M173 43Q178 44 183 44M183 44Q186 44 190 44M190 44Q192 45 195 45M195 45Q196 46 198 46M195 45Q196 44 197 43M190 44Q191 42 193 41M193 41Q194 39 195 38M193 41Q193 39 193 38M183 44Q185 41 187 37M187 37Q190 36 193 35M193 35Q195 35 197 34M193 35Q193 33 195 31M187 37Q186 35 186 33M186 33Q186 31 187 29M186 33Q184 32 182 31M187 37Q189 36 192 35M192 35Q194 35 196 35M192 35Q193 33 194 32M173 43Q176 39 179 35M179 35Q182 36 185 36M185 36Q187 38 188 40M188 40Q188 41 188 42M188 40Q189 40 190 41M188 40Q188 41 189 42M185 36Q186 35 187 34M187 34Q189 33 190 33M187 34Q188 32 189 31M179 35Q178 32 177 29M177 29Q177 27 177 25M177 25Q177 23 178 22M177 25Q176 23 175 22M177 29Q174 28 172 26M172 26Q172 24 171 22M172 26Q171 26 169 26M179 35Q182 34 185 33M185 33Q187 33 189 34M189 34Q190 36 191 37M189 34Q191 34 193 35M185 33Q185 30 185 28M185 28Q187 27 188 26M185 28Q184 27 184 26M185 28Q186 26 188 25M173 43Q177 43 182 44M182 44Q183 47 186 49M186 49Q186 52 186 54M186 54Q185 56 185 57M186 54Q187 56 188 57M186 49Q188 50 190 51M190 51Q191 52 192 53M190 51Q191 50 192 49M186 49Q187 51 188 53M188 53Q188 55 188 58M188 53Q190 54 192 54M182 44Q185 45 188 45M188 45Q190 46 192 47M192 47Q193 47 194 48M192 47Q193 47 195 46M188 45Q190 44 191 43M191 43Q192 44 194 45M191 43Q192 42 192 41M160 47Q162 41 164 35M164 35Q166 32 169 29M169 29Q171 28 174 27M174 27Q176 26 177 26M177 26Q179 26 180 26M177 26Q179 25 180 25M177 26Q179 26 180 26M174 27Q174 25 175 24M175 24Q176 23 177 22M175 24Q175 23 175 22M174 27Q175 27 176 26M176 26Q177 26 178 25M176 26Q177 26 178 25M169 29Q170 26 171 24M171 24Q173 23 175 22M175 22Q176 23 177 24M175 22Q176 21 177 21M171 24Q171 21 171 19M171 19Q172 18 173 17M171 19Q170 18 169 17M171 19Q172 18 173 17M164 35Q163 31 162 27M162 27Q162 25 164 22M164 22Q165 21 167 20M167 20Q168 21 169 21M167 20Q167 19 167 18M167 20Q168 20 169 20M164 22Q164 21 164 19M164 19Q166 18 167 18M164 19Q164 18 163 17M162 27Q159 27 156 27M156 27Q154 26 152 25M152 25Q152 24 151 22M152 25Q151 24 150 24M156 27Q154 27 153 28M153 28Q151 28 150 27M153 28Q152 29 151 30M153 28Q151 27 150 27M162 27Q161 24 162 21M162 21Q163 19 165 17M165 17Q166 17 168 16M165 17Q164 16 164 14M162 21Q162 19 162 16M162 16Q163 15 165 14M162 16Q161 15 159 14M162 21Q163 19 165 17M165 17Q166 16 167 15M165 17Q164 15 163 14M160 47Q164 43 169 38M169 38Q172 34 175 31M175 31Q179 31 183 30M183 30Q186 31 188 31M188 31Q190 32 192 33M188 31Q190 31 191 30M188 31Q189 33 190 34M183 30Q185 28 186 26M186 26Q187 25 188 23M186 26Q186 24 186 22M186 26Q187 25 188 24M175 31Q176 28 178 24M178 24Q181 23 183 22M183 22Q185 22 187 22M183 22Q185 21 187 20M178 24Q178 21 178 18M178 18Q179 17 181 16M178 18Q177 17 176 15M169 38Q170 33 172 28M172 28Q175 26 179 24M179 24Q182 25 186 26M186 26Q187 27 189 28M186 26Q188 26 190 26M179 24Q182 22 185 21M185 21Q187 19 190 19M185 21Q186 19 188 17M185 21Q187 20 189 20M172 28Q172 24 172 20M172 20Q175 18 178 17M178 17Q180 17 181 18M178 17Q178 15 178 13M178 17Q180 17 183 17M172 20Q173 17 173 14M173 14Q174 13 176 13M173 14Q173 13 173 11M169 38Q173 37 176 34M176 34Q179 35 182 36M182 36Q184 37 186 37M186 37Q187 38 189 39M186 37Q187 37 189 37M182 36Q184 35 187 34M187 34Q188 35 189 36M187 34Q187 33 187 31M182 36Q184 37 186 38M186 38Q187 39 188 41M186 38Q188 38 189 38M186 38Q186 40 186 42M176 34Q179 33 181 31M181 31Q183 32 184 33M184 33Q185 35 185 36M184 33Q186 34 187 34M184 33Q185 34 185 36M181 31Q182 29 183 27M183 27Q184 26 185 25M183 27Q183 26 183 24M183 27Q184 26 186 25M181 31Q183 31 185 31M185 31Q187 31 188 31M185 31Q186 29 187 28M176 34Q179 35 182 34M182 34Q184 35 186 37M186 37Q186 38 186 39M186 37Q187 37 188 38M182 34Q184 33 185 31M185 31Q185 29 186 28M185 31Q184 29 184 27M185 31Q186 29 187 28M162 69Q165 74 166 79M166 79Q165 82 164 85M164 85Q163 88 161 89M161 89Q159 90 157 90M157 90Q155 89 154 88M157 90Q155 91 154 91M161 89Q160 91 161 92M161 92Q160 93 159 93M161 92Q161 93 162 94M161 89Q159 90 158 91M158 91Q157 91 156 91M158 91Q158 93 157 94M164 85Q164 88 164 90M164 90Q164 91 163 93M163 93Q163 93 162 94M163 93Q164 94 164 95M164 90Q165 91 165 93M165 93Q165 94 164 95M165 93Q166 93 167 94M165 93Q165 94 165 95M166 79Q168 81 170 84M170 84Q170 87 170 89M170 89Q170 91 169 93M169 93Q168 93 167 94M169 93Q169 94 169 96M170 89Q170 92 170 94M170 94Q168 95 167 95M170 94Q170 95 171 96M170 84Q172 85 174 86M174 86Q175 86 176 87M176 87Q177 88 177 89M176 87Q177 87 178 87M176 87Q177 88 177 88M174 86Q176 85 177 86M177 86Q178 86 180 86M177 86Q178 85 180 86M174 86Q176 86 177 86M177 86Q178 87 179 87M177 86Q179 86 180 85M166 79Q166 82 167 86M167 86Q166 88 166 91M166 91Q166 93 166 94M166 94Q166 96 166 97M166 94Q166 96 167 97M166 91Q167 92 168 94M168 94Q168 95 169 96M168 94Q169 94 170 95M166 91Q165 92 164 93M164 93Q164 94 163 95M164 93Q165 94 164 96M164 93Q163 94 162 94M167 86Q169 88 172 89M172 89Q174 90 176 91M176 91Q176 93 177 94M176 91Q177 92 179 92M176 91Q177 93 178 94M172 89Q174 89 177 89M177 89Q178 88 180 89M177 89Q178 88 179 87M167 86Q167 89 167 92M167 92Q167 94 166 96M166 96Q166 97 165 98M166 96Q166 97 166 99M167 92Q168 94 169 96M169 96Q168 98 167 100M169 96Q170 97 171 98M167 92Q166 94 165 96M165 96Q164 97 163 98M165 96Q165 97 165 99M165 96Q164 96 162 97M162 69Q167 68 173 68M173 68Q177 71 180 74M180 74Q182 77 184 79M184 79Q185 80 186 82M186 82Q187 84 188 85M186 82Q188 82 189 83M184 79Q187 79 189 80M189 80Q190 81 191 82M189 80Q190 80 192 79M184 79Q184 81 184 83M184 83Q183 83 183 84M184 83Q184 84 183 86M180 74Q183 75 186 76M186 76Q188 76 190 77M190 77Q191 78 192 79M190 77Q191 76 193 76M186 76Q189 76 191 76M191 76Q192 78 193 79M191 76Q193 76 195 76M173 68Q175 66 178 64M178 64Q180 64 183 63M183 63Q185 63 187 62M187 62Q188 62 189 62M187 62Q188 61 189 60M183 63Q184 62 185 60M185 60Q186 60 188 60M185 60Q185 59 186 58M185 60Q186 60 187 59M183 63Q185 63 186 63M186 63Q188 64 188 65M186 63Q188 63 189 63M178 64Q179 61 180 59M180 59Q181 58 183 58M183 58Q184 58 185 59M183 58Q184 57 186 57M183 58Q184 58 186 58M180 59Q179 57 179 55M179 55Q180 54 181 54M179 55Q179 54 178 53M108 190Q113 193 118 194M118 194Q121 196 125 198M125 198Q126 200 129 202M129 202Q130 204 131 206M131 206Q130 208 130 210M131 206Q133 207 134 208M131 206Q131 208 132 209M129 202Q131 202 133 202M133 202Q135 204 135 205M133 202Q135 202 136 201M129 202Q130 205 130 207M130 207Q129 209 129 211M130 207Q131 209 132 211M130 207Q130 209 130 211M125 198Q127 198 130 198M130 198Q132 199 134 198M134 198Q136 199 137 200M134 198Q135 197 136 197M130 198Q132 197 134 196M134 196Q136 196 137 196M134 196Q135 194 135 193M130 198Q132 199 133 200M133 200Q134 201 135 202M133 200Q135 200 136 200M133 200Q134 201 134 202M118 194Q121 193 123 191M123 191Q126 190 128 189M128 189Q129 189 131 188M131 188Q132 189 133 189M131 188Q132 188 134 187M128 189Q129 188 129 187M129 187Q130 186 131 186M129 187Q129 186 129 185M129 187Q130 186 131 186M123 191Q124 188 124 185M124 185Q125 183 126 182M126 182Q128 181 129 180M126 182Q127 180 128 179M124 185Q122 184 120 183M120 183Q119 181 118 181M120 183Q119 182 117 182M123 191Q126 189 128 188M128 188Q130 188 132 187M132 187Q134 187 135 187M132 187Q134 186 135 186M132 187Q134 187 135 187M128 188Q129 186 130 185M130 185Q131 184 132 183M130 185Q131 184 131 182M130 185Q132 184 132 183M108 190Q113 187 116 183M116 183Q121 182 125 182M125 182Q128 183 130 184M130 184Q131 186 131 188M131 188Q131 189 131 190M131 188Q132 189 132 190M130 184Q132 184 134 184M134 184Q135 185 135 186M134 184Q134 182 134 181M125 182Q128 181 130 179M130 179Q132 179 134 177M134 177Q136 177 137 177M134 177Q135 176 136 175M134 177Q135 178 137 178M130 179Q132 178 134 177M134 177Q136 176 138 175M134 177Q134 175 134 173M134 177Q136 177 138 177M116 183Q117 179 118 175M118 175Q120 175 123 175M123 175Q124 176 126 177M126 177Q126 178 126 179M126 177Q127 177 128 177M126 177Q126 178 127 179M123 175Q125 174 126 173M126 173Q128 173 129 173M126 173Q127 172 129 172M126 173Q128 173 129 174M118 175Q119 173 120 171M120 171Q121 170 122 169M122 169Q123 169 124 168M122 169Q123 168 123 167M120 171Q120 169 120 167M120 167Q121 166 121 165M120 167Q120 166 119 165M105 184Q111 182 118 180M118 180Q122 182 125 184M125 184Q126 187 126 190M126 190Q126 193 127 195M127 195Q126 196 125 197M127 195Q128 196 129 197M126 190Q127 192 128 194M128 194Q128 196 128 198M128 194Q130 195 131 195M126 190Q125 192 124 194M124 194Q123 195 121 196M124 194Q123 196 123 197M124 194Q122 194 120 194M125 184Q129 184 132 184M132 184Q134 185 136 186M136 186Q137 187 137 189M136 186Q137 184 138 183M136 186Q137 187 138 188M132 184Q134 183 136 182M136 182Q138 183 140 183M136 182Q137 180 137 179M118 180Q122 178 126 176M126 176Q129 178 131 180M131 180Q132 182 132 184M132 184Q133 186 133 187M132 184Q133 186 134 187M131 180Q133 180 135 180M135 180Q136 181 137 182M135 180Q136 180 138 180M126 176Q129 175 132 174M132 174Q135 174 137 174M137 174Q138 176 139 177M137 174Q139 174 141 174M132 174Q133 172 135 170M135 170Q136 170 138 169M135 170Q135 169 135 167M135 170Q136 169 137 168M126 176Q129 177 132 178M132 178Q133 179 134 181M134 181Q134 182 134 183M134 181Q135 182 136 183M134 181Q134 182 135 184M132 178Q134 177 136 177M136 177Q137 177 138 178M136 177Q137 176 138 175M136 177Q137 177 138 178M105 184Q108 179 111 173M111 173Q115 172 119 172M119 172Q122 173 124 174M124 174Q126 176 126 178M126 178Q126 180 126 182M126 178Q128 179 129 179M126 178Q126 180 125 181M124 174Q126 175 129 176M129 176Q130 177 130 179M129 176Q130 175 131 174M124 174Q126 176 127 178M127 178Q128 179 129 181M127 178Q129 178 131 178M119 172Q120 170 122 168M122 168Q124 167 126 166M126 166Q128 167 129 168M126 166Q127 165 128 165M126 166Q128 166 129 167M122 168Q124 166 125 166M125 166Q127 166 128 166M125 166Q126 164 127 163M122 168Q124 167 126 166M126 166Q128 167 129 167M126 166Q128 165 128 163M111 173Q109 169 106 165M106 165Q107 161 108 158M108 158Q110 155 111 153M111 153Q113 151 115 150M111 153Q111 151 110 149M108 158Q109 155 109 152M109 152Q110 150 111 149M109 152Q108 151 106 149M106 165Q102 164 98 165M98 165Q96 164 93 164M93 164Q92 162 92 160M93 164Q92 163 90 162M98 165Q96 166 93 168M93 168Q91 168 89 168M93 168Q93 170 93 172M127 151Q129 156 132 160M132 160Q132 164 131 168M131 168Q129 170 127 173M127 173Q125 174 123 174M123 174Q122 174 121 173M123 174Q122 175 121 176M127 173Q128 174 127 176M127 176Q127 177 127 178M127 176Q127 177 127 178M127 176Q127 177 126 178M127 173Q126 174 125 175M125 175Q123 175 122 175M125 175Q124 176 124 177M131 168Q132 170 133 173M133 173Q133 174 133 176M133 176Q132 178 132 179M133 176Q134 178 134 179M133 173Q134 173 136 175M136 175Q136 176 136 177M136 175Q136 175 138 175M131 168Q129 170 127 173M127 173Q126 174 125 175M125 175Q124 176 123 177M125 175Q125 177 124 178M127 173Q127 174 126 176M126 176Q125 176 124 177M126 176Q127 178 126 179M126 176Q125 177 125 178M127 173Q126 174 125 175M125 175Q123 175 122 175M125 175Q124 176 123 177M132 160Q135 163 139 165M139 165Q140 167 142 169M142 169Q143 172 143 174M143 174Q142 176 141 178M143 174Q144 176 145 177M142 169Q145 170 147 171M147 171Q148 172 150 173M147 171Q149 171 151 172M147 171Q148 172 149 173M139 165Q142 164 145 165M145 165Q147 166 149 167M149 167Q149 169 150 170M149 167Q151 166 152 165M145 165Q147 165 149 165M149 165Q150 165 151 166M149 165Q151 164 152 164M127 151Q133 152 139 154M139 154Q140 157 143 160M143 160Q144 163 145 166M145 166Q145 168 146 170M146 170Q145 171 145 173M146 170Q146 171 146 172M145 166Q147 167 148 169M148 169Q149 170 150 171M148 169Q149 170 150 171M148 169Q148 170 148 172M143 160Q146 160 148 159M148 159Q150 158 152 157M152 157Q154 158 155 158M152 157Q153 156 154 155M148 159Q150 157 151 156M151 156Q153 156 154 156M151 156Q151 155 152 153M148 159Q150 158 152 158M152 158Q153 159 154 160M152 158Q153 158 154 156M139 154Q143 153 148 154M148 154Q151 156 153 158M153 158Q154 160 155 162M155 162Q155 164 154 165M155 162Q156 163 157 164M153 158Q155 159 158 160M158 160Q159 162 159 164M158 160Q159 160 161 161M158 160Q159 162 160 164M153 158Q153 160 154 162M154 162Q154 164 155 165M154 162Q155 163 155 164M148 154Q150 153 153 150M153 150Q154 151 156 152M156 152Q157 153 158 154M156 152Q158 152 159 151M153 150Q154 149 155 146M155 146Q157 145 159 144M155 146Q155 145 154 143M148 154Q151 155 153 157M153 157Q154 159 156 161M156 161Q155 162 156 164M156 161Q157 162 158 163M153 157Q155 158 156 159M156 159Q157 160 158 161M156 159Q157 159 159 159M156 159Q157 160 158 161M153 157Q153 159 154 161M154 161Q154 163 154 164M154 161Q155 162 156 163M154 161Q154 162 153 163M136 134Q143 133 151 130M151 130Q156 130 161 131M161 131Q165 131 169 132M169 132Q172 135 173 137M173 137Q173 140 171 142M173 137Q175 139 176 140M169 132Q172 132 174 131M174 131Q176 132 177 132M174 131Q175 130 175 128M174 131Q176 131 178 131M161 131Q165 129 168 128M168 128Q171 129 173 129M173 129Q174 130 176 131M173 129Q175 128 176 127M168 128Q170 126 172 124M172 124Q174 124 176 125M172 124Q173 123 174 122M168 128Q171 129 173 129M173 129Q175 130 176 131M173 129Q175 128 176 128M161 131Q165 133 167 136M167 136Q168 139 167 142M167 142Q165 144 164 146M167 142Q168 144 170 145M167 136Q169 138 171 140M171 140Q171 143 172 145M171 140Q173 140 175 140M151 130Q156 128 160 124M160 124Q165 122 168 120M168 120Q171 118 174 116M174 116Q176 115 179 115M174 116Q175 114 175 111M168 120Q171 118 173 116M173 116Q175 116 177 115M173 116Q174 114 175 113M173 116Q175 116 177 116M168 120Q171 120 174 120M174 120Q176 121 178 122M174 120Q176 120 178 120M160 124Q161 120 163 116M163 116Q165 113 166 110M166 110Q167 109 169 108M166 110Q166 108 166 106M163 116Q162 113 162 110M162 110Q163 109 164 107M162 110Q161 109 159 108M151 130Q155 129 160 129M160 129Q163 130 166 130M166 130Q168 131 170 133M170 133Q171 134 171 135M170 133Q171 133 172 134M170 133Q171 134 172 135M166 130Q169 129 172 129M172 129Q173 129 175 129M172 129Q173 128 174 127M160 129Q163 126 166 125M166 125Q169 126 171 127M171 127Q173 128 174 129M171 127Q173 127 174 128M166 125Q167 123 166 121M166 121Q168 119 169 118M166 121Q165 119 164 118M166 121Q167 119 167 118M136 134Q141 129 149 126M149 126Q153 125 158 124M158 124Q161 126 164 129M164 129Q165 131 165 134M165 134Q164 136 165 138M165 134Q165 136 165 137M164 129Q167 130 170 130M170 130Q172 130 174 131M170 130Q172 129 174 128M158 124Q161 123 164 121M164 121Q166 120 168 119M168 119Q169 120 171 120M168 119Q169 119 171 118M164 121Q166 119 167 117M167 117Q169 117 170 117M167 117Q168 116 169 114M158 124Q162 125 166 126M166 126Q167 128 168 130M168 130Q168 132 168 134M168 130Q170 131 171 131M168 130Q169 132 170 134M166 126Q169 126 171 126M171 126Q173 126 175 125M171 126Q173 125 175 124M166 126Q168 128 169 130M169 130Q170 131 171 132M169 130Q171 131 172 132M149 126Q152 123 155 119M155 119Q158 119 162 120M162 120Q164 122 166 123M166 123Q167 124 168 126M166 123Q168 124 169 125M162 120Q164 120 166 119M166 119Q168 119 170 119M166 119Q166 117 167 115M155 119Q156 115 158 112M158 112Q160 112 163 112M163 112Q165 112 166 113M163 112Q165 111 167 111M163 112Q164 113 165 113M158 112Q157 110 156 107M156 107Q157 106 157 104M156 107Q154 106 153 105M158 112Q160 109 161 107M161 107Q163 106 165 105M161 107Q161 105 160 103M136 134Q143 136 149 139M149 139Q152 143 156 147M156 147Q157 151 157 155M157 155Q156 158 155 160M155 160Q154 161 152 162M155 160Q156 162 156 164M157 155Q159 156 161 158M161 158Q162 160 164 161M161 158Q163 159 165 159M156 147Q158 149 160 152M160 152Q160 154 159 157M159 157Q159 158 159 160M159 157Q160 158 160 159M160 152Q161 154 162 156M162 156Q162 157 162 159M162 156Q163 157 163 158M156 147Q157 151 159 155M159 155Q158 158 159 161M159 161Q158 164 157 166M159 161Q160 163 161 165M159 155Q161 157 163 158M163 158Q163 160 164 162M163 158Q165 159 166 161M149 139Q154 137 160 136M160 136Q163 137 166 137M166 137Q169 138 171 140M171 140Q171 142 172 143M171 140Q172 140 174 140M166 137Q169 135 171 134M171 134Q172 133 173 132M171 134Q171 132 171 130M171 134Q172 132 173 131M166 137Q169 138 171 140M171 140Q171 141 172 142M171 140Q173 139 174 140M160 136Q163 134 166 132M166 132Q169 131 172 131M172 131Q174 132 176 132M172 131Q173 130 175 129M172 131Q173 133 175 134M166 132Q168 130 169 128M169 128Q171 127 172 126M169 128Q170 126 171 124M50 241Q50 246 51 251M51 251Q50 254 48 257M48 257Q46 257 44 258M44 258Q42 258 40 258M44 258Q42 260 41 261M48 257Q49 259 49 261M49 261Q49 262 49 264M49 261Q49 262 49 264M48 257Q47 259 47 262M47 262Q46 264 46 266M47 262Q48 264 49 266M47 262Q46 263 45 265M51 251Q53 253 56 255M56 255Q57 257 58 260M58 260Q57 262 57 264M58 260Q59 261 60 262M58 260Q57 262 56 263M56 255Q58 256 60 257M60 257Q61 258 62 260M60 257Q62 257 64 257M50 241Q53 244 57 245M57 245Q59 248 61 251M61 251Q61 253 60 255M60 255Q59 256 58 258M60 255Q60 257 60 259M61 251Q63 252 64 254M64 254Q64 256 64 258M64 254Q65 255 66 256M57 245Q60 245 63 243M63 243Q65 243 67 242M67 242Q68 242 69 241M67 242Q67 241 68 239M63 243Q64 241 65 240M65 240Q67 239 68 240M65 240Q66 238 66 237M57 245Q59 248 61 251M61 251Q61 253 62 255M62 255Q61 256 60 257M62 255Q63 256 65 257M61 251Q63 251 65 252M65 252Q66 253 67 255M65 252Q66 252 67 253M50 241Q48 246 45 250M45 250Q42 252 39 255M39 255Q37 255 34 255M34 255Q33 254 31 254M34 255Q33 255 32 256M39 255Q39 257 38 260M38 260Q37 261 36 263M38 260Q39 262 41 263M45 250Q45 253 44 256M44 256Q44 258 43 261M43 261Q42 262 42 264M43 261Q43 262 43 264M43 261Q42 262 40 263M44 256Q46 258 48 260M48 260Q48 261 48 263M48 260Q49 260 51 260M48 260Q48 261 49 262M58 228Q61 230 64 231M64 231Q66 232 69 232M69 232Q69 234 69 235M69 235Q69 236 68 237M69 235Q70 236 71 236M69 235Q69 236 68 236M69 232Q70 231 72 231M72 231Q73 231 75 231M72 231Q73 230 74 229M72 231Q73 231 74 231M64 231Q66 230 69 230M69 230Q71 231 72 231M72 231Q73 232 74 233M72 231Q73 231 74 230M72 231Q73 232 73 233M69 230Q70 229 71 228M71 228Q72 228 73 228M71 228Q72 228 73 227M71 228Q72 228 73 228M58 228Q61 226 63 223M63 223Q65 224 67 224M67 224Q69 224 70 225M70 225Q70 227 70 228M70 225Q71 226 72 226M67 224Q69 223 70 223M70 223Q71 224 71 225M70 223Q71 223 72 223M67 224Q68 224 70 225M70 225Q70 226 70 227M70 225Q71 226 72 226M63 223Q64 221 64 219M64 219Q65 217 66 216M66 216Q67 215 68 215M66 216Q66 215 66 214M66 216Q67 215 67 215M64 219Q64 218 62 217M62 217Q62 216 62 215M62 217Q61 217 60 216M64 219Q66 218 67 217M67 217Q68 217 69 216M67 217Q67 216 68 215M67 217Q68 217 69 216M63 223Q65 222 66 220M66 220Q68 219 69 218M69 218Q71 218 72 218M69 218Q71 218 72 217M66 220Q66 218 67 216M67 216Q68 215 68 214M67 216Q66 215 66 213M67 216Q67 215 68 214M66 220Q68 219 70 218M70 218Q71 218 72 218M70 218Q71 218 72 217M70 218Q71 219 73 219M58 228Q61 230 64 232M64 232Q64 234 63 236M63 236Q61 237 60 238M60 238Q58 237 57 237M60 238Q59 239 59 240M60 238Q59 237 58 237M63 236Q64 238 65 239M65 239Q65 240 65 242M65 239Q66 239 67 239M64 232Q66 232 69 231M69 231Q71 233 72 235M72 235Q71 236 71 237M72 235Q73 235 75 236M69 231Q71 230 73 230M73 230Q75 229 77 229M73 230Q75 228 76 227M69 231Q71 233 72 234M72 234Q72 236 72 237M72 234Q73 235 74 237M67 221Q70 225 74 229M74 229Q73 232 71 236M71 236Q70 238 68 240M68 240Q67 240 65 240M68 240Q69 242 69 244M71 236Q72 238 72 241M72 241Q72 242 71 244M72 241Q73 242 75 242M71 236Q69 237 67 239M67 239Q66 239 64 239M67 239Q67 241 67 243M74 229Q78 230 82 231M82 231Q83 233 84 235M84 235Q84 237 83 239M84 235Q86 236 88 237M82 231Q84 230 87 230M87 230Q88 231 90 231M87 230Q88 229 90 228M67 221Q72 219 77 218M77 218Q81 218 85 219M85 219Q87 221 89 223M89 223Q89 225 89 228M89 223Q91 225 92 227M85 219Q88 219 91 219M91 219Q93 220 95 221M91 219Q93 217 94 215M77 218Q80 216 83 213M83 213Q86 212 89 213M89 213Q90 215 92 216M89 213Q91 212 94 211M83 213Q84 210 85 208M85 208Q86 206 87 204M85 208Q85 206 85 204M60 208Q63 206 67 204M67 204Q69 204 72 203M72 203Q73 203 75 202M75 202Q76 203 77 202M75 202Q76 201 77 200M75 202Q76 202 77 202M72 203Q73 201 74 199M74 199Q75 198 76 197M74 199Q75 198 75 197M67 204Q69 203 71 201M71 201Q73 201 75 201M75 201Q76 202 77 203M75 201Q77 201 78 201M71 201Q72 199 72 197M72 197Q72 196 73 194M72 197Q71 196 70 195M60 208Q61 204 60 200M60 200Q61 198 61 195M61 195Q61 193 62 191M62 191Q64 190 65 190M62 191Q62 190 62 188M61 195Q60 193 59 191M59 191Q59 189 59 188M59 191Q57 190 56 189M59 191Q58 190 58 188M60 200Q60 198 59 195M59 195Q59 193 60 192M60 192Q61 191 62 190M60 192Q60 191 59 190M60 192Q61 191 62 190M59 195Q57 194 55 193M55 193Q54 192 53 191M55 193Q54 194 52 194M59 195Q59 193 59 191M59 191Q60 190 61 189M59 191Q59 190 58 188M50 46Q50 52 51 58M51 58Q49 62 48 67M48 67Q46 70 45 73M45 73Q42 74 40 76M45 73Q44 75 43 78M48 67Q50 70 52 73M52 73Q52 76 53 78M52 73Q55 75 57 75M52 73Q53 76 53 79M51 58Q54 62 56 66M56 66Q56 69 58 72M58 72Q58 75 59 77M58 72Q60 74 62 75M56 66Q59 67 63 69M63 69Q63 71 64 74M63 69Q65 69 67 69M51 58Q49 62 48 66M48 66Q44 68 41 70M41 70Q39 71 37 72M41 70Q39 71 36 73M41 70Q39 71 36 71M48 66Q49 69 51 72M51 72Q52 75 52 77M51 72Q53 74 54 75M48 66Q46 69 44 72M44 72Q43 74 41 75M44 72Q45 74 45 76M50 46Q54 49 57 53M57 53Q59 56 61 59M61 59Q61 62 62 65M62 65Q61 66 60 68M62 65Q63 66 64 67M62 65Q60 66 59 67M61 59Q62 61 64 62M64 62Q64 64 63 65M64 62Q66 62 68 63M61 59Q61 62 61 64M61 64Q60 65 59 67M61 64Q62 65 64 66M57 53Q60 53 64 53M64 53Q66 54 69 55M69 55Q71 56 73 58M69 55Q71 54 73 53M69 55Q71 57 72 59M64 53Q66 52 69 51M69 51Q71 51 73 51M69 51Q71 50 73 49M57 53Q57 57 58 61M58 61Q57 63 56 66M56 66Q55 68 52 69M56 66Q58 68 58 70M58 61Q59 62 61 64M61 64Q61 66 62 68M61 64Q63 64 65 64M58 61Q57 63 55 65M55 65Q54 66 52 67M55 65Q54 67 54 68M55 65Q54 65 52 66M57 39Q61 43 65 46M65 46Q67 50 68 53M68 53Q67 56 66 58M66 58Q65 60 63 62M66 58Q66 60 67 62M68 53Q70 54 72 56M72 56Q73 57 74 59M72 56Q74 55 75 54M68 53Q67 55 67 58M67 58Q67 60 66 61M67 58Q69 59 71 60M65 46Q69 45 73 44M73 44Q76 44 79 45M79 45Q79 47 80 49M79 45Q81 46 83 47M73 44Q75 42 78 40M78 40Q80 39 82 38M78 40Q79 38 80 35M78 40Q80 39 82 39M57 39Q62 42 67 45M67 45Q70 47 72 50M72 50Q72 52 73 54M73 54Q72 55 72 57M73 54Q74 55 75 57M72 50Q74 51 76 52M76 52Q77 54 78 55M76 52Q78 52 80 53M67 45Q71 46 74 46M74 46Q75 48 76 51M76 51Q76 53 75 55M76 51Q77 52 79 53M76 51Q76 53 76 55M74 46Q77 45 79 44M79 44Q81 43 83 42M79 44Q80 42 81 41M34 -11Q36 -15 38 -19M38 -19Q41 -22 43 -26M43 -26Q45 -27 47 -29M47 -29Q49 -28 51 -28M47 -29Q49 -30 51 -30M43 -26Q43 -28 42 -30M42 -30Q42 -32 42 -34M42 -30Q40 -31 39 -32M42 -30Q42 -32 42 -34M38 -19Q38 -22 38 -25M38 -25Q39 -28 39 -30M39 -30Q39 -31 40 -33M39 -30Q38 -31 38 -33M38 -25Q37 -27 36 -29M36 -29Q36 -30 36 -31M36 -29Q35 -29 34 -30M36 -29Q35 -30 35 -31M38 -25Q39 -27 40 -29M40 -29Q42 -30 43 -30M40 -29Q40 -31 39 -32M34 -11Q33 -16 33 -20M33 -20Q36 -21 38 -22M38 -22Q40 -21 41 -20M41 -20Q41 -18 41 -17M41 -20Q42 -20 43 -19M41 -20Q41 -18 40 -17M38 -22Q40 -24 41 -26M41 -26Q42 -26 43 -27M41 -26Q41 -27 40 -28M38 -22Q40 -22 42 -22M42 -22Q44 -21 45 -20M42 -22Q43 -23 44 -24M33 -20Q33 -23 32 -27M32 -27Q32 -29 33 -32M33 -32Q34 -33 35 -34M33 -32Q33 -33 33 -35M32 -27Q31 -28 29 -30M29 -30Q28 -31 27 -33M29 -30Q27 -31 26 -32M29 -30Q28 -31 28 -33M35 -14Q39 -18 42 -22M42 -22Q44 -26 46 -29M46 -29Q49 -30 51 -30M51 -30Q53 -28 54 -27M51 -30Q53 -30 55 -31M46 -29Q47 -32 46 -36M46 -36Q47 -38 48 -40M46 -36Q45 -37 45 -39M42 -22Q42 -26 42 -29M42 -29Q43 -31 45 -33M45 -33Q46 -34 48 -34M45 -33Q44 -35 44 -37M42 -29Q41 -31 40 -33M40 -33Q40 -34 40 -36M40 -33Q39 -34 37 -35M35 -14Q33 -19 31 -24M31 -24Q32 -27 31 -31M31 -31Q32 -32 33 -34M33 -34Q35 -34 37 -34M33 -34Q33 -36 33 -37M33 -34Q35 -35 36 -35M31 -31Q30 -33 29 -35M29 -35Q29 -37 30 -39M29 -35Q28 -36 26 -37M31 -24Q28 -27 26 -29M26 -29Q26 -31 26 -33M26 -33Q27 -35 27 -36M26 -33Q25 -34 24 -35M26 -33Q26 -35 26 -37M26 -29Q23 -29 20 -29M20 -29Q18 -30 17 -30M20 -29Q18 -28 17 -26M26 -29Q27 -32 28 -34M28 -34Q30 -34 32 -34M28 -34Q29 -36 29 -38M31 -24Q32 -28 34 -32M34 -32Q37 -32 40 -32M40 -32Q43 -32 45 -31M40 -32Q42 -34 44 -35M34 -32Q34 -35 34 -38M34 -38Q34 -40 35 -42M34 -38Q32 -40 30 -41M37 -11Q42 -13 46 -16M46 -16Q49 -16 52 -18M52 -18Q54 -17 57 -17M57 -17Q57 -16 58 -14M57 -17Q58 -18 59 -18M52 -18Q53 -20 55 -22M55 -22Q57 -22 58 -23M55 -22Q56 -24 57 -26M46 -16Q48 -20 51 -23M51 -23Q53 -22 56 -22M56 -22Q58 -22 59 -22M56 -22Q58 -23 59 -25M56 -22Q57 -21 58 -20M51 -23Q52 -26 52 -29M52 -29Q54 -31 54 -34M52 -29Q51 -31 50 -33M37 -11Q34 -14 31 -18M31 -18Q32 -22 33 -25M33 -25Q36 -26 37 -27M37 -27Q39 -27 40 -28M37 -27Q38 -29 39 -31M33 -25Q34 -27 34 -29M34 -29Q36 -31 37 -32M34 -29Q34 -31 35 -33M33 -25Q35 -26 37 -28M37 -28Q38 -29 39 -30M37 -28Q37 -30 37 -32M37 -28Q38 -30 39 -31M31 -18Q29 -20 26 -21M26 -21Q24 -23 22 -25M22 -25Q21 -26 20 -27M22 -25Q21 -24 19 -24M26 -21Q23 -21 20 -20M20 -20Q18 -20 16 -20M20 -20Q19 -18 18 -17M26 -21Q24 -23 22 -25M22 -25Q21 -26 21 -28M22 -25Q20 -24 18 -23M56 36Q60 40 63 44M63 44Q63 49 62 53M62 53Q61 56 61 59M61 59Q60 60 58 62M61 59Q61 61 61 63M61 59Q59 60 58 61M62 53Q62 56 63 59M63 59Q63 61 63 63M63 59Q64 61 64 63M63 44Q66 45 70 46M70 46Q71 48 72 50M72 50Q71 52 71 53M72 50Q73 51 74 52M70 46Q72 47 75 46M75 46Q77 46 79 47M75 46Q76 45 78 44M63 44Q63 48 65 51M65 51Q65 53 65 55M65 55Q64 56 64 58M65 55Q65 57 66 58M65 51Q66 53 68 54M68 54Q69 55 70 57M68 54Q70 55 71 56M65 51Q64 53 63 55M63 55Q62 57 62 59M63 55Q64 57 65 59M56 36Q60 39 64 43M64 43Q64 46 64 50M64 50Q64 52 64 55M64 55Q63 56 62 58M64 55Q65 56 66 58M64 55Q65 57 65 58M64 50Q66 52 68 54M68 54Q68 56 68 58M68 54Q70 54 73 54M64 50Q63 52 62 54M62 54Q60 55 59 56M62 54Q61 55 61 57M64 43Q67 45 70 47M70 47Q71 49 73 51M73 51Q73 54 74 56M73 51Q75 52 76 52M70 47Q72 46 74 45M74 45Q76 46 77 46M74 45Q75 44 76 42M70 47Q71 49 73 51M73 51Q74 52 76 53M73 51Q75 51 77 52M60 23Q64 24 69 26M69 26Q71 28 74 30M74 30Q75 33 75 35M75 35Q75 37 76 38M75 35Q77 37 78 38M75 35Q74 36 73 38M74 30Q76 30 78 30M78 30Q80 30 81 30M78 30Q80 29 81 28M78 30Q80 30 81 30M69 26Q71 25 74 25M74 25Q76 25 78 26M78 26Q79 27 80 27M78 26Q80 26 81 26M74 25Q76 24 78 24M78 24Q79 23 81 23M78 24Q79 23 80 23M74 25Q77 25 79 25M79 25Q80 26 82 26M79 25Q80 24 81 23M79 25Q80 26 82 26M69 26Q70 28 71 31M71 31Q71 34 70 36M70 36Q70 37 69 39M70 36Q71 38 71 39M71 31Q72 33 74 34M74 34Q75 35 76 37M74 34Q76 34 77 34M74 34Q75 35 76 36M60 23Q63 18 67 14M67 14Q72 14 76 15M76 15Q78 17 81 18M81 18Q82 19 84 20M81 18Q83 17 85 17M76 15Q79 14 82 13M82 13Q85 13 87 13M82 13Q84 11 85 10M82 13Q85 13 87 13M76 15Q79 16 81 16M81 16Q83 18 85 19M81 16Q83 15 85 14M81 16Q83 17 85 19M67 14Q66 10 65 7M65 7Q65 4 65 2M65 2Q66 1 67 -1M65 2Q65 1 64 -1M65 7Q63 5 60 4M60 4Q59 3 58 1M60 4Q58 4 56 4M69 32Q64 33 59 33M59 33Q55 31 52 29M52 29Q51 27 48 25M48 25Q48 23 48 21M48 21Q49 20 49 19M48 21Q47 20 45 20M48 25Q46 24 44 22M44 22Q43 21 42 20M44 22Q42 23 41 23M44 22Q44 21 43 20M48 25Q48 23 47 21M47 21Q48 20 48 18M47 21Q47 20 46 19M47 21Q48 20 48 18M52 29Q50 28 47 27M47 27Q46 25 45 24M45 24Q45 23 44 21M45 24Q44 23 43 23M47 27Q45 26 43 25M43 25Q43 23 42 22M43 25Q42 25 40 25M52 29Q52 26 53 24M53 24Q54 22 56 21M56 21Q57 21 58 21M56 21Q56 20 56 18M56 21Q57 21 58 21M53 24Q52 22 52 20M52 20Q53 19 52 18M52 20Q51 20 50 19M53 24Q54 23 55 21M55 21Q55 21 56 21M55 21Q55 20 55 19M59 33Q55 34 52 35M52 35Q49 35 47 37M47 37Q45 36 43 35M43 35Q43 33 43 32M43 35Q42 35 40 35M47 37Q45 38 44 39M44 39Q42 39 41 39M44 39Q43 40 42 41M52 35Q50 36 48 37M48 37Q47 38 46 39M46 39Q45 39 44 39M46 39Q45 39 44 40M46 39Q45 38 44 38M48 37Q48 39 47 40M47 40Q47 41 46 42M47 40Q48 41 48 42M59 33Q55 31 52 27M52 27Q51 24 50 21M50 21Q49 19 49 16M49 16Q50 15 52 13M49 16Q48 14 47 13M50 21Q47 21 45 20M45 20Q44 19 43 18M45 20Q44 21 43 22M52 27Q50 25 49 22M49 22Q49 20 49 17M49 17Q51 17 52 16M49 17Q49 16 49 15M49 22Q47 20 45 19M45 19Q44 18 42 17M45 19Q44 20 42 21M49 22Q50 20 51 18M51 18Q52 18 53 17M51 18Q51 17 50 15M69 32Q68 38 66 45M66 45Q61 46 56 47M56 47Q52 47 48 47M48 47Q46 46 44 46M44 46Q43 45 41 44M44 46Q42 47 40 47M48 47Q46 49 44 51M44 51Q43 51 41 51M44 51Q44 52 44 54M56 47Q53 49 50 51M50 51Q48 52 46 54M46 54Q44 54 42 54M46 54Q45 56 44 58M46 54Q45 53 43 53M50 51Q49 52 47 54M47 54Q46 55 44 56M47 54Q48 55 48 57M47 54Q46 54 45 54M66 45Q69 49 71 54M71 54Q69 58 68 62M68 62Q66 64 64 67M64 67Q62 67 60 66M64 67Q64 69 63 71M68 62Q68 65 69 67M69 67Q69 69 69 71M69 67Q70 68 72 69M71 54Q74 57 76 60M76 60Q78 63 79 66M79 66Q78 68 78 70M79 66Q80 68 82 70M79 66Q80 69 80 71M76 60Q79 61 82 62M82 62Q83 64 84 66M82 62Q84 62 86 61M82 62Q83 63 85 64M83 28Q86 33 89 38M89 38Q90 42 91 46M91 46Q90 49 89 52M89 52Q87 54 85 56M85 56Q84 57 82 58M85 56Q85 57 85 59M89 52Q90 54 91 56M91 56Q90 58 90 59M91 56Q92 56 93 56M91 46Q94 48 96 49M96 49Q97 51 97 53M97 53Q96 54 95 55M97 53Q98 54 99 55M97 53Q96 54 96 56M96 49Q98 50 100 51M100 51Q101 52 102 53M100 51Q101 51 103 51M89 38Q93 39 96 40M96 40Q98 42 101 43M101 43Q102 45 102 46M102 46Q103 48 102 49M102 46Q103 47 103 48M102 46Q103 48 104 49M101 43Q102 43 104 44M104 44Q105 44 106 45M104 44Q105 43 106 42M96 40Q98 41 101 41M101 41Q102 42 104 43M104 43Q104 44 103 45M104 43Q105 43 106 42M101 41Q102 41 103 40M103 40Q104 39 105 39M103 40Q103 39 104 38M83 28Q88 30 94 31M94 31Q97 33 99 36M99 36Q100 39 100 41M100 41Q101 43 101 45M101 45Q100 46 99 47M101 45Q101 46 102 47M100 41Q102 42 103 43M103 43Q104 44 105 46M103 43Q105 43 106 43M99 36Q102 37 104 38M104 38Q105 40 106 41M106 41Q106 42 106 43M106 41Q107 41 108 42M104 38Q106 39 108 39M108 39Q109 39 111 39M108 39Q109 38 110 37M104 38Q105 40 107 42M107 42Q107 43 107 45M107 42Q108 42 109 42M99 36Q100 38 101 41M101 41Q101 42 101 44M101 44Q100 45 99 46M101 44Q101 45 102 46M101 41Q102 41 104 42M104 42Q104 44 105 45M104 42Q105 42 107 42M104 42Q104 43 105 44M94 31Q98 32 101 34M101 34Q102 36 103 39M103 39Q103 41 103 43M103 43Q102 44 101 46M103 43Q104 45 105 46M103 43Q102 44 101 45M103 39Q105 41 106 42M106 42Q107 44 107 45M106 42Q108 42 109 43M101 34Q104 34 107 34M107 34Q109 36 110 37M110 37Q110 39 110 41M110 37Q112 37 114 37M107 34Q109 33 111 33M111 33Q112 33 114 32M111 33Q112 32 113 31M184 108Q188 112 191 116M191 116Q190 120 189 124M189 124Q186 125 184 126M184 126Q182 126 181 127M184 126Q184 128 184 130M189 124Q189 126 188 129M188 129Q187 130 186 131M188 129Q188 130 188 132M188 129Q187 130 185 131M191 116Q195 118 198 120M198 120Q201 121 203 123M203 123Q204 125 204 127M203 123Q205 124 207 124M198 120Q201 120 204 120M204 120Q206 120 208 120M204 120Q206 119 208 119M191 116Q191 120 192 123M192 123Q191 126 192 128M192 128Q191 130 190 131M192 128Q192 130 193 132M192 123Q194 125 195 127M195 127Q196 129 197 131M195 127Q197 127 199 127M184 108Q189 109 194 112M194 112Q197 114 200 116M200 116Q201 118 203 119M203 119Q204 120 205 121M203 119Q204 119 206 120M203 119Q203 120 203 122M200 116Q201 117 203 119M203 119Q202 120 202 121M203 119Q204 119 205 119M194 112Q198 110 202 109M202 109Q205 109 207 110M207 110Q208 112 210 113M207 110Q209 111 211 112M202 109Q205 107 208 106M208 106Q210 106 213 105M208 106Q209 104 211 102M202 109Q205 109 208 110M208 110Q209 111 209 113M208 110Q210 109 212 108M208 110Q209 111 211 112M184 108Q188 111 190 115M190 115Q189 117 188 120M188 120Q186 121 184 122M184 122Q182 122 181 122M184 122Q183 123 183 125M188 120Q188 122 188 125M188 125Q188 126 189 127M188 125Q189 126 189 127M188 120Q187 121 185 122M185 122Q184 123 182 123M185 122Q184 124 184 125M190 115Q192 117 194 119M194 119Q195 122 195 124M195 124Q195 126 195 128M195 124Q196 126 197 127M194 119Q197 120 199 121M199 121Q200 123 201 124M199 121Q201 121 203 120M199 121Q201 122 203 124M190 115Q191 118 192 121M192 121Q193 123 193 125M193 125Q191 126 190 127M193 125Q194 126 194 127M192 121Q194 122 196 124M196 124Q196 126 195 127M196 124Q198 124 200 125M179 90Q184 88 188 85M188 85Q192 84 195 83M195 83Q197 85 200 86M200 86Q201 88 202 89M200 86Q202 86 204 87M195 83Q197 82 199 80M199 80Q201 80 203 80M199 80Q200 79 201 77M188 85Q190 82 193 80M193 80Q195 80 198 80M198 80Q199 82 199 83M198 80Q199 79 201 78M198 80Q199 82 199 83M193 80Q194 78 194 76M194 76Q195 75 197 75M194 76Q194 74 193 73M193 80Q195 80 198 81M198 81Q199 82 201 83M198 81Q199 81 201 80M198 81Q200 81 201 82M179 90Q180 85 180 80M180 80Q181 77 182 74M182 74Q185 74 187 73M187 73Q189 73 191 74M187 73Q188 70 189 69M182 74Q181 72 180 70M180 70Q179 68 179 67M180 70Q178 69 177 67M180 70Q180 69 180 67M180 80Q178 77 178 73M178 73Q180 70 182 68M182 68Q183 67 185 65M182 68Q183 66 184 63M182 68Q184 67 186 66M178 73Q177 70 176 68M176 68Q176 67 176 65M176 68Q175 68 173 68M180 80Q179 77 180 73M180 73Q182 72 184 70M184 70Q186 71 188 71M184 70Q185 68 186 66M184 70Q187 71 188 71M180 73Q179 71 177 69M177 69Q176 68 176 67M177 69Q175 69 174 68M180 73Q181 71 182 69M182 69Q184 67 185 66M182 69Q181 67 180 65M179 90Q183 88 187 85M187 85Q190 85 194 84M194 84Q196 84 198 84M198 84Q200 84 201 85M198 84Q200 83 201 82M194 84Q195 82 196 80M196 80Q197 80 199 79M196 80Q197 79 197 77M196 80Q198 80 199 80M187 85Q188 82 188 79M188 79Q188 77 189 75M189 75Q189 74 189 73M189 75Q188 74 189 72M188 79Q186 78 185 76M185 76Q184 75 184 73M185 76Q183 77 181 77M187 85Q190 84 194 83M194 83Q196 83 199 84M199 84Q201 84 202 85M199 84Q201 84 203 84M194 83Q195 80 196 78M196 78Q198 77 200 76M196 78Q195 76 194 75M196 78Q198 77 199 75M194 83Q196 83 198 82M198 82Q200 82 201 83M198 82Q199 80 199 79M53 127Q51 130 49 132M49 132Q47 134 45 135M45 135Q44 136 42 137M42 137Q41 137 39 137M42 137Q42 138 41 139M45 135Q44 137 43 138M43 138Q42 138 41 138M43 138Q42 139 42 140M49 132Q49 135 50 137M50 137Q50 139 49 140M49 140Q48 141 47 142M49 140Q49 141 49 143M50 137Q51 138 53 139M53 139Q53 140 53 141M53 139Q54 139 55 139M53 139Q53 141 53 142M53 127Q55 131 57 134M57 134Q55 137 53 139M53 139Q51 140 49 141M49 141Q48 141 47 142M49 141Q48 142 47 143M53 139Q53 142 52 144M52 144Q51 145 50 146M52 144Q53 145 54 146M53 139Q51 140 49 141M49 141Q48 141 46 141M49 141Q48 142 47 144M57 134Q58 136 60 138M60 138Q61 139 62 140M62 140Q63 141 63 142M62 140Q63 141 65 141M60 138Q62 137 64 137M64 137Q65 138 67 138M64 137Q65 137 67 137M60 138Q61 139 62 140M62 140Q63 141 63 142M62 140Q63 141 64 142M65 127Q64 132 64 138M64 138Q60 139 57 141M57 141Q55 141 52 143M52 143Q51 144 49 145M52 143Q52 145 50 146M52 143Q50 143 48 143M57 141Q55 141 53 143M53 143Q51 143 50 143M53 143Q51 144 50 145M53 143Q51 142 49 142M64 138Q66 140 68 142M68 142Q69 144 70 146M70 146Q70 147 70 149M70 146Q71 147 71 149M68 142Q71 142 73 143M73 143Q75 144 76 145M73 143Q75 142 77 141M73 143Q74 144 75 146M65 127Q69 130 75 131M75 131Q76 134 78 138M78 138Q79 140 80 142M80 142Q80 143 81 145M80 142Q82 142 83 143M78 138Q80 138 82 139M82 139Q84 140 85 141M82 139Q84 138 85 137M75 131Q77 129 80 127M80 127Q83 127 85 127M85 127Q87 127 89 128M85 127Q86 125 88 124M85 127Q86 128 88 128M80 127Q82 126 84 124M84 124Q86 123 87 123M84 124Q84 122 84 121M84 124Q86 124 87 124M86 117Q90 121 94 125M94 125Q96 128 98 131M98 131Q98 133 98 136M98 136Q96 137 95 138M98 136Q99 137 100 139M98 131Q100 132 103 133M103 133Q105 134 106 135M103 133Q105 133 106 132M98 131Q99 133 101 135M101 135Q101 137 102 138M101 135Q102 135 104 136M101 135Q101 136 101 138M94 125Q98 126 101 126M101 126Q103 128 104 129M104 129Q104 131 103 133M104 129Q106 130 107 131M101 126Q103 124 105 122M105 122Q107 123 109 123M105 122Q106 120 105 118M105 122Q107 123 109 124M86 117Q93 118 98 121M98 121Q100 125 103 129M103 129Q102 131 101 134M101 134Q100 136 99 138M101 134Q101 136 101 139M103 129Q106 130 109 131M109 131Q112 131 114 132M109 131Q111 130 113 129M103 129Q104 132 106 134M106 134Q105 137 104 139M106 134Q108 136 110 137M98 121Q103 120 108 121M108 121Q110 123 112 125M112 125Q113 127 114 129M112 125Q115 125 117 125M108 121Q111 120 114 120M114 120Q115 121 117 122M114 120Q115 120 117 119M114 120Q115 121 117 122M98 121Q101 124 104 128M104 128Q105 131 106 133M106 133Q106 135 106 137M106 133Q108 134 110 135M104 128Q107 130 108 132M108 132Q109 135 109 137M108 132Q111 133 113 134M108 132Q109 134 109 137M87 104Q92 104 97 104M97 104Q100 106 103 106M103 106Q105 107 108 108M108 108Q109 109 110 110M108 108Q109 106 110 105M103 106Q105 107 107 107M107 107Q108 107 109 107M107 107Q108 106 109 105M97 104Q100 103 104 101M104 101Q106 101 109 101M109 101Q111 102 112 104M109 101Q110 100 112 99M104 101Q105 98 105 95M105 95Q106 94 106 92M105 95Q103 94 102 92M105 95Q105 94 106 92M97 104Q100 106 103 106M103 106Q105 108 107 110M107 110Q107 112 107 114M107 110Q108 112 109 113M103 106Q106 105 108 104M108 104Q110 103 112 101M108 104Q109 102 110 100M87 104Q90 101 94 99M94 99Q96 100 99 101M99 101Q101 101 103 102M103 102Q105 103 106 103M103 102Q105 101 106 101M103 102Q105 103 105 104M99 101Q101 100 104 100M104 100Q105 101 106 102M104 100Q105 99 107 98M99 101Q101 101 103 102M103 102Q104 102 105 103M103 102Q104 102 105 102M94 99Q95 97 98 95M98 95Q99 94 101 92M101 92Q102 92 103 91M101 92Q102 91 103 89M98 95Q98 93 98 91M98 91Q99 90 100 89M98 91Q98 89 98 88M98 95Q100 94 102 93M102 93Q104 94 106 94M102 93Q103 92 104 91M82 118Q82 122 82 126M82 126Q80 129 78 132M78 132Q76 133 74 135M74 135Q73 136 71 136M74 135Q74 137 73 138M78 132Q78 134 77 136M77 136Q77 137 76 138M77 136Q78 138 78 139M82 126Q84 129 85 133M85 133Q84 135 83 137M83 137Q81 139 81 141M83 137Q83 139 83 141M85 133Q86 135 86 138M86 138Q84 139 83 140M86 138Q87 140 87 142M86 138Q86 140 85 142M82 118Q86 120 89 123M89 123Q89 126 90 128M90 128Q89 130 89 133M89 133Q89 134 88 135M89 133Q90 134 91 135M90 128Q91 130 92 131M92 131Q92 133 93 134M92 131Q93 132 94 133M90 128Q88 130 87 132M87 132Q85 132 84 133M87 132Q86 132 85 133M89 123Q92 123 96 123M96 123Q97 125 99 127M99 127Q98 128 98 130M99 127Q100 127 102 127M96 123Q98 123 101 122M101 122Q103 122 104 122M101 122Q102 121 103 120M82 118Q81 123 79 128M79 128Q76 129 72 130M72 130Q69 130 67 131M67 131Q65 132 63 132M67 131Q66 133 65 134M67 131Q65 132 63 132M72 130Q70 131 68 133M68 133Q67 133 65 133M68 133Q67 134 66 135M72 130Q70 129 68 129M68 129Q66 129 65 127M68 129Q66 130 65 130M68 129Q66 129 65 128M79 128Q78 132 79 136M79 136Q78 139 78 143M78 143Q76 145 74 146M78 143Q80 145 82 147M78 143Q78 145 76 146M79 136Q82 138 84 140M84 140Q85 141 87 142M84 140Q86 140 89 139M79 128Q76 129 73 129M73 129Q71 129 69 129M69 129Q68 128 67 127M69 129Q68 129 67 130M69 129Q68 129 66 128M73 129Q71 130 70 132M70 132Q68 132 67 132M70 132Q69 133 68 135M70 132Q68 132 67 133M73 129Q71 128 69 127M69 127Q69 126 68 124M69 127Q68 126 66 126M123 15Q128 16 132 18M132 18Q135 21 137 24M137 24Q137 27 137 30M137 30Q136 31 134 32M134 32Q133 32 132 33M134 32Q134 33 133 34M137 30Q137 31 137 33M137 33Q137 34 136 35M137 33Q138 34 138 36M137 33Q136 34 135 35M137 24Q139 27 141 28M141 28Q141 31 141 33M141 33Q140 34 138 35M141 33Q141 34 142 35M141 28Q143 30 144 31M144 31Q144 32 143 33M144 31Q145 31 146 32M137 24Q138 27 137 30M137 30Q136 32 136 33M136 33Q135 34 134 34M136 33Q136 35 136 36M137 30Q138 31 139 32M139 32Q139 33 140 35M139 32Q141 33 142 33M132 18Q136 18 139 20M139 20Q141 21 142 23M142 23Q141 25 141 27M141 27Q141 28 140 29M141 27Q142 28 142 28M142 23Q143 24 144 24M144 24Q145 24 146 25M144 24Q145 23 146 23M142 23Q141 25 140 26M140 26Q139 27 138 28M140 26Q140 27 140 28M139 20Q142 20 144 21M144 21Q146 22 148 22M148 22Q149 22 150 23M148 22Q149 22 150 21M144 21Q146 21 147 21M147 21Q148 22 149 22M147 21Q148 20 149 20M147 21Q148 21 150 22M139 20Q140 22 141 25M141 25Q141 27 139 29M139 29Q138 29 137 30M139 29Q139 30 138 31M141 25Q143 27 143 29M143 29Q143 30 142 31M143 29Q145 29 146 31M123 15Q127 13 131 12M131 12Q133 14 136 16M136 16Q137 19 137 21M137 21Q137 23 137 24M137 24Q136 26 136 27M137 24Q137 26 138 27M137 21Q138 22 140 23M140 23Q141 24 142 25M140 23Q141 23 143 23M136 16Q138 16 140 16M140 16Q141 17 142 18M142 18Q142 20 142 21M142 18Q143 19 145 20M142 18Q142 20 143 21M140 16Q141 16 143 15M143 15Q144 15 145 16M143 15Q144 15 144 14M143 15Q143 16 144 16M140 16Q141 17 143 17M143 17Q144 18 145 18M143 17Q143 16 144 16M136 16Q136 18 137 20M137 20Q137 21 137 22M137 22Q137 23 136 24M137 22Q137 23 137 24M137 20Q138 21 139 22M139 22Q139 24 139 25M139 22Q140 23 141 24M131 12Q133 10 136 8M136 8Q138 8 140 8M140 8Q141 9 142 9M142 9Q143 10 144 10M142 9Q143 9 144 9M140 8Q141 7 142 5M142 5Q143 5 144 4M142 5Q142 4 142 3M142 5Q143 5 143 4M140 8Q141 9 142 10M142 10Q143 11 142 13M142 10Q143 11 144 12M136 8Q137 6 137 4M137 4Q138 2 139 0M139 0Q140 -1 141 -2M139 0Q139 -1 138 -2M137 4Q137 2 136 0M136 0Q137 -0 137 -1M136 0Q135 0 134 -0M124 2Q129 2 133 3M133 3Q136 6 138 7M138 7Q139 9 140 11M140 11Q141 13 142 14M142 14Q141 15 141 17M142 14Q143 15 144 16M140 11Q142 12 142 14M142 14Q142 15 142 17M142 14Q143 15 144 15M138 7Q140 8 142 8M142 8Q143 9 145 9M145 9Q145 10 146 11M145 9Q146 9 146 8M142 8Q143 9 145 8M145 8Q146 8 147 8M145 8Q145 8 146 7M142 8Q143 10 144 11M144 11Q145 12 145 13M144 11Q145 12 146 12M133 3Q136 1 137 -1M137 -1Q139 -1 141 -1M141 -1Q143 -0 144 1M144 1Q144 2 144 3M144 1Q145 1 146 1M144 1Q144 2 144 3M141 -1Q142 -2 143 -3M143 -3Q144 -4 144 -4M143 -3Q143 -4 143 -5M137 -1Q137 -3 137 -6M137 -6Q137 -7 137 -9M137 -9Q137 -10 137 -11M137 -9Q137 -10 137 -11M137 -6Q136 -7 135 -8M135 -8Q135 -9 134 -11M135 -8Q134 -9 133 -9M137 -1Q139 -2 141 -3M141 -3Q143 -3 144 -3M144 -3Q145 -2 146 -2M144 -3Q145 -3 146 -4M141 -3Q142 -5 143 -6M143 -6Q144 -7 145 -8M143 -6Q143 -7 144 -8M143 -6Q144 -7 146 -7M141 -3Q143 -4 144 -6M144 -6Q145 -7 146 -8M144 -6Q145 -7 145 -8M133 3Q136 5 139 6M139 6Q140 8 140 10M140 10Q140 11 140 13M140 13Q139 13 138 14M140 13Q140 13 140 14M140 10Q141 11 142 12M142 12Q142 13 143 14M142 12Q142 13 143 13M139 6Q141 7 142 9M142 9Q143 11 143 12M143 12Q142 13 142 14M143 12Q144 13 145 14M142 9Q144 10 145 12M145 12Q145 13 145 15M145 12Q146 12 148 12M124 2Q127 -1 131 -4M131 -4Q134 -6 136 -9M136 -9Q138 -10 141 -10M141 -10Q143 -10 144 -9M144 -9Q145 -8 146 -7M144 -9Q146 -9 147 -9M141 -10Q141 -12 142 -13M142 -13Q144 -13 145 -13M142 -13Q143 -14 143 -15M136 -9Q137 -11 137 -14M137 -14Q138 -15 139 -17M139 -17Q140 -17 142 -18M139 -17Q139 -18 139 -19M137 -14Q136 -15 134 -16M134 -16Q133 -17 132 -18M134 -16Q132 -16 131 -16M137 -14Q138 -16 138 -17M138 -17Q139 -18 141 -19M138 -17Q138 -19 138 -20M136 -9Q138 -11 139 -13M139 -13Q141 -14 143 -14M143 -14Q144 -13 144 -12M143 -14Q144 -14 145 -14M139 -13Q140 -15 140 -17M140 -17Q142 -17 143 -17M140 -17Q140 -18 140 -19M131 -4Q133 -7 134 -11M134 -11Q136 -12 138 -14M138 -14Q140 -15 141 -16M141 -16Q142 -17 143 -18M141 -16Q142 -18 142 -19M138 -14Q139 -16 139 -18M139 -18Q140 -19 141 -21M139 -18Q138 -20 138 -21M139 -18Q141 -19 142 -20M138 -14Q140 -14 142 -15M142 -15Q143 -14 144 -14M142 -15Q143 -15 144 -16M134 -11Q133 -13 132 -16M132 -16Q133 -18 133 -20M133 -20Q134 -21 134 -22M133 -20Q133 -21 132 -22M133 -20Q135 -21 136 -21M132 -16Q130 -16 129 -17M129 -17Q128 -18 128 -20M129 -17Q127 -17 125 -17M129 -17Q127 -18 126 -19M131 -4Q133 -6 135 -8M135 -8Q137 -9 140 -8M140 -8Q141 -8 143 -7M143 -7Q144 -6 145 -6M143 -7Q144 -7 145 -7M143 -7Q144 -6 145 -5M140 -8Q141 -9 143 -10M143 -10Q144 -10 145 -10M143 -10Q143 -11 144 -12M140 -8Q141 -7 142 -6M142 -6Q142 -5 142 -5M142 -6Q143 -7 144 -7M142 -6Q142 -5 143 -4M135 -8Q135 -11 134 -13M134 -13Q134 -15 134 -17M134 -17Q135 -18 135 -19M134 -17Q134 -18 134 -19M134 -13Q133 -14 131 -15M131 -15Q131 -16 130 -17M131 -15Q131 -16 130 -16M131 -15Q132 -17 132 -18M135 -8Q137 -9 139 -11M139 -11Q141 -11 142 -12M142 -12Q143 -11 144 -11M142 -12Q143 -13 144 -14M139 -11Q139 -12 139 -14M139 -14Q140 -14 140 -15M139 -14Q139 -14 139 -15M139 -14Q139 -15 140 -16M139 -11Q140 -12 141 -12M141 -12Q142 -12 143 -13M141 -12Q142 -13 143 -13M161 58Q165 62 169 64M169 64Q171 68 173 71M173 71Q173 74 173 76M173 76Q171 77 170 79M173 76Q173 78 173 80M173 76Q172 78 171 79M173 71Q175 73 178 73M178 73Q180 74 181 75M178 73Q180 72 182 71M169 64Q173 65 176 64M176 64Q179 65 182 66M182 66Q183 68 185 70M182 66Q183 66 185 66M176 64Q179 64 181 63M181 63Q183 64 185 64M181 63Q183 62 185 61M181 63Q183 63 185 63M176 64Q179 66 181 67M181 67Q182 69 183 70M181 67Q183 69 185 69M161 58Q165 60 168 62M168 62Q170 65 171 68M171 68Q170 69 169 71M169 71Q168 72 167 73M169 71Q170 72 170 73M171 68Q172 70 172 72M172 72Q172 74 172 75M172 72Q173 73 174 75M172 72Q172 74 171 76M168 62Q172 63 175 63M175 63Q177 64 179 65M179 65Q181 66 182 67M179 65Q181 66 183 66M175 63Q177 63 179 62M179 62Q180 63 182 64M179 62Q180 61 180 59M156 42Q160 39 165 37M165 37Q169 38 173 40M173 40Q175 41 177 42M177 42Q178 44 179 45M177 42Q179 42 180 42M177 42Q178 44 179 45M173 40Q175 40 178 40M178 40Q179 42 180 43M178 40Q180 39 181 39M165 37Q168 35 171 32M171 32Q173 32 176 31M176 31Q177 32 179 32M176 31Q177 30 179 29M176 31Q177 31 179 31M171 32Q172 30 173 27M173 27Q174 26 176 25M173 27Q171 26 170 24M173 27Q174 26 175 24M156 42Q154 37 153 33M153 33Q154 31 155 28M155 28Q157 27 159 26M159 26Q160 26 162 25M159 26Q159 25 159 23M155 28Q156 26 156 24M156 24Q156 23 157 22M156 24Q155 23 154 22M155 28Q157 27 159 26M159 26Q161 27 162 27M159 26Q160 25 161 24M159 26Q161 27 162 28M153 33Q151 30 150 27M150 27Q151 25 151 23M151 23Q152 21 152 19M151 23Q151 21 150 20M151 23Q153 22 154 21M150 27Q150 26 148 24M148 24Q148 23 148 21M148 24Q147 23 146 23M161 60Q164 64 167 67M167 67Q168 69 169 72M169 72Q167 74 165 75M165 75Q164 75 162 76M165 75Q164 76 164 78M169 72Q170 74 172 75M172 75Q172 76 172 78M172 75Q173 75 174 75M167 67Q170 66 174 67M174 67Q176 68 179 69M179 69Q179 71 179 73M179 69Q180 69 182 68M174 67Q176 65 179 65M179 65Q181 66 183 67M179 65Q181 65 183 65M161 60Q166 61 171 61M171 61Q174 62 177 64M177 64Q179 65 182 66M182 66Q183 68 184 70M182 66Q184 67 186 66M182 66Q183 68 184 70M177 64Q179 63 182 62M182 62Q184 63 186 64M182 62Q184 61 186 61M171 61Q174 59 177 58M177 58Q179 59 181 59M181 59Q183 60 184 61M181 59Q183 59 184 60M181 59Q183 60 184 61M177 58Q179 57 182 56M182 56Q184 57 186 58M182 56Q183 55 184 53M93 145Q94 150 97 154M97 154Q98 158 100 162M100 162Q99 164 99 166M99 166Q98 168 96 169M96 169Q95 169 94 170M96 169Q96 170 96 172M96 169Q95 169 93 168M99 166Q100 167 101 169M101 169Q101 170 101 172M101 169Q103 169 104 169M99 166Q99 168 98 170M98 170Q97 170 96 171M98 170Q98 171 99 172M100 162Q101 164 103 166M103 166Q103 168 104 170M104 170Q103 171 103 173M104 170Q104 171 105 172M103 166Q105 167 107 168M107 168Q108 170 108 171M107 168Q108 169 110 170M100 162Q98 164 97 167M97 167Q95 167 93 168M93 168Q92 168 91 169M93 168Q93 169 92 170M97 167Q96 169 95 170M95 170Q94 171 92 172M95 170Q95 171 95 173M97 154Q99 157 103 158M103 158Q104 161 106 163M106 163Q105 164 105 166M105 166Q106 167 105 169M105 166Q106 167 107 167M106 163Q107 163 109 163M109 163Q111 164 112 164M109 163Q110 162 110 161M103 158Q105 159 108 159M108 159Q109 161 110 162M110 162Q110 164 110 165M110 162Q111 163 113 163M108 159Q109 159 111 159M111 159Q112 160 113 161M111 159Q113 159 114 158M103 158Q104 160 106 162M106 162Q106 164 106 167M106 167Q105 167 103 168M106 167Q107 168 108 169M106 162Q107 164 109 165M109 165Q110 165 112 166M109 165Q110 165 112 165M109 165Q110 166 110 167M93 145Q98 146 103 146M103 146Q106 147 110 149M110 149Q111 151 112 154M112 154Q111 156 111 158M111 158Q110 160 109 161M111 158Q112 159 113 161M112 154Q113 155 115 157M115 157Q115 158 115 160M115 157Q116 157 117 157M110 149Q112 149 115 149M115 149Q117 151 119 151M119 151Q120 152 121 154M119 151Q120 151 121 150M115 149Q117 149 119 150M119 150Q119 151 121 152M119 150Q120 150 121 149M110 149Q112 151 114 152M114 152Q116 153 117 154M117 154Q118 156 119 157M117 154Q119 154 120 155M114 152Q116 152 118 151M118 151Q119 151 121 151M118 151Q118 149 119 148M103 146Q106 145 110 145M110 145Q112 146 114 146M114 146Q116 148 117 149M117 149Q117 150 118 152M117 149Q118 149 120 150M114 146Q116 145 118 145M118 145Q119 145 120 146M118 145Q119 145 121 144M114 146Q115 147 116 149M116 149Q117 150 118 151M116 149Q118 149 119 149M110 145Q112 143 113 141M113 141Q115 141 116 140M116 140Q117 140 118 140M116 140Q117 139 117 138M113 141Q113 140 114 138M114 138Q115 137 116 136M114 138Q114 137 114 136M114 138Q115 137 115 136M110 145Q112 145 114 146M114 146Q115 146 116 147M116 147Q117 147 118 148M116 147Q117 147 118 147M114 146Q115 145 116 144M116 144Q117 144 118 144M116 144Q116 143 117 142M116 144Q117 143 117 143M95 124Q101 123 106 124M106 124Q109 127 112 130M112 130Q113 132 113 135M113 135Q112 136 111 138M111 138Q110 139 109 140M111 138Q110 139 109 140M111 138Q109 138 108 138M113 135Q114 137 115 138M115 138Q114 139 113 140M115 138Q115 140 116 141M112 130Q115 131 116 133M116 133Q117 135 118 137M118 137Q118 138 119 139M118 137Q119 138 121 139M116 133Q118 135 120 135M120 135Q121 137 122 138M120 135Q122 136 123 136M120 135Q121 137 122 138M116 133Q117 135 117 137M117 137Q117 138 117 139M117 137Q118 137 120 138M106 124Q110 125 114 125M114 125Q115 126 118 127M118 127Q119 128 119 130M119 130Q119 131 119 132M119 130Q120 131 122 131M118 127Q119 127 121 127M121 127Q122 128 122 129M121 127Q122 127 123 126M121 127Q122 127 123 127M114 125Q116 125 119 126M119 126Q120 126 122 127M122 127Q123 127 124 128M122 127Q123 126 124 126M119 126Q120 125 122 124M122 124Q123 124 124 125M122 124Q122 123 122 122M95 124Q96 118 96 112M96 112Q97 108 97 103M97 103Q97 99 97 96M97 96Q98 93 99 92M99 92Q101 91 102 91M99 92Q100 90 101 88M97 96Q94 94 92 93M92 93Q91 91 89 89M92 93Q90 92 88 91M97 96Q97 93 97 90M97 90Q98 89 99 87M97 90Q96 89 95 87M97 103Q94 100 92 98M92 98Q91 95 91 93M91 93Q91 91 91 89M91 93Q90 91 89 89M91 93Q92 91 93 90M92 98Q90 96 88 94M88 94Q86 93 85 91M88 94Q86 94 84 94M97 103Q99 101 102 99M102 99Q104 99 107 99M107 99Q107 101 108 102M107 99Q108 99 110 98M102 99Q102 96 102 94M102 94Q103 92 104 91M102 94Q102 92 103 90M102 94Q104 92 105 91M96 112Q95 109 95 105M95 105Q97 102 97 99M97 99Q99 98 101 98M101 98Q102 98 104 98M101 98Q101 96 102 95M97 99Q97 97 97 95M97 95Q97 94 97 92M97 95Q95 94 94 94M97 95Q97 93 97 92M97 99Q98 97 100 95M100 95Q101 94 103 94M100 95Q99 93 99 92M100 95Q101 95 103 95M95 105Q94 102 92 100M92 100Q92 98 92 96M92 96Q92 95 93 94M92 96Q91 96 90 95M92 100Q90 99 88 98M88 98Q87 97 87 95M88 98Q87 98 85 98M92 100Q92 98 92 97M92 97Q92 96 92 94M92 97Q91 96 90 95M95 124Q100 122 105 120M105 120Q109 120 113 121M113 121Q115 123 117 125M117 125Q117 127 117 130M117 130Q116 131 116 133M117 130Q118 131 119 132M117 125Q119 126 121 127M121 127Q122 128 123 130M121 127Q123 127 124 126M121 127Q122 128 122 130M117 125Q117 127 117 129M117 129Q116 131 116 132M117 129Q118 130 119 131M113 121Q115 120 117 119M117 119Q119 118 120 117M120 117Q121 118 122 118M120 117Q120 116 121 115M120 117Q121 117 122 117M117 119Q117 117 118 115M118 115Q119 115 121 114M118 115Q118 114 118 113M117 119Q119 118 121 117M121 117Q122 117 123 116M121 117Q122 115 123 114M105 120Q106 116 108 112M108 112Q110 111 112 108M112 108Q114 107 117 106M117 106Q118 106 120 107M117 106Q118 106 120 105M112 108Q112 106 113 104M113 104Q114 103 115 102M113 104Q111 103 111 102M113 104Q113 103 114 102M112 108Q114 107 115 105M115 105Q116 105 118 105M115 105Q115 104 115 102M115 105Q116 104 118 104M108 112Q107 110 106 107M106 107Q106 105 106 103M106 103Q105 102 106 101M106 103Q105 102 104 101M106 103Q106 102 106 101M106 107Q104 107 102 106M102 106Q102 105 101 104M102 106Q101 107 100 107M102 106Q102 105 101 105M106 107Q107 105 108 104M108 104Q109 103 110 102M108 104Q108 102 109 101M108 104Q110 103 111 103M130 151Q129 155 128 159M128 159Q125 160 123 162M123 162Q121 161 119 161M119 161Q119 160 118 160M119 161Q118 162 117 163M119 161Q119 160 118 159M123 162Q122 163 122 165M122 165Q121 166 120 166M122 165Q123 167 124 168M128 159Q128 162 130 165M130 165Q129 167 128 169M128 169Q127 170 126 171M128 169Q128 171 128 173M130 165Q130 167 131 169M131 169Q131 170 130 172M131 169Q132 170 133 171M131 169Q130 171 130 172M130 165Q129 167 129 169M129 169Q128 171 128 172M129 169Q130 170 130 172M130 151Q133 153 136 155M136 155Q137 158 138 160M138 160Q137 162 136 164M136 164Q136 165 135 166M136 164Q137 165 136 167M136 164Q136 165 135 166M138 160Q139 162 139 163M139 163Q139 165 139 166M139 163Q140 164 141 165M136 155Q139 156 141 156M141 156Q143 156 144 157M144 157Q145 157 146 158M144 157Q146 156 147 156M141 156Q142 155 144 154M144 154Q145 154 146 154M144 154Q144 153 145 152M130 151Q129 155 130 160M130 160Q130 162 129 165M129 165Q128 166 127 167M127 167Q126 168 125 168M127 167Q127 168 127 169M129 165Q128 166 129 168M129 168Q128 170 127 171M129 168Q129 169 130 171M129 168Q128 170 128 171M130 160Q133 162 135 164M135 164Q137 166 139 168M139 168Q140 170 141 172M139 168Q141 168 142 169M135 164Q138 165 140 165M140 165Q142 167 143 168M140 165Q142 165 143 165M135 164Q135 167 136 169M136 169Q135 170 135 172M136 169Q136 170 137 172M136 169Q134 170 133 171M130 160Q128 162 125 164M125 164Q122 164 120 165M120 165Q118 165 116 164M120 165Q119 167 117 169M125 164Q124 166 122 168M122 168Q120 168 119 169M122 168Q122 170 122 171M138 144Q142 147 147 149M147 149Q149 151 152 153M152 153Q152 155 152 157M152 157Q151 158 150 159M152 157Q152 159 152 160M152 153Q154 154 156 154M156 154Q156 156 157 157M156 154Q157 154 158 152M156 154Q157 155 157 157M152 153Q153 156 154 158M154 158Q155 159 155 161M154 158Q156 159 157 161M147 149Q150 150 153 151M153 151Q153 154 153 156M153 156Q153 158 152 159M153 156Q154 157 155 158M153 156Q153 157 154 159M153 151Q155 151 157 150M157 150Q158 150 160 150M157 150Q158 149 159 148M138 144Q143 144 147 142M147 142Q150 144 153 147M153 147Q154 149 155 151M155 151Q155 153 155 154M155 151Q157 152 158 154M153 147Q156 147 159 148M159 148Q161 148 163 149M159 148Q161 146 163 145M147 142Q149 140 152 138M152 138Q154 137 157 136M157 136Q158 137 160 138M157 136Q158 135 159 134M152 138Q153 136 154 134M154 134Q156 133 157 132M154 134Q155 133 155 131M128 151Q126 156 124 160M124 160Q121 161 118 162M118 162Q115 162 113 162M113 162Q111 161 109 161M113 162Q112 163 111 164M118 162Q117 165 116 167M116 167Q116 168 115 170M116 167Q117 168 117 170M116 167Q115 168 114 168M118 162Q116 162 114 161M114 161Q113 160 112 159M114 161Q113 161 112 160M124 160Q124 163 126 166M126 166Q126 169 125 171M125 171Q125 173 124 175M125 171Q127 172 128 174M125 171Q124 173 123 174M126 166Q128 167 131 167M131 167Q132 167 133 168M131 167Q132 167 134 167M126 166Q126 169 125 171M125 171Q124 172 123 173M125 171Q125 172 125 174M128 151Q132 154 136 157M136 157Q139 159 142 161M142 161Q143 164 146 165M146 165Q146 167 147 168M146 165Q147 165 149 165M146 165Q147 167 147 169M142 161Q144 161 146 161M146 161Q148 161 150 161M146 161Q147 159 148 158M146 161Q148 161 150 162M142 161Q143 163 145 164M145 164Q146 165 147 166M145 164Q147 165 148 166M136 157Q140 158 143 159M143 159Q145 161 147 162M147 162Q149 164 150 165M147 162Q149 162 151 161M143 159Q146 158 148 157M148 157Q150 157 151 157M148 157Q149 156 151 155M128 151Q130 156 133 161M133 161Q133 165 133 169M133 169Q131 171 129 173M129 173Q127 173 125 174M129 173Q128 174 127 175M133 169Q135 171 136 174M136 174Q137 176 137 178M136 174Q137 176 138 177M133 161Q136 160 140 160M140 160Q142 162 145 163M145 163Q147 164 148 166M145 163Q147 162 149 162M140 160Q143 160 146 158M146 158Q148 158 150 158M146 158Q147 157 149 156M140 160Q143 161 146 161M146 161Q147 163 149 164M146 161Q147 161 149 160M133 161Q135 164 137 166M137 166Q138 169 138 171M138 171Q138 173 137 174M138 171Q139 172 140 173M138 171Q137 172 136 173M137 166Q140 167 142 168M142 168Q143 169 144 170M142 168Q143 168 145 168M142 168Q143 169 144 171M137 166Q139 169 141 171M141 171Q142 173 142 175M141 171Q144 171 146 171M56 42Q57 47 56 52M56 52Q55 56 55 60M55 60Q55 62 54 64M54 64Q53 66 52 68M52 68Q51 69 50 69M52 68Q52 69 52 70M54 64Q55 66 55 68M55 68Q54 69 54 71M55 68Q56 69 57 71M55 68Q56 70 55 71M54 64Q54 66 53 67M53 67Q52 68 51 68M53 67Q53 68 52 69M55 60Q56 63 57 65M57 65Q57 68 57 70M57 70Q57 71 56 73M57 70Q58 71 59 73M57 70Q57 72 56 73M57 65Q58 67 59 68M59 68Q60 70 60 71M59 68Q61 69 62 70M56 52Q57 56 58 59M58 59Q57 62 56 65M56 65Q54 65 52 66M52 66Q51 65 49 65M52 66Q51 67 50 67M56 65Q56 67 57 68M57 68Q56 69 56 70M57 68Q58 69 59 70M58 59Q59 62 62 63M62 63Q62 65 63 67M63 67Q63 68 64 70M63 67Q64 68 65 68M63 67Q63 68 63 70M62 63Q63 64 65 65M65 65Q66 66 67 67M65 65Q67 65 68 64M62 63Q62 65 62 67M62 67Q61 69 62 70M62 67Q62 69 63 70M56 42Q61 43 66 43M66 43Q69 43 72 44M72 44Q74 45 76 47M76 47Q76 49 76 50M76 50Q76 51 76 53M76 50Q76 51 76 52M76 47Q77 47 79 47M79 47Q80 47 81 47M79 47Q80 47 81 47M79 47Q80 47 81 47M72 44Q75 44 77 44M77 44Q78 45 80 45M80 45Q80 46 81 47M80 45Q81 45 82 45M77 44Q78 43 79 42M79 42Q80 42 81 42M79 42Q79 41 79 40M79 42Q80 42 81 43M66 43Q69 42 73 41M73 41Q75 41 78 41M78 41Q79 42 80 43M80 43Q80 44 80 45M80 43Q81 43 82 44M78 41Q79 40 80 40M80 40Q81 40 82 40M80 40Q81 39 82 39M80 40Q82 40 83 41M73 41Q74 39 75 37M75 37Q76 37 77 36M77 36Q78 37 79 38M77 36Q78 36 79 35M75 37Q76 35 76 34M76 34Q77 33 77 32M76 34Q76 33 77 32M73 41Q75 41 78 42M78 42Q79 42 81 42M81 42Q83 43 84 43M81 42Q82 42 84 41M78 42Q79 42 81 42M81 42Q81 43 82 44M81 42Q82 42 83 41M81 42Q81 43 82 44M56 42Q58 48 59 54M59 54Q59 57 60 61M60 61Q60 63 60 66M60 66Q59 67 58 69M58 69Q57 70 57 71M58 69Q58 70 58 72M60 66Q61 67 62 69M62 69Q62 71 62 72M62 69Q63 70 64 70M62 69Q62 70 62 72M60 66Q60 68 59 70M59 70Q58 71 57 72M59 70Q59 71 60 73M59 70Q58 71 57 72M60 61Q62 62 64 64M64 64Q65 65 65 67M65 67Q64 69 64 70M65 67Q65 69 65 71M65 67Q64 69 63 69M64 64Q66 64 68 65M68 65Q69 66 70 67M68 65Q69 65 71 65M59 54Q61 56 64 59M64 59Q65 61 65 64M65 64Q64 65 63 66M63 66Q61 66 60 65M63 66Q62 67 61 68M65 64Q67 65 68 65M68 65Q69 66 70 67M68 65Q70 65 71 65M65 64Q65 66 64 68M64 68Q63 69 63 70M64 68Q65 69 65 71M64 59Q66 59 68 60M68 60Q69 61 70 62M70 62Q71 63 71 64M70 62Q72 62 73 62M68 60Q69 59 71 58M71 58Q72 59 73 59M71 58Q72 57 72 57M63 23Q67 22 72 23M72 23Q76 25 79 27M79 27Q82 28 84 30M84 30Q86 32 88 32M88 32Q90 33 91 34M88 32Q90 31 91 30M88 32Q90 34 91 35M84 30Q86 32 89 33M89 33Q89 34 90 35M89 33Q90 33 92 32M79 27Q82 26 84 25M84 25Q85 25 87 24M87 24Q88 24 89 25M87 24Q88 24 89 24M87 24Q88 24 89 25M84 25Q85 23 85 21M85 21Q87 20 87 19M85 21Q85 20 85 18M85 21Q87 21 88 21M84 25Q86 25 88 26M88 26Q88 27 89 28M88 26Q89 26 90 25M72 23Q75 21 78 19M78 19Q80 19 83 20M83 20Q84 21 85 23M85 23Q85 24 85 25M85 23Q86 23 86 24M85 23Q84 24 84 26M83 20Q85 20 87 19M87 19Q88 19 90 19M87 19Q88 17 88 16M83 20Q84 22 85 23M85 23Q85 24 84 26M85 23Q87 23 88 23M78 19Q79 18 81 17M81 17Q83 17 84 17M84 17Q85 17 86 17M84 17Q86 16 87 16M81 17Q82 16 83 15M83 15Q84 15 85 15M83 15Q84 14 84 13M83 15Q84 15 85 15M81 17Q83 17 84 16M84 16Q85 16 86 17M84 16Q84 15 83 14M78 19Q80 19 83 18M83 18Q84 17 86 17M86 17Q87 18 88 18M86 17Q86 16 86 15M83 18Q83 16 84 14M84 14Q86 14 87 14M84 14Q84 13 84 12M72 23Q75 25 77 27M77 27Q77 30 77 32M77 32Q77 34 77 35M77 35Q77 36 76 37M77 35Q78 37 79 38M77 32Q78 34 79 35M79 35Q79 36 79 37M79 35Q80 36 81 36M77 27Q79 28 81 29M81 29Q82 31 83 32M83 32Q83 33 83 35M83 32Q84 33 86 34M81 29Q82 30 84 30M84 30Q85 31 86 31M84 30Q85 29 86 29M81 29Q82 31 83 32M83 32Q83 34 83 35M83 32Q84 33 85 34M77 27Q77 30 76 32M76 32Q75 33 74 35M74 35Q73 36 73 37M74 35Q74 36 74 37M74 35Q73 35 72 36M76 32Q77 34 77 35M77 35Q77 36 76 37M77 35Q78 35 80 36M77 35Q78 36 78 37M63 23Q65 18 67 12M67 12Q71 9 74 6M74 6Q76 5 79 4M79 4Q81 4 82 4M82 4Q83 5 84 5M82 4Q83 3 84 2M79 4Q79 2 80 -0M80 -0Q81 -1 82 -2M80 -0Q79 -2 78 -3M74 6Q75 4 76 1M76 1Q78 -0 79 -1M79 -1Q81 -1 82 -1M79 -1Q80 -2 81 -3M76 1Q75 -1 74 -3M74 -3Q73 -5 72 -6M74 -3Q72 -4 71 -4M74 -3Q73 -4 73 -6M74 6Q77 5 79 5M79 5Q81 6 83 7M83 7Q83 8 83 10M83 7Q84 7 86 7M79 5Q81 4 84 3M84 3Q85 4 86 6M84 3Q85 2 86 1M84 3Q85 3 86 3M67 12Q68 8 69 3M69 3Q71 1 73 -2M73 -2Q75 -4 76 -5M76 -5Q78 -5 80 -5M76 -5Q77 -7 78 -7M73 -2Q73 -5 74 -7M74 -7Q76 -8 78 -8M74 -7Q74 -9 75 -10M73 -2Q75 -2 78 -3M78 -3Q80 -3 81 -2M78 -3Q79 -4 81 -4M78 -3Q79 -2 80 -1M69 3Q69 0 69 -3M69 -3Q70 -5 70 -7M70 -7Q70 -8 70 -10M70 -7Q69 -8 68 -10M69 -3Q68 -5 67 -7M67 -7Q67 -9 68 -11M67 -7Q65 -7 63 -7M67 -7Q66 -9 66 -11M69 3Q72 2 74 1M74 1Q76 1 78 2M78 2Q79 3 80 4M78 2Q80 2 81 2M78 2Q79 3 79 4M74 1Q76 -0 78 -2M78 -2Q80 -2 82 -3M78 -2Q79 -3 81 -3M74 1Q76 2 78 3M78 3Q79 4 81 5M78 3Q80 3 82 4M63 23Q68 23 74 22M74 22Q78 23 82 24M82 24Q85 25 86 27M86 27Q87 29 87 30M87 30Q87 31 88 32M87 30Q88 31 88 32M86 27Q88 28 90 29M90 29Q90 30 91 32M90 29Q91 28 93 28M82 24Q85 24 88 24M88 24Q89 25 91 26M91 26Q91 27 91 28M91 26Q92 25 94 25M88 24Q90 23 91 22M91 22Q93 22 94 22M91 22Q92 21 92 19M82 24Q85 25 87 27M87 27Q88 29 88 31M88 31Q88 33 88 35M88 31Q89 32 90 33M87 27Q89 28 92 29M92 29Q93 31 94 32M92 29Q93 30 95 30M74 22Q76 18 78 15M78 15Q80 12 82 10M82 10Q84 9 86 9M86 9Q87 10 88 11M86 9Q87 8 88 8M82 10Q82 8 83 6M83 6Q84 5 85 4M83 6Q82 5 81 4M78 15Q77 12 75 9M75 9Q75 7 75 5M75 5Q76 4 77 3M75 5Q74 3 74 2M75 5Q75 3 75 2M75 9Q73 8 72 7M72 7Q71 6 71 4M72 7Q70 7 69 6M97 201Q97 205 97 210M97 210Q94 213 92 216M92 216Q89 217 86 217M86 217Q85 215 84 214M86 217Q84 217 82 218M86 217Q85 215 84 214M92 216Q90 218 88 220M88 220Q86 220 84 221M88 220Q88 222 89 224M92 216Q89 216 86 216M86 216Q84 214 82 213M86 216Q84 216 82 217M86 216Q84 215 82 215M97 210Q100 213 103 215M103 215Q104 217 106 219M106 219Q107 221 107 223M106 219Q108 220 110 222M103 215Q105 215 108 214M108 214Q110 215 112 215M108 214Q110 213 111 212M103 215Q104 217 105 220M105 220Q106 223 107 225M105 220Q107 221 110 221M97 210Q96 214 95 217M95 217Q94 218 92 220M92 220Q91 220 90 221M92 220Q91 221 90 223M95 217Q96 219 98 220M98 220Q98 222 98 224M98 220Q99 221 101 222M97 201Q99 205 102 209M102 209Q103 211 104 214M104 214Q104 216 104 218M104 218Q103 220 102 221M104 218Q105 219 106 220M104 214Q106 215 107 217M107 217Q108 218 109 219M107 217Q109 216 110 216M102 209Q105 210 108 212M108 212Q109 214 109 217M109 217Q108 218 106 219M109 217Q111 218 112 220M109 217Q108 218 107 220M108 212Q111 213 114 213M114 213Q115 214 117 216M114 213Q115 211 116 210M107 187Q110 188 113 190M113 190Q115 193 116 195M116 195Q117 197 117 199M117 199Q117 201 116 203M117 199Q118 201 119 202M116 195Q118 196 121 197M121 197Q122 198 123 199M121 197Q122 196 123 195M113 190Q116 190 118 190M118 190Q119 190 121 191M121 191Q122 192 123 193M121 191Q122 191 124 191M118 190Q119 189 120 188M120 188Q121 188 122 188M120 188Q120 187 121 186M107 187Q109 183 110 178M110 178Q113 176 115 173M115 173Q117 172 119 171M119 171Q121 171 123 171M119 171Q120 170 121 169M115 173Q114 170 114 168M114 168Q115 166 116 164M114 168Q113 166 112 164M110 178Q108 175 106 173M106 173Q105 171 105 169M105 169Q106 168 107 166M105 169Q105 168 103 167M106 173Q104 173 102 173M102 173Q101 172 100 172M102 173Q101 174 101 175M106 173Q105 172 104 170M104 170Q104 169 104 168M104 170Q103 170 102 169M94 199Q91 202 88 205M88 205Q85 205 82 206M82 206Q80 206 78 205M78 205Q77 205 76 203M78 205Q77 206 75 206M78 205Q77 204 76 203M82 206Q81 207 79 209M79 209Q78 210 76 210M79 209Q79 210 79 212M79 209Q78 209 77 210M82 206Q80 205 78 204M78 204Q77 203 76 202M78 204Q76 205 75 206M78 204Q76 203 75 203M88 205Q86 208 84 211M84 211Q83 213 81 215M81 215Q80 216 78 217M81 215Q81 217 81 219M84 211Q84 214 84 216M84 216Q84 218 84 219M84 216Q85 218 86 220M94 199Q94 203 95 208M95 208Q95 210 94 213M94 213Q92 214 91 216M91 216Q89 215 88 215M91 216Q90 217 89 218M91 216Q89 215 88 214M94 213Q95 215 97 217M97 217Q98 218 99 219M97 217Q98 217 100 217M94 213Q93 215 92 216M92 216Q90 215 89 215M92 216Q91 217 91 218M95 208Q98 210 100 212M100 212Q102 213 103 214M103 214Q104 215 105 216M103 214Q105 214 106 213M100 212Q103 212 105 213M105 213Q106 214 107 216M105 213Q107 212 108 212M95 208Q93 210 92 214M92 214Q91 215 89 217M89 217Q88 217 86 217M89 217Q89 219 89 220M92 214Q93 216 94 219M94 219Q93 220 92 221M94 219Q95 220 97 221M94 219Q94 220 93 222M92 214Q91 216 90 218M90 218Q88 219 86 219M90 218Q90 220 91 222" stroke-width="0.5" fill="none" stroke="#151a19" stroke-linecap="round" opacity=".85"/>
<path d="M67 102Q75 105 83 110M67 102Q72 92 80 84M67 102Q77 104 86 109M117 99Q130 96 141 90M0 6Q13 13 28 17M47 21Q62 19 77 17M12 61Q27 60 41 56M22 156Q33 162 46 166" stroke-width="1.5" fill="none" stroke="#151a19" stroke-linecap="round" opacity=".85"/>
<path d="M-8.0 118.0 L0.0 115.0 L4.7 114.2 L11.1 112.6 L15.6 112.0 L22.2 110.2 L27.0 109.0 L33.5 106.5 L40.0 105.0 L45.5 102.7 L53.0 101.0 L58.5 99.5 L64.3 99.1 L69.0 99.0 L74.8 98.8 L82.7 100.8 L88.0 101.0 L95.1 100.6 L99.7 99.3 L107.0 99.0 L112.2 98.2 L118.4 98.7 L122.1 99.6 L128.0 99.0 L132.5 100.4 L138.4 100.1 L143.4 100.5 L149.0 101.0 L153.9 99.6 L160.7 99.5 L166.1 98.9 L171.0 99.0 L178.4 101.3 L184.0 102.0" stroke="#121614" stroke-width="3.2" fill="none" stroke-linecap="round" stroke-linejoin="round"/>
<path d="M40.0 105.0 L43.2 100.9 L45.5 96.1 L48.0 91.0 L52.6 87.3 L59.3 83.1 L64.0 80.0 L71.3 78.3 L77.0 75.0 L81.5 71.1 L86.2 67.4 L91.0 64.0 L97.0 59.8 L101.0 56.0 L107.1 53.7 L115.0 53.0 L121.9 52.0 L128.0 49.0 L133.2 48.7 L138.6 49.0 L143.2 48.5 L149.0 48.0" stroke="#121614" stroke-width="2.4" fill="none" stroke-linecap="round" stroke-linejoin="round"/>
<path d="M0.0 5.0 L5.4 6.2 L10.0 6.3 L16.0 8.0 L20.5 10.5 L25.3 11.4 L30.0 12.0 L34.3 15.0 L40.0 16.0 L46.0 17.3 L51.2 19.6 L57.0 21.7 L61.4 23.4 L67.0 24.0 L73.2 24.9 L78.3 25.5 L82.5 25.7 L88.0 27.0 L95.1 25.7 L99.8 26.3 L107.0 25.0 L113.5 23.0 L119.7 20.1 L125.0 19.0 L130.8 17.6 L137.5 16.3 L144.0 16.0" stroke="#121614" stroke-width="1.6" fill="none" stroke-linecap="round" stroke-linejoin="round"/>
<path d="M5.0 16.0 L7.8 20.0 L13.1 25.6 L16.0 29.0 L20.2 33.6 L22.8 39.3 L27.0 43.0 L29.7 48.8 L31.4 53.1 L35.0 59.0 L36.2 64.8 L36.8 69.7 L36.4 74.9 L37.0 80.0 L38.3 84.6 L38.3 89.6 L39.3 94.0 L39.8 100.9 L40.0 105.0" stroke="#121614" stroke-width="1.8" fill="none" stroke-linecap="round" stroke-linejoin="round"/>
<path d="M48.0 91.0 L43.4 86.2 L41.0 81.7 L37.0 76.0 L40.7 70.5 L44.0 66.0 L48.8 67.4 L54.8 66.3 L58.2 66.7 L64.0 68.0 L68.4 71.2 L73.9 75.4 L80.0 78.0" stroke="#121614" stroke-width="1.3" fill="none" stroke-linecap="round" stroke-linejoin="round"/>
<path d="M69.0 99.0 L72.9 102.1 L76.3 106.2 L79.8 109.8 L82.7 113.6 L87.0 118.0 L89.8 123.0 L93.1 126.3 L96.4 132.5 L99.5 137.0 L102.0 141.0 L104.3 145.9 L107.8 151.5 L112.0 156.0" stroke="#121614" stroke-width="1.2" fill="none" stroke-linecap="round" stroke-linejoin="round"/>
<path d="M12.0 126.0 L13.9 131.4 L16.5 136.4 L19.1 140.1 L21.8 145.6 L25.3 150.6 L27.0 156.0 L29.9 160.4 L33.6 163.8 L35.8 168.9 L38.9 174.1 L40.9 177.8 L44.2 181.8 L47.0 186.0 L51.1 189.1 L58.0 190.7 L61.6 194.5 L66.2 195.2 L71.1 199.1 L77.0 201.0 L82.5 201.9 L87.2 202.0 L92.3 203.9 L97.0 204.8 L102.0 206.0" stroke="#121614" stroke-width="1.3" fill="none" stroke-linecap="round" stroke-linejoin="round"/>
</svg>
<svg style="position:absolute;left:46px;top:142px" width="474" height="355"><rect x="2.5" y="2.5" width="469" height="350" fill="none" stroke="#f4f0b8" stroke-width="1.5"/><rect x="2.5" y="2.5" width="469" height="350" fill="none" stroke="#000" stroke-width="1.5" stroke-dasharray="2.5 2.5"/></svg>
<div style="left:562px;top:29px;width:55px;height:571px;background:#d4d0c8;"></div>
<svg style="position:absolute;left:566px;top:26px" width="46" height="21"><path d="M12 2 L43 2 L40 19 L4 19 Q1 16 2 12 Q3 8 8 8 L12 7Z" fill="#c9c6be"/><path d="M28 2 L34 2 L31 6Z" fill="#d4d0c8"/><circle cx="5.5" cy="11.5" r="2.8" fill="#dcd9d2"/><circle cx="16" cy="10" r="4.3" fill="#dddad3"/><circle cx="16" cy="10" r="2" fill="#c2beb6"/><circle cx="26.5" cy="11" r="4.7" fill="#dddad3"/><circle cx="26.5" cy="11" r="2.3" fill="#c2beb6"/></svg>
<svg style="position:absolute;left:0;top:0" width="779" height="260"><rect x="571" y="52" width="12" height="8" fill="#f0f0ec" stroke="#707070" stroke-width="1.2"/><ellipse cx="600" cy="56" rx="6" ry="4.5" fill="#f0f0ec" stroke="#707070" stroke-width="1.2"/><path d="M572 78 q2 -6 9 -5 q3 2 -1 5 q-4 3 -7 2 l-1 3" fill="none" stroke="#909090" stroke-width="1.5"/><path d="M596 73 L605 82" stroke="#707070" stroke-width="2"/><circle cx="596" cy="73" r="2" fill="#f8f080"/><rect x="578" y="91" width="4" height="12" fill="#c03020"/><rect x="578" y="91" width="4" height="4" fill="#3050a0"/><rect x="578" y="100" width="4" height="3" fill="#40a040"/><ellipse cx="574" cy="96" rx="3" ry="2.5" fill="#f0a030"/><path d="M596 91 L602 99 M604 91 L598 99" stroke="#707070" stroke-width="1.3"/><circle cx="597" cy="101" r="2" fill="none" stroke="#284890" stroke-width="1.5"/><circle cx="603" cy="101" r="2" fill="none" stroke="#284890" stroke-width="1.5"/><path d="M578 118 q3 -3 5 0 q2 0 2 3 q0 3 -3 3 h-4Z" fill="#fff" stroke="#a0a0a0" stroke-width=".6"/><rect x="571" y="117" width="9" height="5" rx="1" fill="#3a5a9a"/><circle cx="575.5" cy="114.5" r="2.8" fill="#e89848" stroke="#b06020" stroke-width=".5"/><path d="M595 111 V123" stroke="#f4f4f4" stroke-width="2.2"/><path d="M595 111 V123" stroke="#707070" stroke-width="1" stroke-dasharray="1 1"/><path d="M596 111 q4 -1 6 4" stroke="#909090" stroke-width=".7" fill="none"/><circle cx="602" cy="117" r="2.3" fill="#f0e060" stroke="#606020" stroke-width=".6"/><rect x="601" y="119" width="2.5" height="4.5" fill="#2a5aa0"/><path d="M572 144 L573 141 L579 135" stroke="#4a6aa0" stroke-width="2" fill="none"/><path d="M572 144 L579 135" stroke="#c8d8f0" stroke-width=".6"/><circle cx="580.5" cy="133.5" r="2.2" fill="#202020"/><circle cx="599" cy="137" r="5" fill="#b8cce4" stroke="#6080a0" stroke-width="1.1"/><path d="M602.5 140.5 L606 144" stroke="#505050" stroke-width="2"/><path d="M577 153 L578.5 158 L582 162 L581 165 L579 161 L577 163 L575 161 L573 165 L572 162 L575.5 158Z" fill="#6a8ac8" stroke="#2a4a88" stroke-width=".7"/><path d="M600 152.5 L606.5 159 L600 165.5 L593.5 159Z" fill="#3a6ab0" stroke="#1a3a78" stroke-width=".6"/><g fill="#c8d8f0"><circle cx="600" cy="156" r="1"/><circle cx="600" cy="162" r="1"/><circle cx="597" cy="159" r="1"/><circle cx="603" cy="159" r="1"/></g><rect x="574" y="177" width="6" height="6" fill="#f4f4f4" stroke="#888" stroke-width=".6"/><path d="M571 180 h2 M581 180 h2 M577 174 v2 M577 184 v2" stroke="#202020" stroke-width="1.5"/><path d="M595 185 L605 175 M595 185 L605 179 M595 185 L601 175" stroke="#808080" stroke-width="1"/><rect x="571" y="195" width="10" height="9" fill="#5a82c0" stroke="#2a4a88" stroke-width=".8" transform="rotate(-15 577 201)"/><circle cx="574" cy="204" r="2.5" fill="#ddd" stroke="#444" stroke-width=".6"/><rect x="594" y="195" width="12" height="12" fill="#7aa0d8" stroke="#2a4a88" stroke-width=".8"/><rect x="594" y="195" width="6" height="6" fill="#c8d8f0" stroke="#2a4a88" stroke-width=".8"/><path d="M573 215 L582 215 L582 226 L571 226Z" fill="#5a82c0" stroke="#2a4a88" stroke-width=".8"/><path d="M597 215 L603 215 L606 226 L594 226Z" fill="#5a82c0" stroke="#2a4a88" stroke-width=".8"/><path d="M571 236 L583 235 L583 247 L571 246Z" fill="#4a72b8" stroke="#2a4a88" stroke-width=".8"/><path d="M573 241 l2 -2 v4Z M581 241 l-2 -2 v4Z" fill="#fff"/><path d="M576 241 h2" stroke="#fff" stroke-width="1"/><path d="M595 237 L605 245 M595 245 L605 237" stroke="#5a7ab0" stroke-width="1"/><g fill="#3a6ab0" stroke="#1a3a78" stroke-width=".6"><circle cx="595" cy="237" r="2"/><circle cx="605" cy="245" r="2"/><circle cx="595" cy="245" r="2"/><circle cx="605" cy="237" r="2"/><circle cx="600" cy="241" r="2"/></g></svg>
<div style="left:616px;top:29px;width:163px;height:571px;background:#d4d0c8;"></div>
<div style="left:616px;top:47px;width:1px;height:553px;background:#fff;"></div>
<svg style="position:absolute;left:618px;top:32px" width="6" height="8"><path d="M5 0.5 L1 4 L5 7.5Z" fill="#000"/></svg>
<div style="left:626px;top:28px;width:20px;height:20px;background:#dcd9d1;border-top:1px solid #fff;border-left:1px solid #fff;box-sizing:border-box;"></div>
<div style="left:646px;top:29px;width:2px;height:18px;background:#3a3a3a;"></div>
<div style="left:665px;top:29px;width:2px;height:18px;background:#3a3a3a;"></div>
<div style="left:684px;top:29px;width:2px;height:18px;background:#3a3a3a;"></div>
<div style="left:701px;top:29px;width:2px;height:18px;background:#3a3a3a;"></div>
<div style="left:720px;top:29px;width:2px;height:18px;background:#3a3a3a;"></div>
<div style="left:739px;top:29px;width:2px;height:18px;background:#3a3a3a;"></div>
<div style="left:758px;top:29px;width:2px;height:18px;background:#3a3a3a;"></div>
<svg style="position:absolute;left:617px;top:28px" width="162" height="20">
<g stroke="#8a8a8a" stroke-width=".8" fill="#f4f4f4"><path d="M13.5 9.5 L16 4 L26.5 4 L24.5 9.5Z"/><rect x="13.5" y="10.5" width="11" height="2" rx=".8"/><rect x="13.5" y="13.5" width="11" height="2" rx=".8"/></g>
<rect x="33" y="5" width="11" height="10" rx="1" fill="#fff" stroke="#909090" stroke-width=".8"/><g fill="none" stroke="#202020" stroke-width="1"><circle cx="36" cy="8" r="1.2"/><path d="M36 9.5 V12.5"/><circle cx="41" cy="8" r="1.2"/><circle cx="41" cy="12" r="1.2"/></g>
<circle cx="52" cy="4" r="1.3" fill="#d06030"/><circle cx="55" cy="3" r="1.3" fill="#d06030"/><path d="M52 8 q3 -3 8 0 l3 0 l0 7 l-9 0Z" fill="#3a70c0"/>
<rect x="69" y="2" width="14" height="16" fill="#202020"/><rect x="70" y="3" width="12" height="14" fill="#a87838"/><rect x="73" y="5" width="7" height="8" fill="#f4f4f4"/>
<path d="M99.5 3 L93 11" stroke="#b86a28" stroke-width="2.4" stroke-linecap="round"/><path d="M93 11 L91 13.5" stroke="#f0f0f0" stroke-width="2.6"/><path d="M91.5 12.5 L87 17.5 L90 15.5 L92.5 13.5Z" fill="#101010" stroke="#101010" stroke-width="1"/>
<rect x="107" y="3" width="12" height="13" fill="url(#gr1)" stroke="#707070" stroke-width=".8"/>
<rect x="124" y="3" width="15" height="14" fill="#fff" stroke="#909090" stroke-width=".8"/><path d="M127 12 L127 8 L130 6 L133 8 L136 6 L136 12Z" fill="#3a6ab0"/>
<defs><linearGradient id="gr1"><stop offset="0" stop-color="#404040"/><stop offset="1" stop-color="#f0f0f0"/></linearGradient></defs>
<path d="M146 6.5 L149 9 L146 11.5Z" fill="#000"/>
<rect x="156" y="4" width="8" height="9" rx="2" fill="#e8e8e4" stroke="#707070" stroke-width=".8"/><path d="M161 6 L158 8.5 L161 11Z" fill="#000"/>
</svg>
<div style="left:617px;top:47px;width:162px;height:553px;background:#d4d0c8;"></div>
<span class="t" style="left:618px;top:50px;font-size:7px;color:#000;transform:scaleX(0.828);">Modus:</span>
<div style="left:638px;top:47px;width:141px;height:13px;background:#fff;"></div>
<span class="t" style="left:639.5px;top:50px;font-size:7px;color:#000;transform:scaleX(0.887);">Normal</span>
<div style="left:772px;top:48px;width:8px;height:11px;background:#d4d0c8;border-top:1px solid #fff;border-left:1px solid #fff;border-right:1px solid #404040;border-bottom:1px solid #404040;box-sizing:border-box;"></div>
<svg style="position:absolute;left:773px;top:52px" width="6" height="4"><path d="M0 0 L6 0 L3 3Z" fill="#000"/></svg>
<div style="left:618px;top:61px;width:161px;height:16px;background:#bdcbd5;border:1.5px solid #101010;box-sizing:border-box;"></div>
<span class="t" style="left:619px;top:65px;font-size:7px;color:#000;transform:scaleX(0.880);">Deckkraft</span>
<span class="t" style="left:760px;top:65px;font-size:7px;color:#000;transform:scaleX(0.856);">100,0</span>
<div style="left:776px;top:62px;width:1px;height:14px;background:#202020;"></div>
<svg style="position:absolute;left:777px;top:63px" width="2" height="12"><path d="M0 4 L2 4 M0 8 L2 8" stroke="#000" stroke-width="1"/></svg>
<span class="t" style="left:618px;top:81px;font-size:7px;color:#000;transform:scaleX(0.828);">Sperre:</span>
<svg style="position:absolute;left:639px;top:79px" width="12" height="12"><path d="M1 11 L4 7 L10 1" stroke="#c08040" stroke-width="2"/><path d="M1 11 L4 7" stroke="#101010" stroke-width="2.5"/></svg>
<svg style="position:absolute;left:653px;top:80px" width="10" height="10"><rect width="10" height="10" fill="#909090"/><g fill="#505050"><rect x="0" y="0" width="2.5" height="2.5"/><rect x="5" y="0" width="2.5" height="2.5"/><rect x="2.5" y="2.5" width="2.5" height="2.5"/><rect x="7.5" y="2.5" width="2.5" height="2.5"/><rect x="0" y="5" width="2.5" height="2.5"/><rect x="5" y="5" width="2.5" height="2.5"/><rect x="2.5" y="7.5" width="2.5" height="2.5"/><rect x="7.5" y="7.5" width="2.5" height="2.5"/></g></svg>
<div style="left:619px;top:92px;width:160px;height:326px;background:#fff;border-top:1.5px solid #101010;border-left:1.5px solid #101010;box-sizing:border-box;"></div>
<div style="left:620px;top:94px;width:159px;height:18px;background:#d4d0c8;"></div>
<svg style="position:absolute;left:622px;top:98px" width="13" height="9"><path d="M1 4.5 Q6.5 -1 12 4.5 Q6.5 10 1 4.5Z" fill="#fff" stroke="#6a7aa0" stroke-width="1"/><circle cx="6.5" cy="4.5" r="2.3" fill="#2a3a70"/></svg>
<div style="left:665px;top:94px;width:22px;height:17px;background:#fff;"></div>
<svg style="position:absolute;left:666px;top:95px" width="20" height="15"><use href="#th" width="20" height="15"/></svg>
<span class="t" style="left:690px;top:98.5px;font-size:7.5px;color:#000;font-weight:bold;transform:scaleX(0.988);">1030514.jpg</span>
<div style="left:722px;top:418px;width:57px;height:15px;background:#d4d0c8;"></div>
<svg style="position:absolute;left:722px;top:418px" width="57" height="15"><circle cx="2" cy="7" r="3" fill="#3a6ab0"/><g stroke="#606060" stroke-width="1.3" fill="none"><circle cx="23" cy="3" r="1.5"/><path d="M23 4.5 V12 M19 9 Q23 14 27 9 M20 7 H26"/></g><path d="M44 3 h8 l-1 10 h-6Z" fill="#c8c8c8" stroke="#505050" stroke-width="1"/><path d="M43 4 h10" stroke="#505050" stroke-width="1.5"/></svg>
<div style="left:722px;top:432px;width:57px;height:1.5px;background:#101010;"></div>
<div style="left:722px;top:434px;width:57px;height:22px;background:#d4d0c8;"></div>
<div style="left:772px;top:442px;width:7px;height:9px;background:#d4d0c8;border-top:1px solid #fff;border-left:1px solid #fff;border-right:1px solid #404040;border-bottom:1px solid #404040;box-sizing:border-box;"></div>
<svg style="position:absolute;left:774px;top:444px" width="5" height="5"><path d="M4 0 L1 2.5 L4 5Z" fill="#000"/></svg>
<div style="left:722px;top:456px;width:57px;height:1px;background:#101010;"></div>
<div style="left:722px;top:457px;width:57px;height:11px;background:#fff;"></div>
<svg style="position:absolute;left:772px;top:460px" width="7" height="4"><path d="M0 0 L6 0 L3 3Z" fill="#000"/></svg>
<div style="left:722px;top:468px;width:57px;height:9px;background:#d4d0c8;"></div>
<div style="left:722px;top:477px;width:57px;height:1.5px;background:#101010;"></div>
<div style="left:722px;top:478px;width:49px;height:76px;background:#fff;"></div>
<div style="left:771px;top:478px;width:8px;height:76px;background:#e9e8e2;"></div>
<div style="left:771px;top:479px;width:8px;height:9px;background:#d4d0c8;border-top:1px solid #fff;border-left:1px solid #fff;border-right:1px solid #404040;border-bottom:1px solid #404040;box-sizing:border-box;"></div>
<div style="left:771px;top:545px;width:8px;height:9px;background:#d4d0c8;border-top:1px solid #fff;border-left:1px solid #fff;border-right:1px solid #404040;border-bottom:1px solid #404040;box-sizing:border-box;"></div>
<svg style="position:absolute;left:771px;top:479px" width="8" height="75"><path d="M2 6 L4 3 L6 6Z M2 69 L6 69 L4 72Z" fill="#000"/></svg>
<div style="left:771px;top:488px;width:8px;height:10px;background:#d4d0c8;border-top:1px solid #fff;border-left:1px solid #fff;border-right:1px solid #404040;border-bottom:1px solid #404040;box-sizing:border-box;"></div>
<svg style="position:absolute;left:722px;top:478px" width="57" height="76">
<path d="M9 7 h10" stroke="#606060" stroke-width="1.5" stroke-dasharray="1 1"/><path d="M28 5 h15" stroke="#e0e070" stroke-width="1.3" stroke-dasharray="2 1"/>
<g fill="#202840"><circle cx="14" cy="17" r="1"/><circle cx="42" cy="17" r="1"/><circle cx="14" cy="40" r="1"/><circle cx="42" cy="40" r="1"/><circle cx="14" cy="62" r="1"/><circle cx="42" cy="62" r="1"/></g>
<circle cx="10" cy="27" r="1" fill="#000"/><rect x="25" y="27" width="18" height="5" fill="#000"/>
<circle cx="12.5" cy="52.5" r="9.5" fill="#000"/><path d="M34.0 42.5 L36.4 48.8 L43.0 49.1 L37.8 53.2 L39.6 59.7 L34.0 56.0 L28.4 59.7 L30.2 53.2 L25.0 49.1 L31.6 48.8Z" fill="#000"/>
<path d="M9 61 l3 6" stroke="#555" stroke-width="1"/><g fill="#444"><circle cx="30" cy="68" r=".7"/><circle cx="36" cy="72" r=".7"/><circle cx="40" cy="70" r=".7"/></g>
</svg>
<div style="left:722px;top:554px;width:57px;height:2px;background:#d4d0c8;"></div>
<div style="left:722px;top:556px;width:57px;height:1px;background:#101010;"></div>
<div style="left:722px;top:557px;width:57px;height:11px;background:#fff;"></div>
<svg style="position:absolute;left:772px;top:561px" width="7" height="4"><path d="M0 0 L6 0 L3 3Z" fill="#000"/></svg>
<div style="left:722px;top:568px;width:57px;height:2px;background:#d4d0c8;"></div>
<div style="left:722px;top:570px;width:57px;height:14px;background:#fff;border-top:1px solid #101010;box-sizing:border-box;"></div>
<span class="t" style="left:764px;top:574px;font-size:7px;color:#000;transform:scaleX(0.807);">10,0</span>
<div style="left:722px;top:584px;width:57px;height:16px;background:#d4d0c8;"></div>
<div style="left:722px;top:584px;width:57px;height:1px;background:#a0a0a0;"></div>
<div style="left:722px;top:585px;width:57px;height:1px;background:#f4f3ee;"></div>
<svg style="position:absolute;left:722px;top:584px" width="57" height="16"><path d="M7 5 h7 l-1 8 h-5Z" fill="#b8b8b8" stroke="#505050" stroke-width="1"/><ellipse cx="10.5" cy="5" rx="4" ry="1.5" fill="#d0d0d0" stroke="#505050" stroke-width="1"/><rect x="39" y="4" width="9" height="9" rx="2" fill="#5a8ad0" stroke="#2a5aa0" stroke-width=".8"/><path d="M41 7 h5 M46 10 h-5" stroke="#fff" stroke-width="1"/></svg>
<div style="left:433px;top:250px;width:289px;height:349px;background:#d4d0c8;border-top:1px solid #e8e6e0;border-left:1px solid #e8e6e0;border-right:1px solid #202020;border-bottom:1px solid #202020;box-sizing:border-box;box-shadow:inset -1px -1px 0 #808080, inset 1px 1px 0 #fff;"></div>
<div style="left:435px;top:252px;width:285px;height:11px;background:linear-gradient(90deg,#0a246a 0%,#3a5a9c 45%,#a6caf0 100%);"></div>
<svg style="position:absolute;left:437px;top:254px" width="9" height="7"><use href="#th" width="9" height="7"/></svg>
<span class="t" style="left:447px;top:252.5px;font-size:8.5px;color:#fff;font-weight:bold;transform:scaleX(0.854);">Kurven</span>
<div style="left:708px;top:254px;width:10px;height:8px;background:#d4d0c8;border-top:1px solid #fff;border-left:1px solid #fff;border-right:1px solid #404040;border-bottom:1px solid #404040;box-sizing:border-box;"></div>
<svg style="position:absolute;left:709px;top:255px" width="8" height="6"><path d="M2 0.5 L6 5.5 M6 0.5 L2 5.5" stroke="#000" stroke-width="1.3"/></svg>
<div style="left:438px;top:266px;width:14px;height:15px;background:#f4f4f0;border:1px solid #606060;box-sizing:border-box;"></div>
<svg style="position:absolute;left:439px;top:267px" width="12" height="13"><path d="M2 11 Q6 10 10 3" stroke="#303030" stroke-width="1" fill="none"/><path d="M7 9 L10 11 L9 7Z" fill="#202020"/></svg>
<span class="t" style="left:456px;top:267px;font-size:8.5px;color:#000;font-weight:bold;transform:scaleX(0.978);">Farbkurven korrigieren</span>
<span class="t" style="left:456px;top:276px;font-size:6.5px;color:#000;transform:scaleX(0.870);">1030514.jpg-2 ([1030514](importiert))</span>
<svg style="position:absolute;left:695px;top:266px" width="22" height="17"><use href="#th" width="22" height="17"/></svg>
<div style="left:435px;top:284px;width:284px;height:1px;background:#a0a0a0;"></div>
<div style="left:435px;top:285px;width:284px;height:1px;background:#fff;"></div>
<span class="t" style="left:439px;top:294px;font-size:7px;color:#000;transform:scaleX(0.910);">Einstellungen:</span>
<div style="left:484px;top:289px;width:197px;height:15px;background:#fff;border:1.5px solid #101010;border-right-width:2px;border-bottom-width:2px;box-sizing:border-box;"></div>
<div style="left:670px;top:291px;width:9px;height:11px;background:#d4d0c8;border-top:1px solid #fff;border-left:1px solid #fff;border-right:1px solid #404040;border-bottom:1px solid #404040;box-sizing:border-box;"></div>
<svg style="position:absolute;left:672px;top:295px" width="7" height="4"><path d="M0 0 L6 0 L3 3Z" fill="#000"/></svg>
<svg style="position:absolute;left:688px;top:291px" width="10" height="10"><path d="M5 1.5 V8.5 M1.5 5 H8.5" stroke="#4a78c0" stroke-width="2.2"/></svg>
<div style="left:703px;top:292px;width:8px;height:8px;border:1px solid #707070;border-radius:2px;box-sizing:border-box;"></div>
<svg style="position:absolute;left:705px;top:294px" width="4" height="4"><path d="M3.5 0 L0.5 2 L3.5 4Z" fill="#000"/></svg>
<span class="t" style="left:450px;top:313.5px;font-size:7px;color:#000;transform:scaleX(0.907);">Kanal:</span>
<div style="left:484px;top:308px;width:48px;height:17px;background:#fff;border-top:1px solid #808080;border-left:1px solid #808080;border-right:1px solid #fff;border-bottom:1px solid #fff;box-sizing:border-box;box-shadow:inset 1px 1px 0 #404040;"></div>
<span class="t" style="left:487px;top:313.5px;font-size:7px;color:#000;transform:scaleX(0.956);">Wert</span>
<div style="left:521px;top:309px;width:10px;height:15px;background:#d4d0c8;border-top:1px solid #fff;border-left:1px solid #fff;border-right:1px solid #404040;border-bottom:1px solid #404040;box-sizing:border-box;"></div>
<svg style="position:absolute;left:523px;top:315px" width="7" height="4"><path d="M0 0 L6 0 L3 3Z" fill="#000"/></svg>
<div style="left:536px;top:308px;width:64px;height:17px;background:#d4d0c8;border-top:1px solid #fff;border-left:1px solid #fff;border-right:1px solid #404040;border-bottom:1px solid #404040;box-sizing:border-box;"></div>
<span class="t" style="left:540px;top:313.5px;font-size:7px;color:#000;transform:scaleX(0.917);">Kanal zurücksetzen</span>
<div style="left:681px;top:307px;width:18px;height:19px;background:#e8e6e0;border:1px solid #fff;box-sizing:border-box;"></div>
<div style="left:683px;top:309px;width:14px;height:15px;background:#d4d0c8;border-top:1px solid #fff;border-left:1px solid #fff;border-right:1px solid #404040;border-bottom:1px solid #404040;box-sizing:border-box;"></div>
<div style="left:702px;top:309px;width:12px;height:15px;background:#d4d0c8;border-top:1px solid #fff;border-left:1px solid #fff;border-right:1px solid #404040;border-bottom:1px solid #404040;box-sizing:border-box;"></div>
<svg style="position:absolute;left:685px;top:312px" width="30" height="10"><path d="M2 2 V8 H9 M2 7 L5 4 L8 7" stroke="#2a5aa0" stroke-width="1.3" fill="none"/><path d="M20 8 V3 Q23 1 26 5 V8Z" fill="#2a5aa0"/></svg>
<div style="left:439px;top:331px;width:10px;height:190px;background:linear-gradient(180deg,#fff 0%,#000 100%);border:1px solid #606060;box-sizing:border-box;"></div>
<div style="left:450px;top:328px;width:266px;height:197px;background:#fff;border-top:1px solid #404040;border-left:1px solid #404040;border-right:1px solid #fff;border-bottom:1px solid #fff;box-sizing:border-box;"></div>
<svg style="position:absolute;left:0;top:0" width="779" height="600">
<polygon points="454.6,520.0 454.6,341.9 455.6,379.4 456.6,435.6 457.6,473.1 458.6,485.3 459.6,497.5 460.6,500.6 461.6,503.8 462.7,506.9 463.7,507.8 464.7,508.8 465.7,509.7 466.7,510.6 467.7,510.9 468.7,511.1 469.7,511.4 470.7,511.6 471.7,511.9 472.7,512.1 473.7,512.1 474.7,512.4 475.7,511.9 476.8,512.2 477.8,511.8 478.8,511.8 479.8,512.8 480.8,512.9 481.8,511.4 482.8,512.5 483.8,512.5 484.8,511.1 485.8,512.1 486.8,511.4 487.8,512.1 488.8,511.8 489.8,512.7 490.9,511.8 491.9,511.4 492.9,512.1 493.9,511.7 494.9,511.8 495.9,513.0 496.9,511.7 497.9,512.0 498.9,512.5 499.9,513.1 500.9,511.5 501.9,512.2 502.9,511.8 503.9,511.5 505.0,511.8 506.0,511.4 507.0,512.4 508.0,511.7 509.0,512.4 510.0,511.5 511.0,511.6 512.0,513.0 513.0,513.0 514.0,512.8 515.0,511.4 516.0,512.4 517.0,511.9 518.0,512.5 519.1,512.0 520.1,512.1 521.1,512.1 522.1,511.6 523.1,511.5 524.1,510.9 525.1,511.2 526.1,510.6 527.1,510.7 528.1,509.5 529.1,509.2 530.1,509.2 531.1,506.9 532.1,505.8 533.2,505.0 534.2,505.6 535.2,505.3 536.2,506.3 537.2,505.1 538.2,505.6 539.2,506.2 540.2,506.6 541.2,505.1 542.2,504.8 543.2,506.5 544.2,505.2 545.2,505.9 546.2,506.4 547.2,506.1 548.3,505.2 549.3,505.1 550.3,506.6 551.3,505.5 552.3,506.6 553.3,505.3 554.3,506.4 555.3,505.7 556.3,505.8 557.3,507.0 558.3,506.4 559.3,508.0 560.3,508.4 561.3,507.4 562.4,508.5 563.4,508.2 564.4,507.8 565.4,507.4 566.4,508.3 567.4,508.5 568.4,506.9 569.4,508.0 570.4,506.8 571.4,506.9 572.4,507.9 573.4,507.7 574.4,507.6 575.4,507.4 576.5,507.4 577.5,507.5 578.5,507.4 579.5,506.8 580.5,507.6 581.5,507.8 582.5,505.9 583.5,507.5 584.5,498.5 585.5,495.6 586.5,492.9 587.5,491.0 588.5,498.7 589.5,498.6 590.6,489.5 591.6,493.2 592.6,496.6 593.6,492.1 594.6,493.4 595.6,492.4 596.6,492.1 597.6,479.3 598.6,485.6 599.6,489.9 600.6,488.7 601.6,485.7 602.6,488.1 603.6,484.7 604.7,482.7 605.7,485.1 606.7,479.7 607.7,481.4 608.7,484.4 609.7,483.3 610.7,476.3 611.7,481.7 612.7,477.6 613.7,480.3 614.7,480.4 615.7,480.3 616.7,478.4 617.7,478.1 618.8,471.3 619.8,472.5 620.8,466.6 621.8,472.7 622.8,475.0 623.8,476.2 624.8,480.5 625.8,474.4 626.8,481.2 627.8,484.1 628.8,477.8 629.8,476.1 630.8,471.8 631.8,484.3 632.8,479.6 633.9,482.5 634.9,480.9 635.9,485.0 636.9,483.0 637.9,484.7 638.9,483.2 639.9,487.3 640.9,480.7 641.9,475.5 642.9,478.3 643.9,490.8 644.9,490.3 645.9,483.7 646.9,495.6 648.0,497.4 649.0,483.8 650.0,497.1 651.0,497.8 652.0,496.5 653.0,501.7 654.0,503.5 655.0,498.6 656.0,504.7 657.0,508.1 658.0,511.6 659.0,515.0 660.0,518.5 661.0,518.5 662.1,518.5 663.1,518.5 664.1,518.6 665.1,518.6 666.1,518.6 667.1,518.6 668.1,518.6 669.1,518.6 670.1,518.6 671.1,518.7 672.1,518.7 673.1,518.7 674.1,518.7 675.1,518.7 676.2,518.7 677.2,518.8 678.2,518.8 679.2,518.8 680.2,518.8 681.2,518.8 682.2,518.8 683.2,518.8 684.2,518.9 685.2,518.9 686.2,518.9 687.2,518.9 688.2,518.9 689.2,518.9 690.3,518.9 691.3,519.0 692.3,519.0 693.3,519.0 694.3,519.0 695.3,519.0 696.3,519.0 697.3,519.0 698.3,519.1 699.3,519.1 700.3,519.1 701.3,519.1 702.3,519.1 703.3,519.1 704.4,519.1 705.4,519.2 706.4,519.2 707.4,519.2 708.4,519.2 709.4,519.2 710.4,519.2 711.4,519.2 711.4,520.0" fill="#c8c6be"/>
<g stroke="#a8a49c" stroke-width="1" fill="none"><path d="M454.5 332.5 V520.0"/><path d="M454.6 332.5 H711.4"/><path d="M486.5 332.5 V520.0"/><path d="M454.6 355.5 H711.4"/><path d="M518.5 332.5 V520.0"/><path d="M454.6 379.5 H711.4"/><path d="M550.5 332.5 V520.0"/><path d="M454.6 402.5 H711.4"/><path d="M583.5 332.5 V520.0"/><path d="M454.6 426.5 H711.4"/><path d="M615.5 332.5 V520.0"/><path d="M454.6 449.5 H711.4"/><path d="M647.5 332.5 V520.0"/><path d="M454.6 473.5 H711.4"/><path d="M679.5 332.5 V520.0"/><path d="M454.6 496.5 H711.4"/><path d="M711.5 332.5 V520.0"/><path d="M454.6 520.5 H711.4"/></g>
<path d="M454.6 520.0 C506.0 520.0 685.7 360.6 711.4 332.5" stroke="#d88880" stroke-width="1" fill="none"/>
<path d="M454.6 520.0 L711.4 332.5" stroke="#000" stroke-width="1.3"/>
<circle cx="454.6" cy="520.0" r="2.2" fill="#000"/>
<circle cx="711.4" cy="332.5" r="2.5" fill="#fff" stroke="#000" stroke-width="1"/>
</svg>
<div style="left:454px;top:525px;width:260px;height:10px;background:linear-gradient(90deg,#000 0%,#fff 100%);border:1px solid #606060;box-sizing:border-box;"></div>
<span class="t" style="left:439px;top:541.5px;font-size:7px;color:#000;transform:scaleX(0.956);">Kurventyp:</span>
<div style="left:476px;top:539px;width:239px;height:13px;background:#fff;border-top:1px solid #808080;border-left:1px solid #808080;border-right:1px solid #fff;border-bottom:1px solid #fff;box-sizing:border-box;box-shadow:inset 1px 1px 0 #404040;"></div>
<svg style="position:absolute;left:478px;top:541px" width="10" height="8"><path d="M1 7 Q3 1 5 5 Q7 8 9 1" stroke="#303030" stroke-width=".8" fill="none"/></svg>
<span class="t" style="left:488px;top:542px;font-size:7px;color:#000;transform:scaleX(0.828);">Weich</span>
<div style="left:704px;top:540px;width:10px;height:11px;background:#d4d0c8;border-top:1px solid #fff;border-left:1px solid #fff;border-right:1px solid #404040;border-bottom:1px solid #404040;box-sizing:border-box;"></div>
<svg style="position:absolute;left:706px;top:544px" width="7" height="4"><path d="M0 0 L6 0 L3 3Z" fill="#000"/></svg>
<div style="left:440px;top:558px;width:9px;height:9px;background:#fff;border-top:1px solid #808080;border-left:1px solid #808080;border-right:1px solid #fff;border-bottom:1px solid #fff;box-sizing:border-box;box-shadow:inset 1px 1px 0 #404040;"></div>
<svg style="position:absolute;left:441px;top:559px" width="7" height="7"><path d="M1 3.5 L3 5.5 L6.5 1" stroke="#000" stroke-width="1.4" fill="none"/></svg>
<span class="t" style="left:452px;top:559px;font-size:7px;color:#000;transform:scaleX(0.925);">Vorschau</span>
<div style="left:439px;top:577px;width:53px;height:16px;background:#d4d0c8;border-top:1px solid #fff;border-left:1px solid #fff;border-right:1px solid #404040;border-bottom:1px solid #404040;box-sizing:border-box;"></div>
<span class="t" style="left:459.5px;top:582px;font-size:7px;color:#000;transform:scaleX(0.857);">Hilfe</span>
<div style="left:552px;top:577px;width:53px;height:16px;background:#d4d0c8;border-top:1px solid #fff;border-left:1px solid #fff;border-right:1px solid #404040;border-bottom:1px solid #404040;box-sizing:border-box;"></div>
<span class="t" style="left:560.5px;top:582px;font-size:7px;color:#000;transform:scaleX(0.857);">Zurücksetzen</span>
<div style="left:608px;top:577px;width:53px;height:16px;background:#d4d0c8;border-top:1px solid #fff;border-left:1px solid #fff;border-right:1px solid #404040;border-bottom:1px solid #404040;box-sizing:border-box;"></div>
<span class="t" style="left:630.0px;top:582px;font-size:7px;color:#000;transform:scaleX(0.890);">OK</span>
<div style="left:664px;top:577px;width:52px;height:16px;background:#d4d0c8;border-top:1px solid #fff;border-left:1px solid #fff;border-right:1px solid #404040;border-bottom:1px solid #404040;box-sizing:border-box;"></div>
<span class="t" style="left:675.0px;top:582px;font-size:7px;color:#000;transform:scaleX(0.886);">Abbrechen</span>
</body></html>
